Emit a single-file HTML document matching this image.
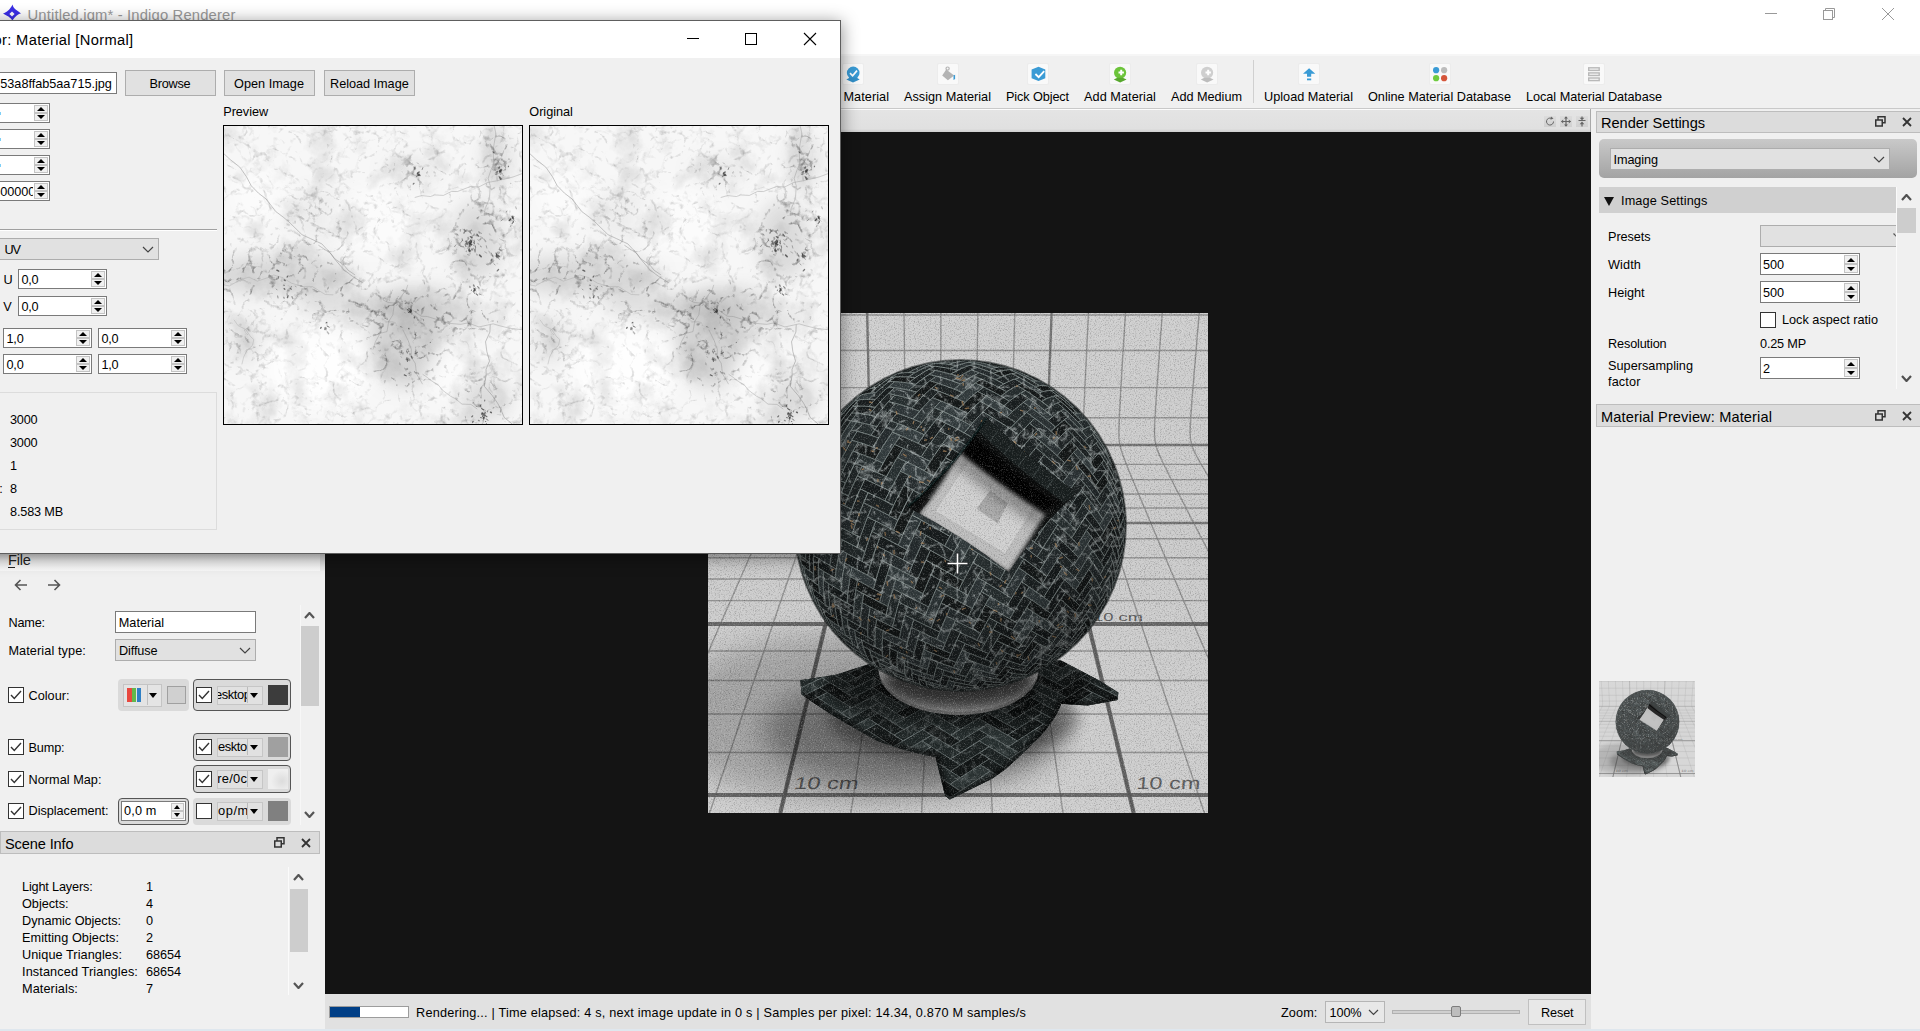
<!DOCTYPE html>
<html lang="en"><head><meta charset="utf-8"><title>Untitled.igm* - Indigo Renderer</title>
<style>
html,body{margin:0;padding:0}
body{width:1920px;height:1031px;overflow:hidden;position:relative;background:#f0f0f0;font-family:"Liberation Sans",sans-serif;font-size:12.7px;color:#000}
div,span.t,svg{position:absolute;box-sizing:border-box}
span.t{white-space:pre}
.clip{overflow:hidden}
.spin{background:#fff;border:1px solid #7a7a7a}
.sbtn{background:#f0f0f0;border:1px solid #c4c4c4}
.combo{background:#e1e1e1;border:1px solid #adadad}
.btn{background:#e1e1e1;border:1px solid #adadad}
.cb{background:#fff;border:1px solid #333}
.grp{background:#dadada;border-radius:4px}
.grpb{background:#dadada;border-radius:4px;border:1px solid #555}
.dock{background:#dcdcdc;border:1px solid #bdbdbd}

</style></head>
<body>
<div style="left:0px;top:0px;width:1920px;height:55px;background:#fff"></div>
<div style="left:0px;top:54px;width:1920px;height:2px;background:#f6f6f6"></div>
<svg style="left:2px;top:4px" width="20" height="17" viewBox="2 4 20 17"><path d="M12.6,4.6 C13,7.4 14.6,9.2 21,13.4 C17.4,14.2 15.6,16 12.2,20.8 C11.4,18.4 9.2,16.8 3,13.6 C7,12.4 9.6,10 12.6,4.6 Z" fill="#3a2ee6"/><path d="M12,11.4 L14.6,14 L12,16.6 L9.4,14 Z" fill="#fff"/></svg>
<span class="t" style="left:27.5px;top:8.17px;font-size:14.8px;line-height:14.8px;color:#9a9a9a;letter-spacing:0.156px;">Untitled.igm* - Indigo Renderer</span>
<div style="left:1765px;top:13px;width:12px;height:1px;background:#999"></div>
<svg style="left:1822px;top:7px" width="14" height="14" viewBox="0 0 14 14"><path d="M3.5,3.5 V1.5 H12.5 V10.5 H10.5" fill="none" stroke="#999" stroke-width="1"/><rect x="1.5" y="3.5" width="9" height="9" fill="none" stroke="#999" stroke-width="1"/></svg>
<svg style="left:1881px;top:7px" width="14" height="14" viewBox="0 0 14 14"><path d="M1,1 L13,13 M13,1 L1,13" stroke="#999" stroke-width="1" fill="none"/></svg>
<div style="left:0px;top:108px;width:1920px;height:1px;background:#c9c9c9"></div>
<div style="left:842px;top:63px;width:22px;height:22px;background:#f9f9f9;border:1px solid #ececec;border-radius:2px"></div><svg style="left:842px;top:63px" width="22" height="22" viewBox="0 0 22 22"><circle cx="11.2" cy="9.9" r="6.3" fill="#3a9bd5"/><path d="M4.3,16.4 L8,14.6 L14.4,14.6 L17.7,16.4 L11,19.4 Z" fill="#3390c8"/><polyline points="8,10.2 10.6,12.8 15,7.6" fill="none" stroke="#fff" stroke-width="1.7"/></svg><span class="t" style="left:843.5px;top:91.15px;font-size:12.7px;line-height:12.7px;color:#000;letter-spacing:0.047px;">Material</span>
<div style="left:937px;top:63px;width:22px;height:22px;background:#f9f9f9;border:1px solid #ececec;border-radius:2px"></div><svg style="left:937px;top:63px" width="22" height="22" viewBox="0 0 22 22"><path d="M9.2,6.4 L17.2,12.4 L10.9,17.2 L5.2,12.4 Z" fill="#b4b4b4"/><circle cx="10.6" cy="5.6" r="1.6" fill="none" stroke="#b4b4b4" stroke-width="1.2"/><path d="M16.5,12.6 L18.1,11.8 V16 L16.5,16.9 Z" fill="#3a9bd5"/></svg><span class="t" style="left:904px;top:91.15px;font-size:12.7px;line-height:12.7px;color:#000;letter-spacing:0.018px;">Assign Material</span>
<div style="left:1027px;top:63px;width:22px;height:22px;background:#f9f9f9;border:1px solid #ececec;border-radius:2px"></div><svg style="left:1027px;top:63px" width="22" height="22" viewBox="0 0 22 22"><path d="M11.5,3.8 L18.3,6.6 V15.2 L11.5,18.1 L4.6,15.2 V6.6 Z" fill="#3a9bd5"/><polyline points="8.4,11 11.7,14.2 17.2,8.2" fill="none" stroke="#fff" stroke-width="1.8"/></svg><span class="t" style="left:1006px;top:91.15px;font-size:12.7px;line-height:12.7px;color:#000;letter-spacing:-0.107px;">Pick Object</span>
<div style="left:1109px;top:63px;width:22px;height:22px;background:#f9f9f9;border:1px solid #ececec;border-radius:2px"></div><svg style="left:1109px;top:63px" width="22" height="22" viewBox="0 0 22 22"><circle cx="11.1" cy="9.8" r="6.1" fill="#6cc43a"/><path d="M4.8,16.6 L8.4,14.8 L13.8,14.8 L17.6,16.6 L11.1,19.4 Z" fill="#58a82e"/><path d="M12.2,6.8 V12.2 M9.5,9.5 H14.9" stroke="#fff" stroke-width="2" fill="none"/></svg><span class="t" style="left:1084px;top:91.15px;font-size:12.7px;line-height:12.7px;color:#000;letter-spacing:0.064px;">Add Material</span>
<div style="left:1196px;top:63px;width:22px;height:22px;background:#f9f9f9;border:1px solid #ececec;border-radius:2px"></div><svg style="left:1196px;top:63px" width="22" height="22" viewBox="0 0 22 22"><circle cx="11.1" cy="9.8" r="6.1" fill="#cfcfcf"/><path d="M4.8,16.6 L8.4,14.8 L13.8,14.8 L17.6,16.6 L11.1,19.4 Z" fill="#bdbdbd"/><path d="M12.2,6.8 V12.2 M9.5,9.5 H14.9" stroke="#fff" stroke-width="2" fill="none"/></svg><span class="t" style="left:1171px;top:91.15px;font-size:12.7px;line-height:12.7px;color:#000;letter-spacing:-0.023px;">Add Medium</span>
<div style="left:1253px;top:60px;width:1px;height:43px;background:#d0d0d0"></div>
<div style="left:1298px;top:63px;width:22px;height:22px;background:#f9f9f9;border:1px solid #ececec;border-radius:2px"></div><svg style="left:1298px;top:63px" width="22" height="22" viewBox="0 0 22 22"><path d="M11.1,5.2 L17.3,10.8 H13.2 V13.7 H9 V10.8 H5 Z" fill="#3a9bd5"/><rect x="9" y="15.5" width="4.2" height="1.8" fill="#3a9bd5"/></svg><span class="t" style="left:1264px;top:91.15px;font-size:12.7px;line-height:12.7px;color:#000;letter-spacing:0.009px;">Upload Material</span>
<div style="left:1429px;top:63px;width:22px;height:22px;background:#f9f9f9;border:1px solid #ececec;border-radius:2px"></div><svg style="left:1429px;top:63px" width="22" height="22" viewBox="0 0 22 22"><circle cx="7.1" cy="7.2" r="3.1" fill="#3a9bd5"/><circle cx="15.1" cy="7.2" r="3.1" fill="#bcbcbc"/><circle cx="7.1" cy="15.2" r="3.1" fill="#6fcb3f"/><circle cx="15.1" cy="15.2" r="3.1" fill="#d5553a"/></svg><span class="t" style="left:1368px;top:91.15px;font-size:12.7px;line-height:12.7px;color:#000;letter-spacing:-0.007px;">Online Material Database</span>
<div style="left:1583px;top:63px;width:22px;height:22px;background:#f9f9f9;border:1px solid #ececec;border-radius:2px"></div><svg style="left:1583px;top:63px" width="22" height="22" viewBox="0 0 22 22"><rect x="5.7" y="4.8" width="10.5" height="2.6" fill="#f4f4f4" stroke="#b9b9b9" stroke-width="1.4"/><rect x="5.7" y="9.9" width="10.5" height="2.6" fill="#f4f4f4" stroke="#b9b9b9" stroke-width="1.4"/><rect x="5.7" y="15" width="10.5" height="2.6" fill="#f4f4f4" stroke="#b9b9b9" stroke-width="1.4"/></svg><span class="t" style="left:1526px;top:91.15px;font-size:12.7px;line-height:12.7px;color:#000;letter-spacing:-0.036px;">Local Material Database</span>
<div style="left:325px;top:109px;width:1266px;height:1px;background:#fcfcfc"></div>
<div style="left:325px;top:110px;width:1266px;height:22px;background:linear-gradient(#e4e4e4,#e0e0e0 85%,#cfcfcf)"></div>
<div style="left:1590px;top:109px;width:1px;height:23px;background:#a9a9a9"></div>
<div style="left:1544px;top:116px;width:12px;height:11px;background:linear-gradient(#dcdcdc,#d0d0d0)"></div>
<div style="left:1560px;top:116px;width:12px;height:11px;background:linear-gradient(#dcdcdc,#d0d0d0)"></div>
<div style="left:1576px;top:116px;width:12px;height:11px;background:linear-gradient(#dcdcdc,#d0d0d0)"></div>
<svg style="left:1544px;top:116px" width="44" height="11" viewBox="0 0 44 11"><path d="M9.5,5.5 A3.5,3.5 0 1 1 7.3,2.3" fill="none" stroke="#666" stroke-width="1"/><path d="M7,0.5 L9.5,2.5 L6.5,3.8 Z" fill="#666"/><path d="M22,1 V10 M17.5,5.5 H26.5" stroke="#666" stroke-width="1.2"/><path d="M22,0.2 L24,2.6 H20 Z M22,10.8 L24,8.4 H20 Z M17,5.5 L19.2,3.5 V7.5 Z M27,5.5 L24.8,3.5 V7.5 Z" fill="#666"/><path d="M34.5,4.5 H41.5 M38,0.5 V3 M38,10.5 V7" stroke="#666" stroke-width="1.2"/><path d="M38,4.2 L40.3,1.8 H35.7 Z M38,5.6 L40.3,8.2 H35.7 Z" fill="#666"/></svg>
<div style="left:325px;top:132px;width:1266px;height:862px;background:#141414"></div>
<div style="left:325px;top:994px;width:1266px;height:35px;background:#e1e1e1"></div>
<div style="left:329px;top:1006px;width:80px;height:12px;background:#fff;border:1px solid #9c9c9c"></div>
<div style="left:330px;top:1007px;width:30px;height:10px;background:#003f87"></div>
<span class="t" style="left:416px;top:1006.75px;font-size:12.7px;line-height:12.7px;color:#000;letter-spacing:0.214px;">Rendering... | Time elapsed: 4 s, next image update in 0 s | Samples per pixel: 14.34, 0.870 M samples/s</span>
<span class="t" style="left:1281px;top:1006.75px;font-size:12.7px;line-height:12.7px;color:#000;letter-spacing:0.106px;">Zoom:</span>
<div style="left:1325px;top:1001px;width:60px;height:22px;background:#e8e8e8;border:1px solid #b5b5b5"></div>
<span class="t" style="left:1329.5px;top:1006.75px;font-size:12.7px;line-height:12.7px;color:#000;letter-spacing:-0.113px;">100%</span>
<svg style="left:1367.5px;top:1009.25px" width="11" height="6.5" viewBox="-1 -1 11 6.5"><polyline points="0,0 4.5,4.5 9,0" fill="none" stroke="#444" stroke-width="1.2"/></svg>
<div style="left:1392px;top:1009.5px;width:128px;height:4px;background:#cfcfcf;border:1px solid #b0b0b0"></div>
<div style="left:1451px;top:1005.5px;width:10px;height:11px;background:#bdbdbd;border:1px solid #7d7d7d;border-radius:2px"></div>
<div style="left:1528px;top:999px;width:58px;height:26px;background:#e8e8e8;border:1px solid #c0c0c0"></div>
<span class="t" style="left:1541px;top:1006.75px;font-size:12.7px;line-height:12.7px;color:#000;letter-spacing:-0.131px;">Reset</span>
<div style="left:0px;top:1029px;width:1920px;height:2px;background:#dfe7ee"></div>
<div class="dock" style="left:1596px;top:111px;width:1324px;height:22px"></div><span class="t" style="left:1601px;top:115.84px;font-size:14.6px;line-height:14.6px;color:#000;letter-spacing:-0.044px;">Render Settings</span><svg style="left:1875px;top:116px" width="11" height="11" viewBox="0 0 11 11"><rect x="3" y="0.75" width="7" height="6" fill="none" stroke="#333" stroke-width="1.5"/><rect x="0.75" y="4" width="6.5" height="6" fill="#dcdcdc" stroke="#333" stroke-width="1.5"/></svg><svg style="left:1901.5px;top:117px" width="10" height="10" viewBox="0 0 10 10"><path d="M1,1 L9,9 M9,1 L1,9" stroke="#333" stroke-width="1.8" fill="none"/></svg>
<div style="left:1599px;top:139px;width:318px;height:39px;background:linear-gradient(#c9c9c9,#a3a3a3);border-radius:5px"></div>
<div class="combo" style="left:1610px;top:148px;width:280px;height:22px"></div><span class="t" style="left:1613.5px;top:154.15px;font-size:12.7px;line-height:12.7px;color:#000;letter-spacing:-0.092px;">Imaging</span><svg style="left:1872.5px;top:156.0px" width="12" height="7" viewBox="-1 -1 12 7"><polyline points="0,0 5.0,5 10,0" fill="none" stroke="#444" stroke-width="1.2"/></svg>
<div style="left:1599px;top:187px;width:297px;height:26px;background:#d0d0d0"></div>
<div style="left:1603.5px;top:196.5px;width:0;height:0;border-left:5.5px solid transparent;border-right:5.5px solid transparent;border-top:9px solid #111"></div>
<span class="t" style="left:1621px;top:195.15px;font-size:12.7px;line-height:12.7px;color:#000;letter-spacing:0.133px;">Image Settings</span>
<svg style="left:1900.5px;top:194.0px" width="11" height="7" viewBox="-1 -1 11 7"><polyline points="0,5 4.5,0 9,5" fill="none" stroke="#505050" stroke-width="2.2"/></svg>
<div style="left:1897px;top:208px;width:19px;height:25px;background:#cdcdcd"></div>
<svg style="left:1900.5px;top:375.0px" width="11" height="7" viewBox="-1 -1 11 7"><polyline points="0,0 4.5,5 9,0" fill="none" stroke="#505050" stroke-width="2.2"/></svg>
<span class="t" style="left:1608px;top:231.15px;font-size:12.7px;line-height:12.7px;color:#000;letter-spacing:-0.074px;">Presets</span>
<div class="clip" style="left:1760px;top:225.4px;width:136px;height:21.6px"><div class="combo" style="left:0;top:0;width:160px;height:21.6px"></div></div>
<div style="left:1896px;top:187px;width:1px;height:202px;background:#fafafa"></div>
<svg style="left:1892px;top:233px" width="4" height="5" viewBox="0 0 4 5"><path d="M1.5,0.5 L4.5,3.5" stroke="#555" stroke-width="1.2"/></svg>
<span class="t" style="left:1608px;top:259.15px;font-size:12.7px;line-height:12.7px;color:#000;letter-spacing:0.113px;">Width</span>
<div class="spin" style="left:1760px;top:253px;width:100px;height:22px"></div><div class="sbtn" style="left:1844px;top:255px;width:14px;height:9.0px"></div><div class="sbtn" style="left:1844px;top:264.0px;width:14px;height:9.0px"></div><div style="left:1847.0px;top:258.0px;width:0;height:0;border-left:4.0px solid transparent;border-right:4.0px solid transparent;border-bottom:4.5px solid #000"></div><div style="left:1847.0px;top:266.8px;width:0;height:0;border-left:4.0px solid transparent;border-right:4.0px solid transparent;border-top:4.5px solid #000"></div><span class="t" style="left:1763px;top:259.15px;font-size:12.7px;line-height:12.7px;color:#000;letter-spacing:-0.057px;">500</span>
<span class="t" style="left:1608px;top:287.15px;font-size:12.7px;line-height:12.7px;color:#000;letter-spacing:-0.031px;">Height</span>
<div class="spin" style="left:1760px;top:281px;width:100px;height:22px"></div><div class="sbtn" style="left:1844px;top:283px;width:14px;height:9.0px"></div><div class="sbtn" style="left:1844px;top:292.0px;width:14px;height:9.0px"></div><div style="left:1847.0px;top:286.0px;width:0;height:0;border-left:4.0px solid transparent;border-right:4.0px solid transparent;border-bottom:4.5px solid #000"></div><div style="left:1847.0px;top:294.8px;width:0;height:0;border-left:4.0px solid transparent;border-right:4.0px solid transparent;border-top:4.5px solid #000"></div><span class="t" style="left:1763px;top:287.15px;font-size:12.7px;line-height:12.7px;color:#000;letter-spacing:-0.057px;">500</span>
<div class="cb" style="left:1760px;top:311.5px;width:16px;height:16px"></div>
<span class="t" style="left:1782px;top:314.15px;font-size:12.7px;line-height:12.7px;color:#000;letter-spacing:0.005px;">Lock aspect ratio</span>
<span class="t" style="left:1608px;top:338.15px;font-size:12.7px;line-height:12.7px;color:#000;letter-spacing:-0.145px;">Resolution</span>
<span class="t" style="left:1760px;top:338.15px;font-size:12.7px;line-height:12.7px;color:#000;letter-spacing:-0.179px;">0.25 MP</span>
<span class="t" style="left:1608px;top:360.45px;font-size:12.7px;line-height:12.7px;color:#000;letter-spacing:0.028px;">Supersampling</span>
<span class="t" style="left:1608px;top:376.15px;font-size:12.7px;line-height:12.7px;color:#000;letter-spacing:0.128px;">factor</span>
<div class="spin" style="left:1760px;top:357px;width:100px;height:22px"></div><div class="sbtn" style="left:1844px;top:359px;width:14px;height:9.0px"></div><div class="sbtn" style="left:1844px;top:368.0px;width:14px;height:9.0px"></div><div style="left:1847.0px;top:362.0px;width:0;height:0;border-left:4.0px solid transparent;border-right:4.0px solid transparent;border-bottom:4.5px solid #000"></div><div style="left:1847.0px;top:370.8px;width:0;height:0;border-left:4.0px solid transparent;border-right:4.0px solid transparent;border-top:4.5px solid #000"></div><span class="t" style="left:1763px;top:363.15px;font-size:12.7px;line-height:12.7px;color:#000;">2</span>
<div class="dock" style="left:1596px;top:404px;width:1324px;height:23px"></div><span class="t" style="left:1601px;top:410.04px;font-size:14.6px;line-height:14.6px;color:#000;letter-spacing:0.120px;">Material Preview: Material</span><svg style="left:1875px;top:410px" width="11" height="11" viewBox="0 0 11 11"><rect x="3" y="0.75" width="7" height="6" fill="none" stroke="#333" stroke-width="1.5"/><rect x="0.75" y="4" width="6.5" height="6" fill="#dcdcdc" stroke="#333" stroke-width="1.5"/></svg><svg style="left:1901.5px;top:411px" width="10" height="10" viewBox="0 0 10 10"><path d="M1,1 L9,9 M9,1 L1,9" stroke="#333" stroke-width="1.8" fill="none"/></svg>
<div style="left:0px;top:553px;width:320px;height:18px;background:linear-gradient(#d9d9d9,#f3f3f3 45%,#fafafa)"></div>
<div style="left:320px;top:553px;width:5px;height:18px;background:linear-gradient(#cfcfcf,#eeeeee)"></div>
<span class="t" style="left:8px;top:553.24px;font-size:14.6px;line-height:14.6px;color:#222;letter-spacing:-0.254px;">File</span>
<div style="left:8px;top:567px;width:7px;height:1px;background:#222"></div>
<svg style="left:13px;top:578px" width="50" height="14" viewBox="13 578 50 14"><path d="M27,585 H16 M20.5,580 L15.5,585 L20.5,590" fill="none" stroke="#555" stroke-width="1.6"/><path d="M48,585 H59 M54.5,580 L59.5,585 L54.5,590" fill="none" stroke="#555" stroke-width="1.6"/></svg>
<span class="t" style="left:8.4px;top:617.15px;font-size:12.7px;line-height:12.7px;color:#000;letter-spacing:-0.175px;">Name:</span>
<div style="left:115px;top:611px;width:141px;height:22px;background:#fff;border:1px solid #7a7a7a"></div>
<span class="t" style="left:118.7px;top:617.15px;font-size:12.7px;line-height:12.7px;color:#000;letter-spacing:0.047px;">Material</span>
<span class="t" style="left:8.4px;top:644.65px;font-size:12.7px;line-height:12.7px;color:#000;letter-spacing:0.103px;">Material type:</span>
<div class="combo" style="left:115px;top:639px;width:141px;height:22px"></div><span class="t" style="left:119px;top:644.65px;font-size:12.7px;line-height:12.7px;color:#000;letter-spacing:-0.109px;">Diffuse</span><svg style="left:238.5px;top:647.0px" width="12" height="7" viewBox="-1 -1 12 7"><polyline points="0,0 5.0,5 10,0" fill="none" stroke="#444" stroke-width="1.2"/></svg>
<div style="left:300px;top:605px;width:1px;height:220px;background:#f7f7f7"></div>
<svg style="left:304.0px;top:612.0px" width="11" height="7" viewBox="-1 -1 11 7"><polyline points="0,5 4.5,0 9,5" fill="none" stroke="#555" stroke-width="2.2"/></svg>
<div style="left:300.5px;top:626px;width:18.5px;height:80px;background:#cdcdcd"></div>
<svg style="left:304.0px;top:810.5px" width="11" height="7" viewBox="-1 -1 11 7"><polyline points="0,0 4.5,5 9,0" fill="none" stroke="#555" stroke-width="2.2"/></svg>
<div class="cb" style="left:8px;top:687px;width:16px;height:16px"></div><svg style="left:8px;top:687px" width="16" height="16" viewBox="0 0 16 16"><polyline points="3,8 6.3,11.5 13,4" fill="none" stroke="#333" stroke-width="1.4"/></svg>
<span class="t" style="left:28.5px;top:689.65px;font-size:12.7px;line-height:12.7px;color:#000;letter-spacing:0.013px;">Colour:</span>
<div class="grp" style="left:118px;top:679px;width:71px;height:31.5px"></div>
<div style="left:122.5px;top:683.5px;width:39px;height:23px;background:#e4e4e4;border:1px solid #c4c4c4"></div>
<div style="left:127px;top:688px;width:4.6px;height:13.6px;background:#e8483f"></div>
<div style="left:131.9px;top:688px;width:4.6px;height:13.6px;background:#63b84b"></div>
<div style="left:136.8px;top:688px;width:4.6px;height:13.6px;background:#2f7fc4"></div>
<div style="left:146.5px;top:685px;width:1px;height:20px;background:#c0c0c0"></div>
<div style="left:149.0px;top:692.5px;width:0;height:0;border-left:4.5px solid transparent;border-right:4.5px solid transparent;border-top:5px solid #000"></div>
<div style="left:167px;top:686px;width:19px;height:18px;background:#d0d0d0;border:1px solid #a0a0a0"></div>
<div class="grpb" style="left:193px;top:679px;width:98px;height:31.5px"></div><div class="cb" style="left:196px;top:687px;width:16px;height:16px"></div><svg style="left:196px;top:687px" width="16" height="16" viewBox="0 0 16 16"><polyline points="3,8 6.3,11.5 13,4" fill="none" stroke="#333" stroke-width="1.4"/></svg><div style="left:217px;top:685.5px;width:45.5px;height:19px;background:#e1e1e1;border:1px solid #c6c6c6"></div><div class="clip" style="left:218px;top:686px;width:28.5px;height:18px"><span class="t" style="left:-3px;top:3.08px;font-size:12.9px;line-height:12.9px;color:#000;letter-spacing:-0.414px;">esktop</span></div><div style="left:247px;top:687px;width:1px;height:16px;background:#bbb"></div><div style="left:250.0px;top:692.5px;width:0;height:0;border-left:4.5px solid transparent;border-right:4.5px solid transparent;border-top:5px solid #000"></div><div style="left:268px;top:685px;width:20px;height:20px;background:#3c3c3c"></div>
<div class="cb" style="left:8px;top:739px;width:16px;height:16px"></div><svg style="left:8px;top:739px" width="16" height="16" viewBox="0 0 16 16"><polyline points="3,8 6.3,11.5 13,4" fill="none" stroke="#333" stroke-width="1.4"/></svg>
<span class="t" style="left:28.5px;top:741.65px;font-size:12.7px;line-height:12.7px;color:#000;letter-spacing:-0.134px;">Bump:</span>
<div class="grpb" style="left:193px;top:733px;width:98px;height:28px"></div><div class="cb" style="left:196px;top:739px;width:16px;height:16px"></div><svg style="left:196px;top:739px" width="16" height="16" viewBox="0 0 16 16"><polyline points="3,8 6.3,11.5 13,4" fill="none" stroke="#333" stroke-width="1.4"/></svg><div style="left:217px;top:737.5px;width:45.5px;height:19px;background:#e1e1e1;border:1px solid #c6c6c6"></div><div class="clip" style="left:218px;top:738px;width:28.5px;height:18px"><span class="t" style="left:0px;top:3.08px;font-size:12.9px;line-height:12.9px;color:#000;letter-spacing:-0.414px;">esktop</span></div><div style="left:247px;top:739px;width:1px;height:16px;background:#bbb"></div><div style="left:250.0px;top:744.5px;width:0;height:0;border-left:4.5px solid transparent;border-right:4.5px solid transparent;border-top:5px solid #000"></div><div style="left:268px;top:737px;width:20px;height:20px;background:#a0a0a0"></div>
<div class="cb" style="left:8px;top:771px;width:16px;height:16px"></div><svg style="left:8px;top:771px" width="16" height="16" viewBox="0 0 16 16"><polyline points="3,8 6.3,11.5 13,4" fill="none" stroke="#333" stroke-width="1.4"/></svg>
<span class="t" style="left:28.5px;top:773.65px;font-size:12.7px;line-height:12.7px;color:#000;letter-spacing:0.034px;">Normal Map:</span>
<div class="grpb" style="left:193px;top:765px;width:98px;height:28px"></div><div class="cb" style="left:196px;top:771px;width:16px;height:16px"></div><svg style="left:196px;top:771px" width="16" height="16" viewBox="0 0 16 16"><polyline points="3,8 6.3,11.5 13,4" fill="none" stroke="#333" stroke-width="1.4"/></svg><div style="left:217px;top:769.5px;width:45.5px;height:19px;background:#e1e1e1;border:1px solid #c6c6c6"></div><div class="clip" style="left:218px;top:770px;width:28.5px;height:18px"><span class="t" style="left:-0.8px;top:3.08px;font-size:12.9px;line-height:12.9px;color:#000;letter-spacing:0.279px;">re/0c5</span></div><div style="left:247px;top:771px;width:1px;height:16px;background:#bbb"></div><div style="left:250.0px;top:776.5px;width:0;height:0;border-left:4.5px solid transparent;border-right:4.5px solid transparent;border-top:5px solid #000"></div><div style="left:268px;top:769px;width:20px;height:20px;background:#ebebeb"></div>
<div class="cb" style="left:8px;top:803px;width:16px;height:16px"></div><svg style="left:8px;top:803px" width="16" height="16" viewBox="0 0 16 16"><polyline points="3,8 6.3,11.5 13,4" fill="none" stroke="#333" stroke-width="1.4"/></svg>
<span class="t" style="left:28.5px;top:805.45px;font-size:12.7px;line-height:12.7px;color:#000;letter-spacing:-0.030px;">Displacement:</span>
<div class="grpb" style="left:118px;top:797.5px;width:71px;height:27.5px"></div>
<div style="left:121px;top:801px;width:64.5px;height:20px;background:#fff;border:1px solid #7a7a7a"></div>
<span class="t" style="left:124px;top:805.45px;font-size:12.7px;line-height:12.7px;color:#000;letter-spacing:0.153px;">0,0 m</span>
<div style="left:170.5px;top:803px;width:13px;height:8px;background:#f0f0f0;border:1px solid #c4c4c4"></div>
<div style="left:170.5px;top:811px;width:13px;height:8px;background:#f0f0f0;border:1px solid #c4c4c4"></div>
<div style="left:173.5px;top:805px;width:0;height:0;border-left:3.5px solid transparent;border-right:3.5px solid transparent;border-bottom:4px solid #000"></div>
<div style="left:173.5px;top:813px;width:0;height:0;border-left:3.5px solid transparent;border-right:3.5px solid transparent;border-top:4px solid #000"></div>
<div class="grp" style="left:193px;top:797.5px;width:98px;height:27.5px"></div><div class="cb" style="left:196px;top:803px;width:16px;height:16px"></div><div style="left:217px;top:801.5px;width:45.5px;height:19px;background:#e1e1e1;border:1px solid #c6c6c6"></div><div class="clip" style="left:218px;top:802px;width:28.5px;height:18px"><span class="t" style="left:0px;top:3.08px;font-size:12.9px;line-height:12.9px;color:#000;letter-spacing:0.534px;">op/ma</span></div><div style="left:247px;top:803px;width:1px;height:16px;background:#bbb"></div><div style="left:250.0px;top:808.5px;width:0;height:0;border-left:4.5px solid transparent;border-right:4.5px solid transparent;border-top:5px solid #000"></div><div style="left:268px;top:801px;width:20px;height:20px;background:#808080"></div>
<div class="dock" style="left:0px;top:831px;width:320px;height:23px"></div><span class="t" style="left:5px;top:837.04px;font-size:14.6px;line-height:14.6px;color:#000;letter-spacing:-0.128px;">Scene Info</span><svg style="left:274px;top:837px" width="11" height="11" viewBox="0 0 11 11"><rect x="3" y="0.75" width="7" height="6" fill="none" stroke="#333" stroke-width="1.5"/><rect x="0.75" y="4" width="6.5" height="6" fill="#dcdcdc" stroke="#333" stroke-width="1.5"/></svg><svg style="left:300.5px;top:838px" width="10" height="10" viewBox="0 0 10 10"><path d="M1,1 L9,9 M9,1 L1,9" stroke="#333" stroke-width="1.8" fill="none"/></svg>
<span class="t" style="left:22px;top:881.15px;font-size:12.7px;line-height:12.7px;color:#000;letter-spacing:-0.166px;">Light Layers:</span>
<span class="t" style="left:146px;top:881.15px;font-size:12.7px;line-height:12.7px;color:#000;">1</span>
<span class="t" style="left:22px;top:898.15px;font-size:12.7px;line-height:12.7px;color:#000;letter-spacing:-0.006px;">Objects:</span>
<span class="t" style="left:146px;top:898.15px;font-size:12.7px;line-height:12.7px;color:#000;">4</span>
<span class="t" style="left:22px;top:915.15px;font-size:12.7px;line-height:12.7px;color:#000;letter-spacing:-0.026px;">Dynamic Objects:</span>
<span class="t" style="left:146px;top:915.15px;font-size:12.7px;line-height:12.7px;color:#000;">0</span>
<span class="t" style="left:22px;top:932.15px;font-size:12.7px;line-height:12.7px;color:#000;letter-spacing:0.064px;">Emitting Objects:</span>
<span class="t" style="left:146px;top:932.15px;font-size:12.7px;line-height:12.7px;color:#000;">2</span>
<span class="t" style="left:22px;top:949.15px;font-size:12.7px;line-height:12.7px;color:#000;letter-spacing:0.074px;">Unique Triangles:</span>
<span class="t" style="left:146px;top:949.15px;font-size:12.7px;line-height:12.7px;color:#000;letter-spacing:-0.056px;">68654</span>
<span class="t" style="left:22px;top:966.15px;font-size:12.7px;line-height:12.7px;color:#000;letter-spacing:0.122px;">Instanced Triangles:</span>
<span class="t" style="left:146px;top:966.15px;font-size:12.7px;line-height:12.7px;color:#000;letter-spacing:-0.056px;">68654</span>
<span class="t" style="left:22px;top:983.15px;font-size:12.7px;line-height:12.7px;color:#000;letter-spacing:0.100px;">Materials:</span>
<span class="t" style="left:146px;top:983.15px;font-size:12.7px;line-height:12.7px;color:#000;">7</span>
<div style="left:288px;top:867px;width:1px;height:128px;background:#fbfbfb"></div>
<svg style="left:293.0px;top:874.0px" width="11" height="7" viewBox="-1 -1 11 7"><polyline points="0,5 4.5,0 9,5" fill="none" stroke="#555" stroke-width="2.2"/></svg>
<div style="left:289.5px;top:888.5px;width:18.5px;height:63px;background:#cdcdcd"></div>
<svg style="left:293.0px;top:981.5px" width="11" height="7" viewBox="-1 -1 11 7"><polyline points="0,0 4.5,5 9,0" fill="none" stroke="#555" stroke-width="2.2"/></svg>
<svg width="0" height="0" style="left:0;top:0"><defs><filter id="rGrain" x="0" y="0" width="100%" height="100%" color-interpolation-filters="sRGB"><feTurbulence type="fractalNoise" baseFrequency="0.9" numOctaves="2" seed="5"/><feColorMatrix type="matrix" values="0 0 0 0 1  0 0 0 0 1  0 0 0 0 1  0 3 0 0 -1.5"/></filter><filter id="rGrainD" x="0" y="0" width="100%" height="100%" color-interpolation-filters="sRGB"><feTurbulence type="fractalNoise" baseFrequency="0.8" numOctaves="2" seed="9"/><feColorMatrix type="matrix" values="0 0 0 0 0  0 0 0 0 0  0 0 0 0 0  3 0 0 0 -1.5"/></filter><filter id="rWisp" x="0" y="0" width="100%" height="100%" color-interpolation-filters="sRGB"><feTurbulence type="turbulence" baseFrequency="0.06" numOctaves="4" seed="21"/><feColorMatrix type="matrix" values="0 0 0 0 0.78  0 0 0 0 0.81  0 0 0 0 0.81  -5.5 0 0 0 1.25"/></filter><filter id="rB2"><feGaussianBlur stdDeviation="2"/></filter><filter id="rB6" x="-30%" y="-30%" width="160%" height="160%"><feGaussianBlur stdDeviation="7"/></filter><filter id="rB12" x="-40%" y="-40%" width="180%" height="180%"><feGaussianBlur stdDeviation="14"/></filter><filter id="rB1"><feGaussianBlur stdDeviation="0.6"/></filter><radialGradient id="rShade" cx="0.46" cy="0.30" r="0.78"><stop offset="0" stop-color="#000" stop-opacity="0"/><stop offset="0.55" stop-color="#000" stop-opacity="0.12"/><stop offset="0.85" stop-color="#000" stop-opacity="0.45"/><stop offset="1" stop-color="#000" stop-opacity="0.7"/></radialGradient><linearGradient id="rFloor" x1="0" y1="0" x2="0" y2="1"><stop offset="0" stop-color="#cfcfcf"/><stop offset="0.35" stop-color="#cbcbcb"/><stop offset="1" stop-color="#cecece"/></linearGradient><linearGradient id="rHoleSh" x1="0.75" y1="0.1" x2="0.3" y2="0.7"><stop offset="0" stop-color="#050505"/><stop offset="0.55" stop-color="#0a0a0a" stop-opacity="0.95"/><stop offset="1" stop-color="#222" stop-opacity="0"/></linearGradient><clipPath id="rSphClip"><circle cx="252.4" cy="212.5" r="165.5"/></clipPath><clipPath id="rImgClip"><rect width="500" height="500"/></clipPath><symbol id="renderImg" viewBox="0 0 500 500"><g clip-path="url(#rImgClip)"><g id="renderCore"><rect width="500" height="500" fill="url(#rFloor)"/><g fill="none" stroke="#868686" stroke-width="1.4" stroke-opacity="0.85"><path d="M11.4,-2 L12.0,6 L12.6,14 L13.1,22 L13.7,30 L14.2,38 L14.7,46 L15.3,54 L15.8,62 L16.3,70 L16.9,78 L17.4,86 L17.8,94 L18.3,102 L18.6,110 L18.8,118 L18.3,126 L16.3,134 L12.6,142 L8.0,150 L3.2,158 L-1.7,166 L-6.7,174 L-11.7,182 L-16.7,190 L-21.7,198 L-26.7,206 L-31.7,214 L-36.8,222 L-41.8,230 L-46.8,238 L-51.9,246 L-56.9,254 L-61.9,262 L-67.0,270 L-72.0,278 L-77.1,286 L-82.1,294 L-87.2,302 L-92.1,310 L-97.1,318 L-102.1,326 L-107.1,334 L-112.1,342 L-117.1,350 L-122.0,358 L-127.0,366 L-132.0,374 L-137.0,382 L-142.0,390 L-147.0,398 L-151.9,406 L-156.9,414 L-161.9,422 L-166.9,430 L-171.9,438 L-176.9,446 L-181.9,454 L-186.8,462 L-191.8,470 L-196.8,478 L-201.8,486 L-206.8,494 L-211.8,502"/><path d="M48.4,-2 L48.8,6 L49.3,14 L49.7,22 L50.2,30 L50.6,38 L51.1,46 L51.5,54 L52.0,62 L52.4,70 L52.8,78 L53.3,86 L53.7,94 L54.0,102 L54.3,110 L54.4,118 L54.0,126 L52.3,134 L49.1,142 L45.3,150 L41.2,158 L37.0,166 L32.8,174 L28.6,182 L24.3,190 L20.1,198 L15.8,206 L11.6,214 L7.3,222 L3.0,230 L-1.2,238 L-5.5,246 L-9.8,254 L-14.1,262 L-18.3,270 L-22.6,278 L-26.9,286 L-31.2,294 L-35.4,302 L-39.7,310 L-43.9,318 L-48.1,326 L-52.3,334 L-56.5,342 L-60.7,350 L-65.0,358 L-69.2,366 L-73.4,374 L-77.6,382 L-81.8,390 L-86.0,398 L-90.3,406 L-94.5,414 L-98.7,422 L-102.9,430 L-107.1,438 L-111.3,446 L-115.6,454 L-119.8,462 L-124.0,470 L-128.2,478 L-132.4,486 L-136.7,494 L-140.9,502"/><path d="M85.3,-2 L85.7,6 L86.0,14 L86.4,22 L86.7,30 L87.1,38 L87.4,46 L87.8,54 L88.1,62 L88.5,70 L88.8,78 L89.2,86 L89.5,94 L89.7,102 L90.0,110 L90.1,118 L89.7,126 L88.3,134 L85.7,142 L82.5,150 L79.2,158 L75.8,166 L72.3,174 L68.8,182 L65.4,190 L61.9,198 L58.4,206 L54.9,214 L51.4,222 L47.9,230 L44.4,238 L40.8,246 L37.3,254 L33.8,262 L30.3,270 L26.8,278 L23.3,286 L19.8,294 L16.3,302 L12.8,310 L9.4,318 L5.9,326 L2.5,334 L-1.0,342 L-4.4,350 L-7.9,358 L-11.3,366 L-14.8,374 L-18.2,382 L-21.7,390 L-25.1,398 L-28.6,406 L-32.0,414 L-35.5,422 L-38.9,430 L-42.4,438 L-45.8,446 L-49.3,454 L-52.7,462 L-56.2,470 L-59.6,478 L-63.1,486 L-66.5,494 L-70.0,502"/><path d="M122.2,-2 L122.5,6 L122.7,14 L123.0,22 L123.3,30 L123.5,38 L123.8,46 L124.1,54 L124.3,62 L124.6,70 L124.8,78 L125.1,86 L125.3,94 L125.5,102 L125.6,110 L125.7,118 L125.4,126 L124.3,134 L122.3,142 L119.8,150 L117.2,158 L114.5,166 L111.8,174 L109.1,182 L106.4,190 L103.6,198 L100.9,206 L98.2,214 L95.4,222 L92.7,230 L89.9,238 L87.2,246 L84.5,254 L81.7,262 L79.0,270 L76.2,278 L73.5,286 L70.7,294 L68.0,302 L65.3,310 L62.6,318 L59.9,326 L57.3,334 L54.6,342 L51.9,350 L49.2,358 L46.5,366 L43.8,374 L41.2,382 L38.5,390 L35.8,398 L33.1,406 L30.4,414 L27.7,422 L25.1,430 L22.4,438 L19.7,446 L17.0,454 L14.3,462 L11.6,470 L8.9,478 L6.3,486 L3.6,494 L0.9,502"/><path d="M196.0,-2 L196.1,6 L196.2,14 L196.3,22 L196.4,30 L196.4,38 L196.5,46 L196.6,54 L196.7,62 L196.7,70 L196.8,78 L196.9,86 L196.9,94 L197.0,102 L197.0,110 L197.0,118 L196.8,126 L196.3,134 L195.4,142 L194.3,150 L193.2,158 L192.0,166 L190.8,174 L189.6,182 L188.4,190 L187.2,198 L186.0,206 L184.7,214 L183.5,222 L182.3,230 L181.1,238 L179.9,246 L178.7,254 L177.5,262 L176.3,270 L175.1,278 L173.8,286 L172.6,294 L171.4,302 L170.3,310 L169.1,318 L168.0,326 L166.8,334 L165.7,342 L164.5,350 L163.4,358 L162.2,366 L161.1,374 L159.9,382 L158.8,390 L157.6,398 L156.5,406 L155.3,414 L154.2,422 L153.0,430 L151.9,438 L150.7,446 L149.6,454 L148.4,462 L147.3,470 L146.1,478 L145.0,486 L143.8,494 L142.7,502"/><path d="M232.9,-2 L232.9,6 L232.9,14 L232.9,22 L232.9,30 L232.9,38 L232.9,46 L232.8,54 L232.8,62 L232.8,70 L232.8,78 L232.8,86 L232.7,94 L232.7,102 L232.7,110 L232.6,118 L232.5,126 L232.3,134 L232.0,142 L231.6,150 L231.1,158 L230.7,166 L230.3,174 L229.8,182 L229.4,190 L228.9,198 L228.5,206 L228.0,214 L227.6,222 L227.1,230 L226.7,238 L226.3,246 L225.8,254 L225.4,262 L224.9,270 L224.5,278 L224.0,286 L223.6,294 L223.1,302 L222.8,310 L222.4,318 L222.0,326 L221.6,334 L221.2,342 L220.8,350 L220.5,358 L220.1,366 L219.7,374 L219.3,382 L218.9,390 L218.5,398 L218.2,406 L217.8,414 L217.4,422 L217.0,430 L216.6,438 L216.2,446 L215.9,454 L215.5,462 L215.1,470 L214.7,478 L214.3,486 L213.9,494 L213.6,502"/><path d="M269.9,-2 L269.8,6 L269.7,14 L269.5,22 L269.4,30 L269.3,38 L269.2,46 L269.1,54 L269.0,62 L268.9,70 L268.8,78 L268.7,86 L268.6,94 L268.5,102 L268.4,110 L268.3,118 L268.2,126 L268.3,134 L268.5,142 L268.8,150 L269.1,158 L269.4,166 L269.8,174 L270.1,182 L270.4,190 L270.7,198 L271.0,206 L271.3,214 L271.7,222 L272.0,230 L272.3,238 L272.6,246 L272.9,254 L273.2,262 L273.6,270 L273.9,278 L274.2,286 L274.5,294 L274.9,302 L275.2,310 L275.6,318 L276.0,326 L276.4,334 L276.8,342 L277.2,350 L277.5,358 L277.9,366 L278.3,374 L278.7,382 L279.1,390 L279.5,398 L279.8,406 L280.2,414 L280.6,422 L281.0,430 L281.4,438 L281.8,446 L282.1,454 L282.5,462 L282.9,470 L283.3,478 L283.7,486 L284.1,494 L284.4,502"/><path d="M306.8,-2 L306.6,6 L306.4,14 L306.2,22 L306.0,30 L305.8,38 L305.6,46 L305.4,54 L305.2,62 L305.0,70 L304.8,78 L304.6,86 L304.4,94 L304.2,102 L304.0,110 L303.9,118 L303.9,126 L304.3,134 L305.1,142 L306.1,150 L307.1,158 L308.2,166 L309.2,174 L310.3,182 L311.4,190 L312.5,198 L313.5,206 L314.6,214 L315.7,222 L316.8,230 L317.9,238 L319.0,246 L320.0,254 L321.1,262 L322.2,270 L323.3,278 L324.4,286 L325.5,294 L326.6,302 L327.7,310 L328.9,318 L330.0,326 L331.2,334 L332.3,342 L333.5,350 L334.6,358 L335.8,366 L336.9,374 L338.1,382 L339.2,390 L340.4,398 L341.5,406 L342.7,414 L343.8,422 L345.0,430 L346.1,438 L347.3,446 L348.4,454 L349.6,462 L350.7,470 L351.9,478 L353.0,486 L354.2,494 L355.3,502"/><path d="M380.6,-2 L380.2,6 L379.8,14 L379.4,22 L379.0,30 L378.7,38 L378.3,46 L377.9,54 L377.5,62 L377.1,70 L376.7,78 L376.4,86 L376.0,94 L375.7,102 L375.4,110 L375.2,118 L375.3,126 L376.3,134 L378.3,142 L380.6,150 L383.1,158 L385.6,166 L388.2,174 L390.8,182 L393.4,190 L396.0,198 L398.6,206 L401.2,214 L403.8,222 L406.4,230 L409.1,238 L411.7,246 L414.3,254 L416.9,262 L419.5,270 L422.1,278 L424.8,286 L427.4,294 L430.0,302 L432.7,310 L435.4,318 L438.1,326 L440.7,334 L443.4,342 L446.1,350 L448.8,358 L451.5,366 L454.2,374 L456.8,382 L459.5,390 L462.2,398 L464.9,406 L467.6,414 L470.3,422 L472.9,430 L475.6,438 L478.3,446 L481.0,454 L483.7,462 L486.4,470 L489.1,478 L491.7,486 L494.4,494 L497.1,502"/><path d="M417.5,-2 L417.1,6 L416.6,14 L416.1,22 L415.6,30 L415.1,38 L414.6,46 L414.1,54 L413.7,62 L413.2,70 L412.7,78 L412.3,86 L411.8,94 L411.4,102 L411.1,110 L410.9,118 L411.0,126 L412.3,134 L414.8,142 L417.9,150 L421.1,158 L424.4,166 L427.7,174 L431.0,182 L434.4,190 L437.8,198 L441.1,206 L444.5,214 L447.9,222 L451.3,230 L454.6,238 L458.0,246 L461.4,254 L464.8,262 L468.2,270 L471.6,278 L474.9,286 L478.3,294 L481.7,302 L485.2,310 L488.6,318 L492.1,326 L495.5,334 L499.0,342 L502.4,350 L505.9,358 L509.3,366 L512.8,374 L516.2,382 L519.7,390 L523.1,398 L526.6,406 L530.0,414 L533.5,422 L536.9,430 L540.4,438 L543.8,446 L547.3,454 L550.7,462 L554.2,470 L557.6,478 L561.1,486 L564.5,494 L568.0,502"/><path d="M454.4,-2 L453.9,6 L453.3,14 L452.7,22 L452.1,30 L451.5,38 L451.0,46 L450.4,54 L449.8,62 L449.3,70 L448.7,78 L448.2,86 L447.6,94 L447.2,102 L446.7,110 L446.5,118 L446.7,126 L448.3,134 L451.4,142 L455.1,150 L459.1,158 L463.1,166 L467.2,174 L471.3,182 L475.4,190 L479.5,198 L483.7,206 L487.8,214 L491.9,222 L496.1,230 L500.2,238 L504.4,246 L508.5,254 L512.7,262 L516.8,270 L521.0,278 L525.1,286 L529.3,294 L533.4,302 L537.7,310 L541.9,318 L546.1,326 L550.3,334 L554.5,342 L558.7,350 L563.0,358 L567.2,366 L571.4,374 L575.6,382 L579.8,390 L584.0,398 L588.3,406 L592.5,414 L596.7,422 L600.9,430 L605.1,438 L609.3,446 L613.6,454 L617.8,462 L622.0,470 L626.2,478 L630.4,486 L634.7,494 L638.9,502"/><path d="M491.4,-2 L490.7,6 L490.0,14 L489.3,22 L488.7,30 L488.0,38 L487.3,46 L486.7,54 L486.0,62 L485.3,70 L484.7,78 L484.1,86 L483.5,94 L482.9,102 L482.4,110 L482.1,118 L482.4,126 L484.3,134 L488.0,142 L492.4,150 L497.1,158 L501.8,166 L506.7,174 L511.5,182 L516.4,190 L521.3,198 L526.2,206 L531.1,214 L536.0,222 L540.9,230 L545.8,238 L550.7,246 L555.6,254 L560.6,262 L565.5,270 L570.4,278 L575.3,286 L580.2,294 L585.2,302 L590.1,310 L595.1,318 L600.1,326 L605.1,334 L610.1,342 L615.1,350 L620.0,358 L625.0,366 L630.0,374 L635.0,382 L640.0,390 L645.0,398 L649.9,406 L654.9,414 L659.9,422 L664.9,430 L669.9,438 L674.9,446 L679.9,454 L684.8,462 L689.8,470 L694.8,478 L699.8,486 L704.8,494 L709.8,502"/><path d="M0,2.0 H500"/><path d="M0,37.5 H500"/><path d="M0,74.6 H500"/><path d="M0,104.8 H500"/><path d="M0,151.4 H500"/><path d="M0,166.6 H500"/><path d="M0,181.0 H500"/><path d="M0,195.0 H500"/><path d="M0,225.8 H500"/><path d="M0,244.7 H500"/><path d="M0,266.0 H500"/><path d="M0,287.6 H500"/><path d="M0,338.0 H500"/><path d="M0,367.5 H500"/><path d="M0,401.0 H500"/><path d="M0,439.5 H500"/></g><g fill="none" stroke="#6a6a6a" stroke-width="2.4" stroke-opacity="0.9"><path d="M159.1,-2 L159.3,6 L159.5,14 L159.6,22 L159.8,30 L160.0,38 L160.2,46 L160.3,54 L160.5,62 L160.6,70 L160.8,78 L161.0,86 L161.1,94 L161.2,102 L161.3,110 L161.3,118 L161.1,126 L160.3,134 L158.8,142 L157.1,150 L155.2,158 L153.2,166 L151.3,174 L149.3,182 L147.4,190 L145.4,198 L143.4,206 L141.5,214 L139.5,222 L137.5,230 L135.5,238 L133.5,246 L131.6,254 L129.6,262 L127.6,270 L125.6,278 L123.7,286 L121.7,294 L119.7,302 L117.8,310 L115.9,318 L114.0,326 L112.0,334 L110.1,342 L108.2,350 L106.3,358 L104.4,366 L102.5,374 L100.5,382 L98.6,390 L96.7,398 L94.8,406 L92.9,414 L91.0,422 L89.0,430 L87.1,438 L85.2,446 L83.3,454 L81.4,462 L79.5,470 L77.5,478 L75.6,486 L73.7,494 L71.8,502"/><path d="M343.7,-2 L343.4,6 L343.1,14 L342.8,22 L342.5,30 L342.2,38 L341.9,46 L341.6,54 L341.3,62 L341.0,70 L340.7,78 L340.5,86 L340.2,94 L339.9,102 L339.7,110 L339.6,118 L339.6,126 L340.3,134 L341.7,142 L343.3,150 L345.1,158 L346.9,166 L348.7,174 L350.6,182 L352.4,190 L354.2,198 L356.1,206 L357.9,214 L359.8,222 L361.6,230 L363.5,238 L365.3,246 L367.2,254 L369.0,262 L370.9,270 L372.7,278 L374.6,286 L376.4,294 L378.3,302 L380.2,310 L382.1,318 L384.0,326 L386.0,334 L387.9,342 L389.8,350 L391.7,358 L393.6,366 L395.5,374 L397.5,382 L399.4,390 L401.3,398 L403.2,406 L405.1,414 L407.0,422 L409.0,430 L410.9,438 L412.8,446 L414.7,454 L416.6,462 L418.5,470 L420.5,478 L422.4,486 L424.3,494 L426.2,502"/><path d="M0,132.0 H500"/><path d="M0,210.0 H500"/></g><g fill="none" stroke="#5a5a5a" stroke-width="4.2" stroke-opacity="0.88"><path d="M0,311.0 H500"/><path d="M0,482.0 H500"/><path d="M120.2,300 L115.4,320 L110.6,340 L105.8,360 L101.0,380 L96.2,400 L91.4,420 L86.6,440 L81.8,460 L77.1,480 L72.3,500"/><path d="M377.8,300 L382.6,320 L387.4,340 L392.2,360 L397.0,380 L401.8,400 L406.6,420 L411.4,440 L416.2,460 L420.9,480 L425.7,500"/></g><g font-family="Liberation Sans, sans-serif" fill="#5c5c5c"><text transform="translate(85.5,475.5) skewX(-10) scale(1.07,0.78)" font-size="22">10 cm</text><text transform="translate(428,475.5) skewX(-4) scale(1.07,0.78)" font-size="22">10 cm</text><text transform="translate(385,308) scale(1.08,0.6)" font-size="17">10 cm</text></g><ellipse cx="150" cy="405" rx="200" ry="85" fill="#000" opacity="0.2" filter="url(#rB12)"/><ellipse cx="205" cy="418" rx="150" ry="55" fill="#000" opacity="0.33" filter="url(#rB12)"/><ellipse cx="245" cy="405" rx="125" ry="42" fill="#000" opacity="0.36" filter="url(#rB6)"/><path d="M92.3,367.3 L128,361.7 L160,351.4 L353,347.6 L390.8,367.3 L410.4,379.5 L409.5,387 L379.5,392.6 L353,390.8 Q350,402 334.5,420.8 Q316,440 297,456.4 L284,465.8 L241.7,486.4 L237,482.6 L227.6,444 Q203,440 169.5,428 Q135.8,410 109.5,392.6 L93.6,381.4 Z" fill="#181d1d"/><clipPath id="rBaseClip"><path d="M92.3,367.3 L128,361.7 L160,351.4 L353,347.6 L390.8,367.3 L410.4,379.5 L409.5,387 L379.5,392.6 L353,390.8 Q350,402 334.5,420.8 Q316,440 297,456.4 L284,465.8 L241.7,486.4 L237,482.6 L227.6,444 Q203,440 169.5,428 Q135.8,410 109.5,392.6 L93.6,381.4 Z"/></clipPath><g clip-path="url(#rBaseClip)"><g stroke="#7a8585" stroke-width="0.9" stroke-opacity="0.6" stroke-linejoin="round"><path fill="#111515" d="M127.4,491.5 161.2,471.2 151.9,464.6 118.2,484.6ZM74.7,451.9 108.1,433.7 99.8,427.9 66.5,445.8ZM78.7,400.1 89.1,394.8 66.5,379.4 56.1,384.5ZM192.1,464.6 223.0,445.8 213.5,439.7 182.7,458.2ZM89.1,394.8 119.5,379.4 111.8,374.5 81.5,389.6ZM242.1,484.6 252.4,477.8 222.5,458.2 212.2,464.6ZM305.2,498.5 315.1,491.5 282.8,471.2 272.9,477.8ZM252.4,464.6 281.6,445.8 271.6,439.7 242.4,458.2ZM196.9,405.4 225.1,389.6 216.4,384.5 188.2,400.1ZM189.2,389.6 198.6,384.5 173.7,369.6 164.3,374.5ZM198.6,384.5 225.8,369.6 217.4,364.8 190.1,379.4ZM190.1,379.4 199.4,374.5 174.9,360.1 165.7,364.8ZM363.9,471.2 372.9,464.6 340.3,445.8 331.2,451.9ZM252.1,405.4 279.0,389.6 269.8,384.5 242.9,400.1ZM191.1,369.6 200.2,364.8 176.0,350.8 166.9,355.4ZM309.3,427.9 335.7,410.9 325.7,405.4 299.4,422.1ZM299.4,422.1 308.3,416.5 279.5,400.1 270.5,405.4ZM192.0,360.1 200.9,355.4 177.1,341.9 168.2,346.3ZM192.9,350.8 201.6,346.3 178.2,333.2 169.4,337.5ZM368.6,439.7 393.8,422.1 383.2,416.5 357.9,433.7ZM357.9,433.7 366.5,427.9 335.7,410.9 327.0,416.5ZM307.3,405.4 332.8,389.6 323.2,384.5 297.7,400.1ZM243.2,369.6 251.9,364.8 226.6,350.8 217.9,355.4ZM251.9,364.8 277.1,350.8 268.5,346.3 243.3,360.1ZM360.7,394.8 384.5,379.4 374.6,374.5 350.8,389.6ZM404.6,389.6 412.3,384.5 382.3,369.6 374.6,374.5ZM353.8,355.4 376.3,341.9 367.1,337.5 344.5,350.8ZM407.1,364.8 428.8,350.8 419.0,346.3 397.4,360.1Z"/><path fill="#161b1b" d="M57.5,520.4 94.6,498.5 85.7,491.5 48.7,513.0ZM122.6,520.4 157.8,498.5 148.2,491.5 113.1,513.0ZM77.8,439.7 110.6,422.1 102.4,416.5 69.7,433.7ZM188.8,505.7 221.5,484.6 211.5,477.8 178.8,498.5ZM75.8,410.9 86.4,405.4 63.5,389.6 52.9,394.8ZM252.7,520.4 284.1,498.5 273.4,491.5 241.9,513.0ZM191.0,477.8 222.5,458.2 212.9,451.9 181.4,471.2ZM182.7,458.2 193.1,451.9 165.8,433.7 155.4,439.7ZM86.8,369.6 96.7,364.8 74.9,350.8 65.1,355.4ZM242.4,458.2 252.3,451.9 223.4,433.7 213.5,439.7ZM186.1,422.1 196.0,416.5 169.9,400.1 160.1,405.4ZM303.1,471.2 312.7,464.6 281.6,445.8 272.1,451.9ZM380.1,505.7 407.4,484.6 395.7,477.8 368.4,498.5ZM377.6,491.5 404.5,471.2 393.0,464.6 366.1,484.6ZM199.4,374.5 226.2,360.1 217.9,355.4 191.1,369.6ZM200.9,355.4 226.9,341.9 218.8,337.5 192.9,350.8ZM201.6,346.3 227.2,333.2 219.3,328.9 193.7,341.9ZM306.4,394.8 331.5,379.4 322.0,374.5 296.9,389.6ZM305.4,384.5 330.2,369.6 320.9,364.8 296.1,379.4ZM294.0,350.8 302.0,346.3 276.3,333.2 268.2,337.5ZM343.1,341.9 350.6,337.5 324.2,324.8 316.6,328.9Z"/><path fill="#1b2121" d="M113.1,513.0 125.0,505.7 97.5,484.6 85.7,491.5ZM129.6,477.8 162.8,458.2 153.7,451.9 120.6,471.2ZM81.5,389.6 91.7,384.5 69.4,369.6 59.2,374.5ZM139.8,416.5 169.9,400.1 161.5,394.8 131.5,410.9ZM316.4,505.7 345.4,484.6 334.3,477.8 305.2,498.5ZM143.4,394.8 172.5,379.4 164.3,374.5 135.3,389.6ZM252.3,451.9 281.1,433.7 271.3,427.9 242.5,445.8ZM99.0,355.4 127.3,341.9 120.0,337.5 91.7,350.8ZM252.3,439.7 280.5,422.1 270.9,416.5 242.6,433.7ZM146.8,374.5 174.9,360.1 166.9,355.4 138.9,369.6ZM302.1,458.2 311.5,451.9 281.1,433.7 271.6,439.7ZM252.2,416.5 279.5,400.1 270.2,394.8 242.8,410.9ZM242.8,410.9 252.1,405.4 225.1,389.6 215.8,394.8ZM310.4,439.7 337.1,422.1 327.0,416.5 300.3,433.7ZM151.5,346.3 178.2,333.2 170.6,328.9 143.9,341.9ZM308.3,416.5 334.2,400.1 324.5,394.8 298.5,410.9ZM252.0,384.5 278.0,369.6 269.2,364.8 243.1,379.4ZM424.8,471.2 433.2,464.6 399.0,445.8 390.4,451.9ZM421.6,458.2 429.9,451.9 396.3,433.7 387.9,439.7ZM356.0,422.1 364.5,416.5 334.2,400.1 325.7,405.4ZM418.5,445.8 426.7,439.7 393.8,422.1 385.5,427.9ZM364.5,416.5 389.0,400.1 378.8,394.8 354.2,410.9ZM354.2,410.9 362.5,405.4 332.8,389.6 324.5,394.8ZM420.6,416.5 443.7,400.1 433.1,394.8 409.9,410.9ZM417.8,405.4 440.5,389.6 430.1,384.5 407.2,400.1ZM357.1,374.5 380.2,360.1 370.7,355.4 347.5,369.6ZM302.0,346.3 325.3,333.2 316.6,328.9 293.3,341.9ZM415.0,394.8 437.5,379.4 427.2,374.5 404.6,389.6ZM402.1,379.4 409.7,374.5 380.2,360.1 372.6,364.8ZM395.1,350.8 402.3,346.3 374.4,333.2 367.1,337.5ZM392.9,341.9 400.0,337.5 372.5,324.8 365.3,328.9Z"/><path fill="#212828" d="M125.0,505.7 159.5,484.6 150.1,477.8 115.7,498.5ZM177.5,513.0 188.8,505.7 159.5,484.6 148.2,491.5ZM131.8,464.6 164.3,445.8 155.4,439.7 122.9,458.2ZM180.2,484.6 191.0,477.8 162.8,458.2 151.9,464.6ZM133.9,451.9 165.8,433.7 157.0,427.9 125.2,445.8ZM127.4,433.7 137.9,427.9 112.9,410.9 102.4,416.5ZM131.5,410.9 141.7,405.4 117.4,389.6 107.2,394.8ZM317.7,520.4 347.3,498.5 335.9,491.5 306.3,513.0ZM242.3,471.2 252.4,464.6 223.0,445.8 212.9,451.9ZM194.1,439.7 223.9,422.1 214.7,416.5 185.0,433.7ZM94.2,374.5 123.5,360.1 116.0,355.4 86.8,369.6ZM195.1,427.9 224.3,410.9 215.3,405.4 186.1,422.1ZM96.7,364.8 125.4,350.8 118.0,346.3 89.3,360.1ZM242.5,445.8 252.3,439.7 223.9,422.1 214.1,427.9ZM145.1,384.5 173.7,369.6 165.7,364.8 137.1,379.4ZM370.7,513.0 380.1,505.7 345.4,484.6 335.9,491.5ZM150.0,355.4 177.1,341.9 169.4,337.5 142.3,350.8ZM375.2,477.8 401.7,458.2 390.4,451.9 363.9,471.2ZM242.9,400.1 252.0,394.8 225.5,379.4 216.4,384.5ZM143.9,341.9 152.9,337.5 130.9,324.8 121.9,328.9ZM372.9,464.6 399.0,445.8 387.9,439.7 361.9,458.2ZM428.1,484.6 436.7,477.8 401.7,458.2 393.0,464.6ZM193.7,341.9 202.4,337.5 179.2,324.8 170.6,328.9ZM251.9,355.4 276.7,341.9 268.2,337.5 243.4,350.8ZM243.4,350.8 251.8,346.3 227.2,333.2 218.8,337.5ZM415.5,433.7 423.6,427.9 391.3,410.9 383.2,416.5ZM304.5,374.5 328.9,360.1 319.8,355.4 295.4,369.6ZM409.9,410.9 417.8,405.4 386.7,389.6 378.8,394.8ZM407.2,400.1 415.0,394.8 384.5,379.4 376.7,384.5ZM346.0,360.1 353.8,355.4 326.5,341.9 318.7,346.3ZM344.5,350.8 352.2,346.3 325.3,333.2 317.7,337.5ZM402.3,346.3 423.4,333.2 414.0,328.9 392.9,341.9Z"/><path fill="#272f2f" d="M61.2,505.7 97.5,484.6 88.7,477.8 52.5,498.5ZM64.8,491.5 100.3,471.2 91.6,464.6 56.2,484.6ZM68.2,477.8 103.0,458.2 94.5,451.9 59.8,471.2ZM71.6,464.6 105.6,445.8 97.2,439.7 63.2,458.2ZM118.2,484.6 129.6,477.8 103.0,458.2 91.6,464.6ZM120.6,471.2 131.8,464.6 105.6,445.8 94.5,451.9ZM122.9,458.2 133.9,451.9 108.1,433.7 97.2,439.7ZM189.9,491.5 222.0,471.2 212.2,464.6 180.2,484.6ZM136.0,439.7 167.2,422.1 158.5,416.5 127.4,433.7ZM129.4,422.1 139.8,416.5 115.2,400.1 104.8,405.4ZM91.7,384.5 121.5,369.6 113.9,364.8 84.1,379.4ZM133.4,400.1 143.4,394.8 119.5,379.4 109.5,384.5ZM196.0,416.5 224.7,400.1 215.8,394.8 187.2,410.9ZM137.1,379.4 146.8,374.5 123.5,360.1 113.9,364.8ZM91.7,350.8 101.3,346.3 80.1,333.2 70.6,337.5ZM382.7,520.4 410.5,498.5 398.5,491.5 370.7,513.0ZM313.8,477.8 341.9,458.2 331.2,451.9 303.1,471.2ZM138.9,369.6 148.4,364.8 125.4,350.8 116.0,355.4ZM252.2,427.9 280.0,410.9 270.5,405.4 242.7,422.1ZM242.7,422.1 252.2,416.5 224.7,400.1 215.3,405.4ZM197.7,394.8 225.5,379.4 216.9,374.5 189.2,389.6ZM301.2,445.8 310.4,439.7 280.5,422.1 271.3,427.9ZM252.0,394.8 278.5,379.4 269.5,374.5 243.0,389.6ZM243.0,389.6 252.0,384.5 225.8,369.6 216.9,374.5ZM359.8,445.8 368.6,439.7 337.1,422.1 328.4,427.9ZM298.5,410.9 307.3,405.4 279.0,389.6 270.2,394.8ZM243.1,379.4 252.0,374.5 226.2,360.1 217.4,364.8ZM297.7,400.1 306.4,394.8 278.5,379.4 269.8,384.5ZM252.0,374.5 277.6,360.1 268.8,355.4 243.2,369.6ZM366.5,427.9 391.3,410.9 380.9,405.4 356.0,422.1ZM352.5,400.1 360.7,394.8 331.5,379.4 323.2,384.5ZM243.5,341.9 251.8,337.5 227.5,324.8 219.3,328.9ZM412.7,422.1 420.6,416.5 389.0,400.1 380.9,405.4ZM350.8,389.6 358.9,384.5 330.2,369.6 322.0,374.5ZM294.7,360.1 302.8,355.4 276.7,341.9 268.5,346.3ZM347.5,369.6 355.4,364.8 327.7,350.8 319.8,355.4ZM293.3,341.9 301.2,337.5 275.9,324.8 268.0,328.9ZM412.3,384.5 434.5,369.6 424.4,364.8 402.1,379.4ZM409.7,374.5 431.6,360.1 421.7,355.4 399.7,369.6ZM399.7,369.6 407.1,364.8 378.2,350.8 370.7,355.4Z"/><path fill="#141818" d="M115.7,498.5 127.4,491.5 100.3,471.2 88.7,477.8ZM178.8,498.5 189.9,491.5 161.2,471.2 150.1,477.8ZM125.2,445.8 136.0,439.7 110.6,422.1 99.8,427.9ZM241.9,513.0 252.6,505.7 221.5,484.6 210.8,491.5ZM86.4,405.4 117.4,389.6 109.5,384.5 78.7,400.1ZM252.6,505.7 283.5,484.6 272.9,477.8 242.0,498.5ZM84.1,379.4 94.2,374.5 72.2,360.1 62.2,364.8ZM306.3,513.0 316.4,505.7 283.5,484.6 273.4,491.5ZM185.0,433.7 195.1,427.9 168.6,410.9 158.5,416.5ZM135.3,389.6 145.1,384.5 121.5,369.6 111.8,374.5ZM315.1,491.5 343.7,471.2 332.8,464.6 304.1,484.6ZM242.6,433.7 252.2,427.9 224.3,410.9 214.7,416.5ZM101.3,346.3 129.1,333.2 121.9,328.9 94.1,341.9ZM94.1,341.9 103.5,337.5 82.6,324.8 73.2,328.9ZM368.4,498.5 377.6,491.5 343.7,471.2 334.3,477.8ZM148.4,364.8 176.0,350.8 168.2,346.3 140.6,360.1ZM140.6,360.1 150.0,355.4 127.3,341.9 118.0,346.3ZM366.1,484.6 375.2,477.8 341.9,458.2 332.8,464.6ZM435.1,513.0 443.9,505.7 407.4,484.6 398.5,491.5ZM370.7,451.9 396.3,433.7 385.5,427.9 359.8,445.8ZM296.9,389.6 305.4,384.5 278.0,369.6 269.5,374.5ZM295.4,369.6 303.7,364.8 277.1,350.8 268.8,355.4ZM423.6,427.9 447.0,410.9 436.2,405.4 412.7,422.1ZM358.9,384.5 382.3,369.6 372.6,364.8 349.1,379.4ZM349.1,379.4 357.1,374.5 328.9,360.1 320.9,364.8ZM302.8,355.4 326.5,341.9 317.7,337.5 294.0,350.8ZM352.2,346.3 374.4,333.2 365.3,328.9 343.1,341.9ZM397.4,360.1 404.7,355.4 376.3,341.9 368.9,346.3ZM404.7,355.4 426.1,341.9 416.5,337.5 395.1,350.8ZM442.7,341.9 449.4,337.5 420.9,324.8 414.0,328.9Z"/><path fill="#2c3434" d="M187.6,520.4 221.0,498.5 210.8,491.5 177.5,513.0ZM80.8,427.9 112.9,410.9 104.8,405.4 72.8,422.1ZM83.7,416.5 115.2,400.1 107.2,394.8 75.8,410.9ZM181.4,471.2 192.1,464.6 164.3,445.8 153.7,451.9ZM242.0,498.5 252.5,491.5 222.0,471.2 211.5,477.8ZM137.9,427.9 168.6,410.9 160.1,405.4 129.4,422.1ZM252.5,491.5 282.8,471.2 272.5,464.6 242.1,484.6ZM193.1,451.9 223.4,433.7 214.1,427.9 183.8,445.8ZM183.8,445.8 194.1,439.7 167.2,422.1 157.0,427.9ZM252.4,477.8 282.2,458.2 272.1,451.9 242.3,471.2ZM141.7,405.4 171.2,389.6 163.0,384.5 133.4,400.1ZM89.3,360.1 99.0,355.4 77.5,341.9 67.9,346.3ZM304.1,484.6 313.8,477.8 282.2,458.2 272.5,464.6ZM187.2,410.9 196.9,405.4 171.2,389.6 161.5,394.8ZM188.2,400.1 197.7,394.8 172.5,379.4 163.0,384.5ZM312.7,464.6 340.3,445.8 329.8,439.7 302.1,458.2ZM311.5,451.9 338.7,433.7 328.4,427.9 301.2,445.8ZM142.3,350.8 151.5,346.3 129.1,333.2 120.0,337.5ZM300.3,433.7 309.3,427.9 280.0,410.9 270.9,416.5ZM431.5,498.5 440.2,491.5 404.5,471.2 395.7,477.8ZM361.9,458.2 370.7,451.9 338.7,433.7 329.8,439.7ZM200.2,364.8 226.6,350.8 218.4,346.3 192.0,360.1ZM243.3,360.1 251.9,355.4 226.9,341.9 218.4,346.3ZM296.1,379.4 304.5,374.5 277.6,360.1 269.2,364.8ZM362.5,405.4 386.7,389.6 376.7,384.5 352.5,400.1ZM251.8,346.3 276.3,333.2 268.0,328.9 243.5,341.9ZM303.7,364.8 327.7,350.8 318.7,346.3 294.7,360.1ZM355.4,364.8 378.2,350.8 368.9,346.3 346.0,360.1Z"/></g><rect x="80" y="340" width="340" height="150" filter="url(#rWisp)" opacity="0.25"/><ellipse cx="250" cy="372" rx="135" ry="42" fill="#000" opacity="0.5" filter="url(#rB6)"/><path d="M93.6,381.4 L109.5,392.6 Q135.8,410 169.5,428 Q203,440 227.6,444 L237,482.6 L241.7,486.4 L284,465.8 L297,456.4 Q316,440 334.5,420.8 Q350,402 353,390.8 L379.5,392.6 L409.5,387" fill="none" stroke="#000" stroke-opacity="0.6" stroke-width="8" filter="url(#rB2)"/></g><ellipse cx="250.6" cy="357" rx="80" ry="45" fill="#6e6e6e"/><ellipse cx="250.6" cy="354" rx="80" ry="45" fill="#8c8c8c"/><ellipse cx="251" cy="368" rx="76" ry="26" fill="#000" opacity="0.68" filter="url(#rB6)"/><circle cx="252.4" cy="212.5" r="165.5" fill="#252b2b"/><g clip-path="url(#rSphClip)"><g stroke="#84908f" stroke-width="1.0" stroke-opacity="0.8" stroke-linejoin="round"><path fill="#181d1e" d="M250.0,377.8 251.0,376.3 252.8,373.5 246.1,372.3 244.7,375.5 244.0,377.3ZM212.2,371.2 211.2,367.6 210.9,362.6 203.7,360.1 204.4,365.4 205.8,369.3ZM205.8,369.3 204.7,366.8 194.8,363.3 185.1,359.4 186.9,362.4 196.2,366.0ZM271.3,375.3 274.5,372.3 278.2,368.1 271.9,366.9 268.3,371.6 265.4,375.0ZM135.7,316.5 133.7,306.1 132.7,294.6 126.7,291.0 128.1,302.5 130.5,313.0ZM117.4,291.9 116.1,284.1 109.5,279.2 103.9,274.8 105.8,282.5 111.0,287.1ZM290.4,362.0 295.6,355.6 301.2,348.2 294.7,345.9 289.2,353.7 284.1,360.6ZM145.7,302.1 146.0,294.0 135.8,288.3 126.4,282.7 126.7,291.0 135.8,296.4ZM146.0,294.0 147.3,281.2 149.6,267.5 142.1,263.5 140.1,277.2 139.1,290.2ZM139.1,290.2 139.6,281.6 129.7,275.9 120.6,270.6 120.7,279.2 129.4,284.5ZM284.2,348.9 289.8,340.3 295.8,330.9 288.5,327.5 282.5,337.3 277.0,346.4ZM277.0,346.4 280.6,340.4 269.2,335.7 257.1,330.5 253.9,337.2 265.7,342.0ZM105.7,260.9 105.6,247.5 106.6,233.4 102.0,230.8 101.3,244.7 101.7,258.1ZM313.0,351.9 317.1,347.0 308.4,343.9 298.7,340.1 294.7,345.9 304.3,349.2ZM127.2,265.1 128.2,255.9 118.9,250.6 110.7,245.8 110.2,255.0 118.1,259.9ZM173.7,280.3 177.7,266.4 182.5,251.9 173.8,247.3 169.2,261.9 165.4,276.0ZM97.7,237.7 98.5,223.7 100.4,209.4 96.6,207.5 95.0,221.7 94.5,235.5ZM220.6,294.0 226.1,280.7 232.3,267.0 223.0,261.9 217.0,275.9 211.6,289.4ZM159.6,262.3 162.2,252.7 150.2,246.3 138.8,240.3 136.7,250.1 147.8,256.0ZM123.3,242.8 126.1,228.1 130.0,213.1 123.4,209.9 119.8,224.8 117.2,239.4ZM94.7,226.3 96.0,212.3 98.3,198.0 95.0,196.6 92.9,210.6 91.9,224.5ZM343.4,343.4 349.9,336.3 356.5,328.8 353.0,326.6 346.4,334.6 339.8,342.1ZM307.1,327.6 311.6,320.9 300.9,315.2 289.3,309.0 284.9,316.6 296.4,322.3ZM109.6,214.1 111.7,204.2 104.4,200.8 98.3,198.0 96.6,207.5 102.5,210.5ZM339.8,327.2 344.4,321.1 336.5,316.2 327.5,310.7 322.8,317.6 331.9,322.7ZM195.2,246.9 199.3,237.0 185.7,229.7 172.4,222.8 168.6,232.9 181.7,239.7ZM111.7,204.2 115.8,189.3 120.9,174.5 115.4,172.4 110.6,187.1 106.7,201.8ZM306.4,298.0 313.8,286.1 321.3,273.9 313.5,268.6 306.0,281.1 298.6,293.3ZM365.9,327.3 372.1,319.9 378.2,312.2 376.4,309.5 370.1,317.7 363.7,325.6ZM343.2,300.7 350.4,290.0 357.6,279.2 351.8,274.1 344.5,285.3 337.1,296.3ZM236.8,233.0 241.9,223.3 227.6,215.1 213.3,207.1 208.4,217.1 222.6,224.9ZM376.2,322.1 379.8,317.8 379.7,315.4 378.2,312.2 374.2,317.3 375.9,320.2ZM342.0,289.0 349.3,277.8 356.6,266.7 350.5,261.1 343.0,272.7 335.5,284.2ZM176.8,187.8 181.8,177.8 168.9,171.6 156.8,166.0 152.1,176.0 164.1,181.6ZM340.5,276.5 348.0,265.0 355.4,253.5 348.8,247.6 341.3,259.4 333.7,271.2ZM366.2,251.9 370.8,244.8 361.9,235.5 351.9,225.8 346.9,233.6 357.1,242.9ZM219.1,134.8 228.4,122.0 237.9,110.1 228.9,105.8 219.4,117.6 210.0,130.4ZM133.2,107.8 141.8,96.8 150.9,86.8 146.5,87.9 137.5,97.6 129.1,108.3ZM161.0,102.0 167.2,94.4 157.8,93.1 149.6,92.9 143.6,100.1 151.7,100.5ZM395.9,255.1 401.0,246.3 405.5,238.1 402.9,231.9 398.1,240.4 392.7,249.4ZM167.2,94.4 176.8,83.9 186.7,74.5 180.2,74.0 170.4,83.1 160.8,93.4ZM392.7,237.2 396.3,231.1 390.1,221.3 382.7,211.1 378.5,217.6 386.2,227.6ZM366.4,203.9 373.1,193.9 379.4,184.7 373.2,177.4 366.6,186.8 359.6,196.9ZM409.9,239.1 412.1,234.3 409.5,224.8 405.6,214.8 402.8,219.9 407.0,229.8ZM412.6,212.5 414.9,206.7 416.4,201.8 414.9,194.7 413.0,199.6 410.3,205.6ZM390.3,169.0 394.7,162.7 398.5,157.5 393.6,149.9 389.5,155.1 384.7,161.5ZM290.8,58.4 298.8,56.9 306.2,56.9 299.0,54.2 291.3,54.0 283.1,55.4ZM396.4,134.7 397.5,134.1 390.8,123.5 383.1,113.2 381.3,113.4 389.3,123.9ZM359.3,88.2 361.9,88.9 352.3,81.0 342.4,73.8 339.1,72.7 349.4,80.1Z"/><path fill="#1e2425" d="M130.5,323.8 125.3,315.7 121.2,306.2 117.3,303.0 121.8,312.4 127.2,320.6ZM260.9,372.0 262.9,369.0 252.6,366.8 241.9,363.9 240.4,367.6 250.9,370.1ZM226.0,363.5 227.7,356.9 230.2,349.1 222.2,346.0 220.0,354.2 218.6,361.1ZM297.1,371.2 301.8,368.4 306.8,364.4 301.8,363.9 296.8,368.4 292.3,371.7ZM167.2,334.2 166.9,327.9 156.3,322.4 146.4,316.9 147.4,323.6 157.0,328.9ZM205.0,345.4 206.1,339.4 194.1,334.1 182.3,328.6 181.7,335.1 193.3,340.4ZM280.7,354.1 284.2,348.9 273.3,345.0 261.8,340.5 258.7,346.5 270.0,350.6ZM192.8,318.1 195.8,306.3 199.7,293.6 190.9,289.2 187.3,302.0 184.6,314.1ZM228.9,326.4 231.8,319.0 218.8,312.8 205.7,306.4 203.3,314.4 216.1,320.5ZM273.0,337.3 276.8,330.8 264.8,325.3 252.3,319.5 248.9,326.8 261.2,332.3ZM338.0,351.8 342.2,348.2 337.3,347.2 331.2,345.4 327.0,350.0 333.1,351.3ZM311.4,345.0 315.6,339.5 306.2,335.5 295.8,330.9 291.7,337.2 302.0,341.5ZM91.9,224.5 92.5,215.3 89.2,213.3 87.3,211.9 87.3,220.6 88.9,222.2ZM339.8,342.1 344.1,337.2 337.7,334.2 330.1,330.4 325.6,336.3 333.3,339.6ZM268.6,308.2 275.1,296.1 282.0,283.5 273.3,278.5 266.4,291.4 260.0,303.8ZM113.1,226.7 115.0,216.8 107.1,212.8 100.4,209.4 99.0,219.0 105.4,222.5ZM157.0,238.5 162.0,223.4 167.9,208.2 159.5,204.0 153.8,219.2 149.0,234.4ZM360.3,337.6 366.3,331.7 372.3,325.4 371.5,324.1 365.4,330.9 359.1,337.3ZM147.7,210.2 153.5,194.9 160.0,179.7 152.1,176.0 145.8,191.2 140.2,206.5ZM295.3,280.1 300.3,271.6 287.6,263.5 274.2,255.2 269.2,264.3 282.6,272.3ZM241.4,248.1 246.3,238.5 232.1,230.3 217.8,222.3 213.1,232.2 227.2,240.1ZM143.8,196.3 149.9,181.1 156.8,166.0 149.2,162.7 142.5,177.7 136.5,192.9ZM368.0,320.3 374.3,312.2 380.4,303.9 378.1,300.6 371.8,309.4 365.3,317.9ZM180.9,202.5 185.7,192.3 172.5,185.7 160.0,179.7 155.6,189.8 167.9,195.9ZM133.4,179.7 137.5,169.7 127.8,165.8 119.1,162.7 115.4,172.4 123.8,175.7ZM366.5,309.1 370.9,303.1 365.2,297.4 358.1,291.0 353.4,297.9 360.6,303.9ZM335.5,284.2 340.5,276.5 330.1,268.5 318.7,260.2 313.5,268.6 325.0,276.6ZM185.7,192.3 193.3,177.3 201.4,162.6 192.4,158.1 184.4,172.8 176.8,187.8ZM379.8,317.8 385.0,311.2 389.8,304.4 390.4,302.1 385.3,309.3 379.9,316.3ZM370.9,303.1 377.3,293.8 383.6,284.6 380.3,280.1 373.9,289.7 367.2,299.4ZM228.0,202.5 233.5,192.7 219.2,184.7 205.1,177.1 199.8,187.0 213.8,194.5ZM233.5,192.7 241.9,178.3 250.7,164.4 241.1,158.9 232.4,172.9 223.9,187.3ZM229.5,177.6 238.2,163.5 247.1,149.9 237.7,144.6 228.7,158.2 220.0,172.4ZM168.9,113.8 178.1,101.6 187.7,90.3 180.4,88.6 170.9,99.6 161.7,111.7ZM369.6,231.4 376.3,221.0 382.7,211.1 377.0,204.2 370.4,214.2 363.5,224.9ZM323.3,176.7 331.4,165.4 339.2,155.0 331.0,148.1 322.9,158.6 314.6,170.0ZM314.6,170.0 320.2,162.3 307.0,152.3 293.4,142.7 287.4,150.6 301.2,160.1ZM268.8,138.6 277.9,126.9 286.9,116.3 277.8,110.7 268.6,121.3 259.4,133.0ZM259.4,133.0 265.5,125.1 251.6,117.2 237.9,110.1 231.5,117.9 245.4,125.1ZM211.6,98.3 221.4,87.8 231.2,78.4 223.0,75.5 213.1,84.8 203.3,95.2ZM364.3,190.1 371.0,180.4 377.3,171.7 370.8,164.3 364.3,173.2 357.3,183.0ZM317.0,148.2 325.3,138.0 333.2,128.8 324.8,122.2 316.6,131.4 308.2,141.7ZM262.5,112.3 271.8,102.1 281.0,93.0 272.2,88.2 262.8,97.2 253.3,107.3ZM167.7,79.7 177.6,71.2 187.7,63.9 182.1,64.7 172.0,71.7 162.2,80.0ZM354.8,169.2 359.5,162.9 348.2,152.1 336.2,141.6 331.0,148.1 343.2,158.5ZM208.5,79.1 218.5,70.4 228.5,63.1 221.0,61.4 210.9,68.6 200.8,77.1ZM248.3,85.4 254.7,79.6 241.9,74.4 229.7,70.1 223.0,75.5 235.4,80.0ZM207.5,71.3 217.6,63.7 227.6,57.4 220.5,56.4 210.4,62.4 200.3,69.9ZM200.2,64.0 206.9,59.6 197.4,59.6 188.9,60.7 182.1,64.7 190.6,63.8ZM412.6,223.5 415.1,217.3 416.8,211.9 415.5,205.0 413.5,210.5 410.7,216.8ZM295.8,92.9 301.5,88.1 288.6,80.5 275.8,73.9 269.6,78.5 282.6,85.2ZM382.2,149.7 385.5,145.8 376.4,134.7 366.4,123.9 362.5,127.8 372.8,138.6ZM298.6,78.8 306.8,73.8 314.5,70.3 306.6,65.9 298.6,69.3 290.2,74.2ZM411.3,190.6 413.3,185.9 414.4,182.3 412.1,174.9 410.6,178.5 408.3,183.3ZM408.3,183.3 409.9,180.0 404.8,168.8 398.5,157.5 396.1,160.8 402.8,172.1ZM379.5,138.4 382.7,135.1 373.4,124.2 363.3,113.7 359.4,117.0 369.8,127.5Z"/><path fill="#242b2c" d="M161.1,347.7 158.7,343.5 150.4,338.6 142.9,333.7 146.1,338.2 153.2,343.0ZM269.6,376.6 271.3,375.3 262.3,374.7 252.8,373.5 251.5,375.5 260.8,376.4ZM232.3,369.1 233.8,363.8 236.1,357.1 228.4,354.5 226.4,361.4 225.2,367.1ZM294.3,372.5 297.1,371.2 289.8,371.8 281.6,371.6 279.1,373.7 287.2,373.5ZM117.0,306.2 112.5,296.4 109.1,285.5 105.8,282.5 109.5,293.4 114.3,303.2ZM258.2,363.8 261.9,357.1 266.3,349.3 258.7,346.5 254.5,354.7 251.0,361.8ZM123.7,302.7 122.2,295.3 115.1,290.3 109.1,285.5 111.3,292.9 116.9,297.7ZM319.2,363.5 324.8,359.8 330.8,355.2 327.1,354.9 321.2,360.0 315.5,364.2ZM186.3,306.1 189.6,293.5 193.8,280.2 185.0,275.6 181.0,289.2 178.0,302.0ZM223.1,314.9 226.2,306.9 212.9,300.3 199.7,293.6 197.0,302.2 210.1,308.6ZM276.8,330.8 282.8,320.2 289.3,309.0 281.2,304.7 274.8,316.3 268.9,327.2ZM217.4,302.5 220.6,294.0 207.2,287.1 193.8,280.2 190.9,289.2 204.1,295.9ZM117.2,239.4 118.8,229.7 110.4,225.2 103.1,221.3 102.0,230.8 109.0,234.8ZM154.1,248.4 157.0,238.5 145.2,232.4 134.1,226.7 131.7,236.6 142.5,242.3ZM149.0,234.4 152.1,224.3 140.6,218.4 130.0,213.1 127.3,223.1 137.7,228.5ZM344.5,329.8 351.3,321.1 358.1,312.0 353.7,308.5 346.7,318.0 339.8,327.2ZM90.3,185.3 93.4,171.9 97.5,158.8 96.0,159.4 92.2,172.3 89.4,185.3ZM300.3,271.6 308.0,258.8 315.9,246.0 307.6,240.0 299.6,253.1 291.9,266.2ZM102.3,168.3 105.6,159.0 100.8,158.5 97.5,158.8 94.6,167.5 97.7,167.5ZM237.6,208.0 245.8,193.5 254.4,179.4 244.8,173.7 236.2,187.9 228.0,202.5ZM173.1,173.6 178.3,163.6 165.8,157.9 154.1,153.0 149.2,162.7 160.8,167.8ZM127.7,143.7 132.5,134.5 124.5,132.9 117.8,132.2 113.4,140.9 119.9,141.9ZM336.7,249.5 344.3,237.5 351.9,225.8 344.7,219.3 337.0,231.3 329.1,243.6ZM286.4,212.7 294.8,199.3 303.3,186.3 294.2,179.9 285.6,193.0 277.2,206.6ZM277.2,206.6 282.8,197.5 268.7,188.3 254.4,179.4 248.6,188.8 263.0,197.5ZM108.4,133.6 115.2,121.8 122.7,110.8 120.4,112.7 113.1,123.4 106.6,134.9ZM389.6,296.2 394.8,288.1 399.5,280.2 398.7,275.9 393.7,284.2 388.2,292.6ZM367.0,264.8 371.6,257.7 363.3,249.0 353.8,239.9 348.8,247.6 358.5,256.4ZM222.3,148.5 231.4,135.2 240.7,122.6 231.5,117.9 222.2,130.4 213.1,143.8ZM393.7,277.1 398.9,268.5 403.5,260.2 401.7,254.9 396.8,263.4 391.4,272.4ZM216.2,121.8 225.7,109.6 235.3,98.5 226.6,94.6 216.9,105.6 207.4,117.7ZM207.4,117.7 213.7,109.6 201.0,104.3 188.9,100.0 182.6,107.9 194.6,112.4ZM402.4,279.2 404.9,274.3 404.9,267.7 403.5,260.2 400.5,265.7 402.2,272.8ZM368.2,217.7 374.9,207.5 381.2,197.9 375.2,190.7 368.7,200.5 361.7,211.0ZM407.2,260.2 409.5,255.3 408.2,247.0 405.5,238.1 402.6,243.5 405.6,252.2ZM359.5,162.9 366.1,154.2 372.3,146.7 365.5,139.4 359.0,147.0 352.1,155.7ZM352.1,155.7 356.7,149.8 345.3,139.1 333.2,128.8 327.9,134.8 340.3,145.1ZM310.7,121.8 319.0,113.0 326.9,105.4 318.5,99.3 310.4,106.9 301.8,115.6ZM412.1,234.3 414.7,227.8 416.6,222.0 415.7,215.4 413.5,221.3 410.5,228.0ZM307.6,109.6 315.8,101.7 323.7,95.0 315.4,89.3 307.3,95.9 298.8,103.8ZM207.0,64.8 217.1,58.2 227.2,53.2 220.5,52.8 210.3,57.7 200.2,64.0ZM410.7,216.8 412.6,212.5 408.9,202.0 403.9,191.2 401.3,195.8 406.6,206.5ZM410.3,205.6 412.2,201.5 408.0,190.7 402.5,179.6 399.9,183.8 405.7,194.8ZM290.2,74.2 295.9,70.8 283.5,64.7 271.3,59.6 265.2,62.7 277.6,68.0ZM344.5,103.6 350.9,99.1 356.6,95.9 349.4,89.8 343.4,92.9 336.7,97.3ZM240.8,51.4 247.2,49.4 237.0,48.6 227.4,49.0 220.8,50.6 230.4,50.4ZM382.7,135.1 386.8,131.1 390.1,128.5 384.7,121.3 381.0,123.9 376.5,127.8ZM285.2,60.3 290.8,58.4 279.2,54.0 267.9,50.7 261.8,52.3 273.4,55.7ZM404.6,162.2 406.0,159.9 400.1,148.6 393.1,137.4 390.9,139.7 398.3,150.9Z"/><path fill="#2a3233" d="M182.6,351.5 181.9,346.6 171.4,341.7 161.3,336.6 162.7,341.9 172.4,346.8ZM145.2,331.9 143.1,326.2 135.1,321.1 128.0,316.0 130.9,321.8 137.6,326.8ZM143.1,326.2 140.7,316.7 139.3,306.0 133.2,302.4 134.9,313.1 137.7,322.8ZM262.9,369.0 266.4,363.5 270.6,356.9 263.3,354.6 259.4,361.7 256.1,367.6ZM174.3,337.7 174.3,328.3 175.3,317.7 167.5,313.8 166.9,324.6 167.2,334.2ZM111.0,296.8 106.9,286.3 103.9,274.8 101.0,272.0 104.2,283.4 108.6,293.9ZM315.5,364.2 319.3,361.5 312.8,361.3 305.3,360.3 301.8,363.9 309.2,364.4ZM152.7,306.0 153.6,293.8 155.6,280.8 147.9,276.7 146.3,289.8 145.7,302.1ZM287.4,356.1 292.8,348.6 298.7,340.1 291.7,337.2 286.0,346.2 280.7,354.1ZM184.6,314.1 186.3,306.1 173.9,299.9 161.9,293.7 160.7,302.0 172.4,308.0ZM106.3,269.5 105.7,260.9 99.9,256.7 95.5,253.0 96.8,261.4 100.9,265.2ZM132.9,277.8 133.7,268.9 124.0,263.3 115.4,258.2 115.1,267.2 123.5,272.3ZM97.7,246.7 97.7,237.7 93.1,234.4 89.9,231.8 90.5,240.5 93.5,243.3ZM340.6,351.7 346.8,346.6 353.2,340.8 350.7,339.9 344.3,346.3 338.0,351.8ZM268.9,327.2 272.8,320.0 260.3,313.9 247.4,307.5 243.7,315.4 256.5,321.5ZM342.2,348.2 348.6,342.1 355.0,335.4 352.1,333.9 345.5,341.1 339.1,347.6ZM255.4,290.8 259.8,282.2 246.2,274.6 232.3,267.0 228.1,276.2 241.9,283.6ZM298.6,293.3 303.5,285.2 291.1,277.5 278.2,269.7 273.3,278.5 286.3,286.0ZM255.3,268.1 262.5,254.3 270.2,240.4 260.9,234.6 253.2,248.8 246.1,262.8ZM109.2,192.0 113.7,177.3 119.1,162.7 114.0,161.1 108.8,175.5 104.5,190.1ZM291.9,266.2 297.0,257.5 283.9,249.0 270.2,240.4 265.1,249.7 278.7,258.0ZM102.2,158.6 105.8,149.6 101.8,149.9 99.2,151.0 96.0,159.4 98.4,158.6ZM181.8,177.8 189.7,162.9 198.1,148.6 189.3,144.4 181.0,158.8 173.1,173.6ZM135.3,157.2 142.4,142.9 150.3,129.0 143.7,127.1 136.0,140.8 129.0,155.0ZM169.9,159.8 175.2,150.1 163.1,144.9 151.9,140.6 146.8,150.1 157.9,154.5ZM372.0,270.2 378.6,259.9 384.9,249.9 380.4,243.9 373.8,254.2 367.0,264.8ZM273.4,191.3 279.2,182.3 265.0,173.2 250.7,164.4 244.8,173.7 259.2,182.3ZM390.0,282.9 393.7,277.1 390.0,269.9 384.9,262.1 380.8,268.6 386.1,276.1ZM269.7,176.2 275.6,167.3 261.4,158.4 247.1,149.9 241.1,158.9 255.5,167.3ZM163.0,122.4 168.9,113.8 158.3,110.8 148.8,108.8 143.1,117.0 152.5,119.2ZM329.1,206.1 337.1,194.2 344.9,183.0 336.9,176.0 328.9,187.4 320.8,199.5ZM395.1,266.4 400.2,257.7 404.7,249.4 402.6,243.5 397.7,252.1 392.3,261.1ZM392.3,261.1 395.9,255.1 390.9,246.4 384.6,237.3 380.4,243.9 387.0,252.8ZM363.5,224.9 368.2,217.7 358.3,207.6 347.4,197.3 342.3,204.9 353.4,215.0ZM317.7,184.6 323.3,176.7 310.2,166.6 296.7,156.9 290.8,165.0 304.5,174.7ZM272.1,152.7 281.1,140.5 290.1,129.2 280.9,123.3 271.8,134.6 262.7,146.9ZM203.3,95.2 209.8,88.1 198.0,84.4 186.9,81.8 180.4,88.6 191.4,91.4ZM301.5,88.1 309.7,82.0 317.5,77.4 309.5,72.5 301.4,77.0 292.9,83.0ZM336.7,97.3 341.2,94.2 329.5,85.4 317.5,77.4 312.4,80.3 324.7,88.4ZM341.2,94.2 347.5,90.7 353.1,88.6 346.0,82.9 340.1,84.9 333.5,88.3ZM379.6,125.0 383.6,122.0 386.7,120.3 381.3,113.4 377.7,115.0 373.4,117.9ZM393.1,127.0 394.0,127.1 387.1,116.8 379.4,107.0 377.6,106.5 385.8,116.5Z"/><path fill="#30383a" d="M183.3,362.3 179.8,358.3 177.1,352.8 170.7,349.8 173.8,355.5 177.8,359.7ZM169.4,354.2 166.8,350.8 158.4,346.1 150.8,341.4 154.2,345.2 161.4,349.8ZM238.0,375.3 238.5,373.4 228.3,371.1 217.9,368.2 218.1,370.9 228.2,373.4ZM190.3,358.6 189.5,354.5 179.1,349.9 169.1,345.2 170.7,349.8 180.3,354.3ZM158.7,343.5 155.7,336.0 153.7,327.1 147.4,323.6 149.7,332.5 153.1,340.2ZM225.2,367.1 226.0,363.5 214.9,359.8 203.8,355.7 203.7,360.1 214.5,363.8ZM150.7,335.3 148.1,326.7 146.4,316.9 140.1,313.3 142.2,323.2 145.2,331.9ZM211.8,353.8 212.8,348.6 201.1,343.7 189.4,338.7 189.0,344.5 200.4,349.3ZM251.0,361.8 253.3,357.2 241.9,353.4 230.2,349.1 228.4,354.5 239.9,358.4ZM315.6,365.4 319.2,363.5 313.5,364.3 306.8,364.4 303.4,367.2 310.0,366.7ZM287.2,365.7 290.4,362.0 280.9,359.8 270.6,356.9 267.7,361.5 277.8,363.9ZM198.1,335.9 199.5,329.2 187.2,323.5 175.3,317.7 174.6,324.9 186.2,330.5ZM96.7,267.1 94.0,255.0 92.3,242.3 90.5,240.5 92.4,253.0 95.5,264.9ZM234.6,336.9 237.4,330.2 224.7,324.5 211.8,318.5 209.6,325.9 222.2,331.6ZM139.6,281.6 141.3,268.1 144.0,254.0 136.7,250.1 134.3,264.3 132.9,277.8ZM179.9,293.5 183.6,280.2 188.0,266.3 179.2,261.6 175.0,275.7 171.6,289.2ZM226.2,306.9 231.4,294.3 237.3,281.1 228.1,276.2 222.4,289.7 217.4,302.5ZM94.5,235.5 94.7,226.3 90.8,223.7 88.2,221.6 88.5,230.4 90.8,232.6ZM339.1,347.6 343.4,343.4 337.7,341.3 330.9,338.5 326.5,343.8 333.4,346.1ZM311.6,320.9 318.5,310.3 325.7,299.3 318.7,294.8 311.5,306.2 304.5,317.1ZM264.2,295.6 271.0,282.8 278.2,269.7 269.2,264.3 262.1,277.7 255.4,290.8ZM199.3,237.0 206.0,222.1 213.3,207.1 204.0,202.0 196.7,217.0 190.2,232.1ZM303.5,285.2 311.0,272.8 318.7,260.2 310.6,254.5 302.9,267.4 295.3,280.1ZM288.3,251.8 293.6,242.9 280.1,234.0 266.2,225.2 260.9,234.6 274.8,243.2ZM232.4,217.8 237.6,208.0 223.3,199.8 209.1,192.0 204.0,202.0 218.1,209.7ZM383.2,309.5 386.8,304.4 385.2,300.0 382.2,294.7 378.1,300.6 381.4,305.4ZM388.2,292.6 391.9,287.0 388.9,280.7 384.5,273.7 380.3,280.1 385.0,286.7ZM216.4,157.8 222.3,148.5 208.5,141.5 195.2,135.2 189.3,144.4 202.6,150.8ZM391.9,287.0 397.1,278.7 401.8,270.5 400.5,265.7 395.5,274.2 390.0,282.9ZM371.6,257.7 378.2,247.3 384.6,237.3 379.6,230.9 373.0,241.2 366.2,251.9ZM331.8,220.8 339.7,208.8 347.4,197.3 339.7,190.4 331.8,202.1 323.7,214.3ZM326.2,191.4 334.3,179.7 342.1,168.8 334.0,161.9 326.0,172.9 317.7,184.6ZM262.7,146.9 268.8,138.6 254.7,130.3 240.7,122.6 234.5,130.9 248.5,138.6ZM134.7,101.1 143.5,91.1 152.8,82.1 148.9,83.8 139.7,92.5 131.0,102.3ZM213.7,109.6 223.4,98.2 233.1,87.9 224.6,84.5 214.8,94.7 205.1,106.0ZM205.1,106.0 211.6,98.3 199.2,93.8 187.7,90.3 181.2,97.7 192.8,101.4ZM357.3,183.0 362.0,176.3 351.0,165.6 339.2,155.0 334.0,161.9 346.0,172.3ZM201.8,85.6 208.5,79.1 197.2,76.3 186.7,74.5 180.1,80.6 190.5,82.6ZM391.5,211.9 395.0,206.2 387.8,195.5 379.4,184.7 375.2,190.7 384.0,201.4ZM362.0,176.3 368.7,167.2 374.9,159.0 368.3,151.6 361.8,159.9 354.8,169.2ZM395.0,206.2 399.8,198.2 403.9,191.2 399.9,183.8 395.4,191.0 390.3,199.1ZM349.2,142.6 353.9,137.2 342.2,126.7 330.0,116.7 324.8,122.2 337.3,132.2ZM246.1,76.0 252.6,71.0 240.3,66.5 228.5,63.1 221.8,67.8 233.7,71.4ZM252.6,71.0 262.1,64.6 271.3,59.6 263.4,56.8 254.0,61.6 244.3,67.9ZM244.3,67.9 250.8,63.5 238.9,59.9 227.6,57.4 221.0,61.4 232.3,64.1ZM343.1,118.4 347.7,114.0 335.9,104.2 323.7,95.0 318.5,99.3 331.0,108.5ZM249.3,57.4 258.8,53.3 267.9,50.7 260.6,49.1 251.3,51.5 241.6,55.5ZM373.4,117.9 376.4,115.8 366.8,105.6 356.6,95.9 352.8,97.9 363.4,107.6ZM330.2,80.3 334.6,78.6 323.2,71.1 311.6,64.5 306.6,65.9 318.5,72.7ZM399.5,143.1 400.7,142.0 394.2,131.0 386.7,120.3 384.7,121.3 392.6,132.1ZM331.4,72.6 337.3,72.4 342.4,73.8 335.6,69.6 330.1,68.0 323.9,68.0Z"/><path fill="#1b2021" d="M219.6,374.3 218.4,372.0 217.9,368.2 211.0,366.1 211.8,370.2 213.4,372.8ZM175.0,357.1 171.6,351.8 169.1,345.2 162.7,341.9 165.6,348.8 169.4,354.2ZM166.8,350.8 163.6,344.4 161.3,336.6 154.9,333.2 157.6,341.1 161.1,347.7ZM275.0,376.3 278.0,374.6 281.6,371.6 275.7,371.0 272.3,374.4 269.6,376.6ZM238.5,373.4 239.8,369.3 241.9,363.9 234.5,361.7 232.7,367.5 231.7,371.9ZM231.7,371.9 232.3,369.1 221.7,366.1 210.9,362.6 211.0,366.1 221.4,369.2ZM123.5,315.3 118.7,306.3 114.9,296.0 111.3,292.9 115.4,303.1 120.5,312.1ZM181.9,346.6 181.6,338.2 182.3,328.6 174.6,324.9 174.2,334.7 174.8,343.3ZM174.8,343.3 174.3,337.7 163.8,332.5 153.7,327.1 154.9,333.2 164.6,338.3ZM292.3,371.7 295.3,369.6 287.2,369.2 278.2,368.1 275.7,371.0 284.4,371.8ZM295.3,369.6 300.1,365.5 305.3,360.3 299.8,359.3 294.6,364.9 290.0,369.4ZM212.8,348.6 215.0,339.7 218.0,329.7 209.6,325.9 206.9,336.2 205.0,345.4ZM159.8,324.3 159.7,317.3 149.2,311.6 139.3,306.0 140.1,313.3 149.6,318.7ZM245.7,354.7 248.1,349.4 236.3,344.9 224.1,340.0 222.2,346.0 234.1,350.6ZM315.1,361.5 318.9,358.1 311.7,356.9 303.4,354.9 299.8,359.3 307.9,360.8ZM231.8,319.0 236.7,307.2 242.3,294.7 233.3,290.0 227.9,302.8 223.1,314.9ZM101.3,249.2 101.7,235.5 103.1,221.3 99.0,219.0 97.8,233.1 97.7,246.7ZM167.8,266.7 172.2,252.2 177.3,237.4 168.6,232.9 163.7,247.8 159.6,262.3ZM162.2,252.7 166.9,237.9 172.4,222.8 163.9,218.4 158.6,233.5 154.1,248.4ZM118.8,229.7 122.1,214.9 126.3,199.8 120.1,196.9 116.1,211.9 113.1,226.7ZM92.5,215.3 94.2,201.3 97.0,187.1 94.1,186.2 91.6,200.1 90.1,213.9ZM304.5,317.1 309.1,309.9 297.8,303.5 285.8,296.7 281.2,304.7 293.3,311.1ZM209.7,266.4 215.8,252.0 222.5,237.4 213.1,232.2 206.5,247.0 200.5,261.5ZM309.1,309.9 316.3,298.6 323.6,287.0 316.2,282.0 308.8,294.0 301.7,305.7ZM106.7,201.8 109.2,192.0 102.4,189.2 97.0,187.1 95.0,196.6 100.2,198.8ZM363.3,333.1 369.4,326.4 375.5,319.3 374.2,317.3 368.0,324.9 361.6,332.0ZM363.7,325.6 368.0,320.3 363.7,316.5 358.1,312.0 353.6,318.1 359.3,322.2ZM344.0,311.4 351.1,301.3 358.1,291.0 352.8,286.4 345.6,297.1 338.4,307.6ZM136.5,192.9 140.4,182.7 130.1,178.2 120.9,174.5 117.4,184.4 126.4,188.3ZM369.6,312.2 376.0,303.5 382.2,294.7 379.4,290.8 373.0,300.0 366.5,309.1ZM293.6,242.9 301.6,229.5 309.8,216.4 301.0,210.0 292.8,223.4 284.6,237.0ZM371.7,292.9 378.2,283.3 384.5,273.7 380.8,268.6 374.3,278.6 367.5,288.6ZM331.5,257.7 336.7,249.5 325.2,240.5 312.9,231.3 307.6,240.0 319.9,248.9ZM282.8,197.5 291.4,184.2 300.0,171.5 290.8,165.0 282.1,177.9 273.4,191.3ZM170.5,125.0 179.5,112.1 188.9,100.0 181.2,97.7 171.9,109.6 163.0,122.4ZM132.3,115.6 140.7,103.8 149.6,92.9 144.8,93.4 136.0,104.0 127.7,115.6ZM392.7,249.4 396.4,243.3 390.7,234.0 383.8,224.3 379.6,230.9 386.8,240.4ZM160.8,93.4 167.2,86.4 158.5,86.1 150.9,86.8 144.8,93.4 152.2,92.9ZM396.4,243.3 401.3,234.6 405.8,226.5 402.8,219.9 398.0,228.2 392.7,237.2ZM359.6,196.9 364.3,190.1 353.6,179.4 342.1,168.8 336.9,176.0 348.7,186.5ZM320.2,162.3 328.3,151.5 336.2,141.6 327.9,134.8 319.8,144.7 311.4,155.6ZM392.3,224.6 395.9,218.7 389.1,208.4 381.2,197.9 377.0,204.2 385.3,214.5ZM409.5,255.3 412.4,248.3 414.7,242.0 414.6,236.1 412.1,242.6 408.8,249.8ZM408.8,249.8 411.1,245.0 409.1,236.0 405.8,226.5 402.9,231.9 406.6,241.1ZM313.9,134.7 322.1,125.1 330.0,116.7 321.7,110.3 313.5,118.7 305.0,128.3ZM411.1,245.0 413.8,238.2 415.9,232.1 415.4,225.8 413.0,232.1 409.9,239.1ZM301.8,115.6 307.6,109.6 294.3,101.0 281.0,93.0 274.9,98.9 288.4,106.9ZM410.5,228.0 412.6,223.5 409.5,213.4 405.0,203.0 402.2,207.9 407.1,218.2ZM304.5,98.4 312.8,91.3 320.6,85.6 312.4,80.3 304.3,85.9 295.8,92.9ZM250.8,63.5 260.3,58.2 269.5,54.5 261.8,52.3 252.5,55.9 242.8,61.0ZM242.8,61.0 249.3,57.4 237.9,54.7 227.2,53.2 220.5,56.4 231.3,58.1ZM347.7,114.0 354.2,108.5 360.0,104.3 352.8,97.9 346.7,101.9 339.9,107.4ZM337.9,85.8 344.1,83.4 349.5,82.5 342.5,77.2 336.7,78.0 330.2,80.3ZM370.1,109.0 372.9,107.5 363.3,97.8 353.1,88.6 349.4,89.8 360.0,99.1Z"/><path fill="#272e30" d="M153.1,340.2 150.7,335.3 142.6,330.2 135.3,325.1 138.3,330.4 145.3,335.3ZM267.3,372.9 270.6,368.6 274.5,363.2 267.7,361.5 264.0,367.3 260.9,372.0ZM105.6,287.0 101.9,275.9 99.4,263.9 96.8,261.4 99.6,273.3 103.5,284.3ZM206.1,339.4 208.6,329.5 211.8,318.5 203.3,314.4 200.3,325.7 198.1,335.9ZM159.7,317.3 160.3,306.0 161.9,293.7 154.2,289.6 152.9,302.0 152.6,313.5ZM122.2,295.3 120.9,283.4 120.6,270.6 115.1,267.2 115.7,280.0 117.4,291.9ZM100.8,277.1 97.6,265.5 95.5,253.0 93.3,250.9 95.7,263.1 99.2,274.6ZM199.5,329.2 202.2,318.3 205.7,306.4 197.0,302.2 193.7,314.2 191.3,325.4ZM318.9,358.1 324.9,352.2 331.2,345.4 326.5,343.8 320.2,351.0 314.2,357.4ZM318.2,353.2 324.4,346.3 330.9,338.5 325.6,336.3 319.2,344.5 313.0,351.9ZM121.9,252.3 123.3,242.8 114.4,237.8 106.6,233.4 105.8,242.8 113.3,247.3ZM264.5,316.0 268.6,308.2 255.7,301.6 242.3,294.7 238.5,303.1 251.7,309.7ZM356.2,341.2 360.3,337.6 358.3,336.9 355.0,335.4 350.7,339.9 354.1,341.0ZM344.1,337.2 350.8,329.3 357.5,320.9 353.6,318.1 346.7,326.9 340.0,335.3ZM200.5,261.5 204.4,251.8 190.7,244.5 177.3,237.4 173.8,247.3 187.0,254.3ZM91.0,204.7 93.1,190.8 96.4,176.9 94.0,176.4 91.0,190.1 89.1,203.7ZM204.4,251.8 210.8,237.1 217.8,222.3 208.4,217.1 201.5,232.1 195.2,246.9ZM144.4,220.3 147.7,210.2 136.6,204.7 126.3,199.8 123.4,209.9 133.4,214.8ZM361.6,332.0 365.9,327.3 362.4,324.5 357.5,320.9 353.0,326.6 358.0,329.7ZM344.4,321.1 351.4,311.7 358.3,302.0 353.4,297.9 346.3,308.1 339.3,318.0ZM140.2,206.5 143.8,196.3 133.0,191.3 123.3,186.9 120.1,196.9 129.6,201.4ZM104.5,190.1 107.3,180.3 101.1,178.2 96.4,176.9 94.1,186.2 98.6,187.7ZM185.4,217.3 189.9,207.1 176.5,200.2 163.7,193.8 159.5,204.0 172.2,210.4ZM246.3,238.5 254.1,224.2 262.2,209.9 252.6,204.0 244.5,218.5 236.8,233.0ZM106.1,169.3 111.4,155.2 117.6,141.5 113.4,140.9 107.4,154.4 102.3,168.3ZM383.6,311.7 388.8,304.5 393.6,297.2 393.7,294.2 388.6,301.9 383.2,309.5ZM338.7,263.3 346.3,251.5 353.8,239.9 346.9,233.6 339.2,245.5 331.5,257.7ZM280.9,221.9 286.4,212.7 272.5,203.5 258.2,194.6 252.6,204.0 266.9,212.9ZM223.9,187.3 229.5,177.6 215.3,169.8 201.4,162.6 195.9,172.3 209.8,179.6ZM133.6,145.5 141.1,131.6 149.2,118.4 143.1,117.0 135.0,130.1 127.7,143.7ZM106.8,141.1 113.2,128.6 120.4,116.8 117.6,118.1 110.6,129.6 104.4,141.8ZM329.1,243.6 334.4,235.3 322.5,225.9 309.8,216.4 304.4,225.1 317.1,234.4ZM172.6,137.1 181.4,123.6 190.5,110.8 182.6,107.9 173.4,120.6 164.8,134.0ZM279.2,182.3 287.9,169.2 296.7,156.9 287.4,150.6 278.6,163.0 269.7,176.2ZM391.4,272.4 395.1,266.4 390.7,258.4 384.9,249.9 380.8,256.5 386.8,264.7ZM161.7,111.7 167.8,103.5 157.8,101.4 148.9,100.2 143.0,108.0 151.8,109.3ZM361.7,211.0 366.4,203.9 356.1,193.5 344.9,183.0 339.7,190.4 351.1,200.7ZM311.4,155.6 317.0,148.2 303.7,138.5 290.1,129.2 284.1,136.6 297.9,145.9ZM265.5,125.1 274.8,114.1 283.9,104.2 274.9,98.9 265.6,108.8 256.2,119.8ZM407.5,265.1 410.5,258.1 412.9,251.6 413.3,246.1 410.6,252.9 407.2,260.2ZM308.2,141.7 313.9,134.7 300.5,125.2 286.9,116.3 280.9,123.3 294.7,132.2ZM388.8,186.3 392.2,181.2 384.1,170.1 374.9,159.0 370.8,164.3 380.3,175.3ZM346.2,130.2 350.8,125.2 339.1,115.0 326.9,105.4 321.7,110.3 334.2,120.0ZM206.9,59.6 217.1,54.2 227.1,50.3 220.8,50.6 210.7,54.3 200.5,59.5ZM412.2,201.5 414.3,196.2 415.6,191.9 413.7,184.6 412.0,189.0 409.5,194.3ZM287.6,66.6 293.3,63.9 281.3,58.7 269.5,54.5 263.4,56.8 275.4,61.2ZM248.1,52.7 257.5,49.8 266.6,48.4 259.6,47.4 250.4,48.6 240.8,51.4ZM376.5,127.8 379.6,125.0 370.1,114.5 360.0,104.3 356.2,106.9 366.7,117.1ZM402.2,152.3 403.5,150.6 397.3,139.4 390.1,128.5 387.9,130.1 395.6,141.1ZM376.4,115.8 380.2,113.8 383.1,113.2 377.6,106.5 374.3,107.0 370.1,109.0Z"/><path fill="#363f41" d="M177.8,359.7 175.0,357.1 166.7,352.8 158.9,348.3 162.5,351.4 169.8,355.7ZM244.4,376.3 245.6,373.5 247.4,369.4 240.4,367.6 238.8,372.2 238.0,375.3ZM137.7,322.8 135.7,316.5 128.0,311.3 121.2,306.2 123.9,312.6 130.3,317.7ZM219.4,356.6 221.4,348.9 224.1,340.0 215.9,336.5 213.4,345.7 211.8,353.8ZM253.3,357.2 257.2,349.4 261.8,340.5 253.9,337.2 249.5,346.5 245.7,354.7ZM284.1,360.6 287.4,356.1 277.2,353.0 266.3,349.3 263.3,354.6 274.1,357.9ZM116.1,284.1 115.2,271.5 115.4,258.2 110.2,255.0 110.3,268.3 111.6,280.8ZM237.4,330.2 242.0,319.2 247.4,307.5 238.5,303.1 233.4,315.1 228.9,326.4ZM133.7,268.9 135.8,254.9 138.8,240.3 131.7,236.6 128.9,251.1 127.2,265.1ZM165.4,276.0 167.8,266.7 155.6,260.2 144.0,254.0 142.1,263.5 153.4,269.6ZM211.6,289.4 215.1,280.5 201.5,273.3 188.0,266.3 185.0,275.6 198.2,282.5ZM313.7,330.8 320.5,321.0 327.5,310.7 320.9,306.7 313.9,317.4 307.1,327.6ZM206.0,275.7 209.7,266.4 196.0,259.1 182.5,251.9 179.2,261.6 192.5,268.6ZM301.7,305.7 306.4,298.0 294.6,290.9 282.0,283.5 277.3,292.0 289.9,299.0ZM90.2,194.7 92.9,181.0 96.5,167.4 94.6,167.5 91.2,180.8 88.8,194.2ZM339.3,318.0 344.0,311.4 335.4,305.7 325.7,299.3 320.9,306.7 330.6,312.6ZM250.8,253.5 258.3,239.4 266.2,225.2 256.7,219.4 248.9,233.7 241.4,248.1ZM337.1,296.3 342.0,289.0 332.1,281.7 321.3,273.9 316.2,282.0 327.2,289.4ZM297.0,257.5 304.9,244.4 312.9,231.3 304.4,225.1 296.2,238.4 288.3,251.8ZM129.0,155.0 133.6,145.5 125.0,143.0 117.6,141.5 113.3,150.6 120.5,152.3ZM367.5,277.1 372.0,270.2 364.3,262.1 355.4,253.5 350.5,261.1 359.5,269.4ZM220.0,172.4 225.8,162.8 211.8,155.4 198.1,148.6 192.4,158.1 206.0,164.9ZM175.2,150.1 183.7,136.0 192.6,122.6 184.4,119.2 175.5,132.5 167.1,146.5ZM132.5,134.5 140.3,121.3 148.8,108.8 143.0,108.0 134.7,120.3 127.1,133.3ZM323.7,214.3 329.1,206.1 316.5,196.2 303.3,186.3 297.7,194.9 311.0,204.6ZM127.7,115.6 133.2,107.8 127.2,108.8 122.7,110.8 117.6,118.1 122.0,116.3ZM370.8,244.8 377.5,234.3 383.8,224.3 378.5,217.6 371.9,227.9 365.0,238.6ZM320.8,199.5 326.2,191.4 313.4,181.3 300.0,171.5 294.2,179.9 307.8,189.6ZM210.0,130.4 216.2,121.8 203.1,115.8 190.5,110.8 184.4,119.2 196.9,124.4ZM399.3,287.6 401.8,282.9 402.5,277.1 401.8,270.5 398.7,275.9 399.7,282.2ZM404.9,274.3 408.1,267.4 410.6,260.8 411.4,255.9 408.6,262.7 405.1,270.0ZM256.2,119.8 262.5,112.3 248.8,105.0 235.3,98.5 228.9,105.8 242.4,112.4ZM161.2,86.1 167.7,79.7 159.6,80.4 152.8,82.1 146.5,87.9 153.3,86.5ZM253.3,107.3 259.6,100.4 246.2,93.7 233.1,87.9 226.6,94.6 239.8,100.5ZM395.9,218.7 400.7,210.4 405.0,203.0 401.3,195.8 396.7,203.4 391.5,211.9ZM200.8,77.1 207.5,71.3 196.8,69.3 186.9,68.5 180.2,74.0 190.1,75.0ZM257.0,89.5 266.5,81.0 275.8,73.9 267.3,70.0 257.9,77.0 248.3,85.4ZM298.8,103.8 304.5,98.4 291.4,90.2 278.3,82.9 272.2,88.2 285.5,95.6ZM254.7,79.6 264.2,72.2 273.4,66.1 265.2,62.7 255.8,68.7 246.1,76.0ZM384.7,161.5 388.0,157.1 379.2,146.0 369.5,135.0 365.5,139.4 375.5,150.4ZM409.5,194.3 411.3,190.6 406.6,179.6 400.7,168.3 398.2,172.1 404.4,183.3ZM339.9,107.4 344.5,103.6 332.7,94.3 320.6,85.6 315.4,89.3 327.8,98.0ZM283.1,55.4 288.6,54.3 277.4,50.8 266.6,48.4 260.6,49.1 271.6,51.7ZM372.9,107.5 376.6,106.5 379.4,107.0 373.8,100.7 370.6,100.1 366.6,101.0ZM323.9,68.0 328.1,67.8 317.2,61.8 306.2,56.9 301.4,56.7 312.6,61.8Z"/><path fill="#151919" d="M189.5,354.5 189.0,347.2 189.4,338.7 181.7,335.1 181.7,344.0 182.6,351.5ZM130.5,313.0 128.8,306.1 121.3,301.0 114.9,296.0 117.3,303.0 123.4,307.9ZM293.0,366.5 298.0,361.3 303.4,354.9 297.4,353.2 292.1,360.0 287.2,365.7ZM240.3,346.4 242.8,340.3 230.5,335.2 218.0,329.7 215.9,336.5 228.2,341.6ZM191.3,325.4 192.8,318.1 180.5,312.1 168.5,306.0 167.5,313.8 179.2,319.6ZM111.6,280.8 110.6,272.6 104.4,268.0 99.4,263.9 101.0,272.0 105.7,276.2ZM319.3,361.5 325.1,356.7 331.2,351.0 327.0,350.0 320.9,356.2 315.1,361.5ZM110.6,272.6 110.1,259.5 110.7,245.8 105.8,242.8 105.5,256.5 106.3,269.5ZM178.0,302.0 179.9,293.5 167.5,287.1 155.6,280.8 154.2,289.6 165.8,295.7ZM101.7,258.1 101.3,249.2 96.2,245.5 92.3,242.3 93.3,250.9 96.8,254.2ZM336.5,354.6 340.6,351.7 336.5,351.8 331.2,351.0 327.1,354.9 332.4,355.2ZM171.6,289.2 173.7,280.3 161.4,273.8 149.6,267.5 147.9,276.7 159.5,282.9ZM317.1,347.0 323.4,339.1 330.1,330.4 324.4,327.5 317.7,336.6 311.4,345.0ZM309.4,336.9 313.7,330.8 303.7,325.9 292.7,320.5 288.5,327.5 299.4,332.5ZM272.8,320.0 279.0,308.6 285.8,296.7 277.3,292.0 270.7,304.3 264.5,316.0ZM260.0,303.8 264.2,295.6 250.9,288.4 237.3,281.1 233.3,290.0 246.8,297.0ZM215.1,280.5 220.9,266.6 227.3,252.4 218.0,247.2 211.6,261.6 206.0,275.7ZM115.0,216.8 118.7,201.9 123.3,186.9 117.4,184.4 113.0,199.3 109.6,214.1ZM250.7,277.1 255.3,268.1 241.4,260.2 227.3,252.4 223.0,261.9 236.9,269.5ZM246.1,262.8 250.8,253.5 236.7,245.4 222.5,237.4 218.0,247.2 232.0,255.0ZM338.4,307.6 343.2,300.7 333.9,294.1 323.6,287.0 318.7,294.8 329.1,301.5ZM194.5,222.1 201.5,207.0 209.1,192.0 199.8,187.0 192.3,202.1 185.4,217.3ZM103.0,178.8 106.1,169.3 100.6,167.9 96.5,167.4 94.0,176.4 97.8,177.2ZM189.9,207.1 197.2,192.0 205.1,177.1 195.9,172.3 188.1,187.3 180.9,202.5ZM130.9,167.0 135.3,157.2 126.0,154.0 118.0,151.7 114.0,161.1 121.9,163.6ZM105.6,159.0 111.3,145.4 117.8,132.2 114.1,132.2 107.7,145.2 102.2,158.6ZM379.9,316.3 383.6,311.7 382.7,308.2 380.4,303.9 376.4,309.5 378.9,313.4ZM367.2,299.4 371.7,292.9 365.3,286.4 357.6,279.2 352.8,286.4 360.6,293.2ZM333.7,271.2 338.7,263.3 327.8,254.8 315.9,246.0 310.6,254.5 322.6,263.0ZM290.0,227.9 298.3,214.5 306.6,201.4 297.7,194.9 289.2,208.2 280.9,221.9ZM178.3,163.6 186.5,149.1 195.2,135.2 186.6,131.4 178.0,145.3 169.9,159.8ZM372.0,281.9 378.6,271.9 384.9,262.1 380.8,256.5 374.2,266.7 367.5,277.1ZM167.1,146.5 172.6,137.1 161.0,132.6 150.3,129.0 145.0,138.2 155.6,141.9ZM326.5,229.1 331.8,220.8 319.6,211.1 306.6,201.4 301.0,210.0 314.1,219.6ZM225.8,162.8 234.7,149.0 243.8,135.9 234.5,130.9 225.3,144.0 216.4,157.8ZM266.1,161.3 272.1,152.7 258.0,144.0 243.8,135.9 237.7,144.6 251.9,152.7ZM396.3,231.1 401.3,222.6 405.6,214.8 402.2,207.9 397.6,215.9 392.3,224.6ZM209.8,88.1 219.7,78.5 229.7,70.1 221.8,67.8 211.8,76.1 201.8,85.6ZM162.2,80.0 168.7,74.3 161.4,75.9 155.3,78.7 148.9,83.8 154.9,81.4ZM259.6,100.4 269.1,91.0 278.3,82.9 269.6,78.5 260.2,86.5 250.7,95.8ZM250.7,95.8 257.0,89.5 243.9,83.5 231.2,78.4 224.6,84.5 237.4,89.7ZM168.7,74.3 178.7,66.9 188.9,60.7 183.8,62.2 173.7,68.1 163.7,75.3ZM200.3,69.9 207.0,64.8 196.9,63.8 187.7,63.9 180.9,68.6 190.1,68.7ZM356.7,149.8 363.4,141.8 369.5,135.0 362.5,127.8 356.1,134.6 349.2,142.6ZM392.2,181.2 396.8,174.2 400.7,168.3 396.1,160.8 391.8,166.7 386.9,173.8ZM386.9,173.8 390.3,169.0 381.8,157.8 372.3,146.7 368.3,151.6 378.1,162.6ZM350.8,125.2 357.4,118.8 363.3,113.7 356.2,106.9 349.9,112.0 343.1,118.4ZM292.9,83.0 298.6,78.8 286.0,72.0 273.4,66.1 267.3,70.0 280.0,76.0ZM388.0,157.1 392.4,151.5 396.0,147.1 390.9,139.7 387.0,144.1 382.2,149.7ZM333.5,88.3 337.9,85.8 326.3,77.6 314.5,70.3 309.5,72.5 321.6,80.0ZM293.3,63.9 301.3,61.2 308.9,60.0 301.4,56.7 293.6,57.7 285.2,60.3ZM334.6,78.6 340.7,77.3 346.0,77.5 339.1,72.7 333.4,72.4 327.0,73.5ZM366.6,101.0 369.4,100.2 359.7,91.0 349.5,82.5 346.0,82.9 356.5,91.6Z"/><path fill="#212728" d="M213.4,372.8 212.2,371.2 202.6,368.2 193.1,364.9 195.0,367.0 204.1,370.1ZM244.0,377.3 244.4,376.3 234.7,374.7 224.8,372.6 225.1,374.4 234.7,376.2ZM204.7,366.8 203.8,362.0 203.8,355.7 196.4,352.8 196.8,359.4 198.1,364.5ZM198.1,364.5 197.1,361.2 187.0,357.2 177.1,352.8 178.8,356.6 188.3,360.7ZM197.1,361.2 196.4,355.2 196.6,347.7 189.0,344.5 189.2,352.2 190.3,358.6ZM265.4,375.0 267.3,372.9 257.6,371.4 247.4,369.4 246.1,372.3 256.0,374.0ZM218.6,361.1 219.4,356.6 208.0,352.4 196.6,347.7 196.4,352.8 207.5,357.1ZM256.1,367.6 258.2,363.8 247.4,360.7 236.1,357.1 234.5,361.7 245.5,364.9ZM290.0,369.4 293.0,366.5 284.2,365.2 274.5,363.2 271.9,366.9 281.3,368.6ZM166.9,327.9 167.2,317.5 168.5,306.0 160.7,302.0 159.8,313.6 159.8,324.3ZM128.8,306.1 127.1,294.9 126.4,282.7 120.7,279.2 121.6,291.4 123.7,302.7ZM152.6,313.5 152.7,306.0 142.3,300.2 132.7,294.6 133.2,302.4 142.5,307.9ZM248.1,349.4 252.3,340.4 257.1,330.5 248.9,326.8 244.2,337.1 240.3,346.4ZM242.8,340.3 247.2,330.4 252.3,319.5 243.7,315.4 238.8,326.6 234.6,336.9ZM314.2,357.4 318.2,353.2 310.2,351.1 301.2,348.2 297.4,353.2 306.3,355.7ZM280.6,340.4 286.4,330.8 292.7,320.5 284.9,316.6 278.7,327.3 273.0,337.3ZM128.2,255.9 130.7,241.5 134.1,226.7 127.3,223.1 124.1,237.9 121.9,252.3ZM315.6,339.5 322.1,330.6 329.0,321.1 322.8,317.6 316.0,327.6 309.4,336.9ZM340.0,335.3 344.5,329.8 337.3,325.8 329.0,321.1 324.4,327.5 332.8,331.7ZM359.1,337.3 363.3,333.1 360.6,331.4 356.5,328.8 352.1,333.9 356.3,336.0ZM259.8,282.2 266.8,268.8 274.2,255.2 265.1,249.7 257.7,263.5 250.7,277.1ZM152.1,224.3 157.5,209.1 163.7,193.8 155.6,189.8 149.6,205.1 144.4,220.3ZM190.2,232.1 194.5,222.1 180.9,214.9 167.9,208.2 163.9,218.4 176.8,225.0ZM107.3,180.3 112.2,165.9 118.0,151.7 113.3,150.6 107.7,164.6 103.0,178.8ZM365.3,317.9 369.6,312.2 364.7,307.5 358.3,302.0 353.7,308.5 360.1,313.6ZM140.4,182.7 146.9,167.7 154.1,153.0 146.8,150.1 139.7,164.7 133.4,179.7ZM241.9,223.3 249.9,208.8 258.2,194.6 248.6,188.8 240.3,203.1 232.4,217.8ZM137.5,169.7 144.4,154.9 151.9,140.6 145.0,138.2 137.6,152.4 130.9,167.0ZM284.6,237.0 290.0,227.9 276.3,218.8 262.2,209.9 256.7,219.4 270.8,228.1ZM105.8,149.6 111.9,136.5 118.8,123.9 115.5,124.6 108.8,136.9 102.9,149.7ZM367.5,288.6 372.0,281.9 365.0,274.6 356.6,266.7 351.8,274.1 360.3,281.7ZM386.8,304.4 392.0,296.8 396.8,289.1 396.4,285.5 391.4,293.5 385.9,301.5ZM385.9,301.5 389.6,296.2 387.3,290.8 383.6,284.6 379.4,290.8 383.4,296.5ZM127.1,133.3 132.1,124.6 124.8,123.8 118.8,123.9 114.1,132.2 119.9,132.3ZM334.4,235.3 342.1,223.3 349.8,211.6 342.3,204.9 334.5,216.7 326.5,229.1ZM164.8,134.0 170.5,125.0 159.4,121.2 149.2,118.4 143.7,127.1 153.8,130.1ZM132.1,124.6 140.2,112.0 148.9,100.2 143.6,100.1 135.0,111.6 127.1,123.9ZM127.1,123.9 132.3,115.6 125.7,115.7 120.4,116.8 115.5,124.6 120.6,123.8ZM213.1,143.8 219.1,134.8 205.6,128.3 192.6,122.6 186.6,131.4 199.6,137.2ZM365.0,238.6 369.6,231.4 360.2,221.6 349.8,211.6 344.7,219.3 355.4,229.1ZM275.6,167.3 284.5,154.6 293.4,142.7 284.1,136.6 275.1,148.6 266.1,161.3ZM167.8,103.5 177.2,92.1 186.9,81.8 180.1,80.6 170.4,90.8 161.0,102.0ZM405.1,270.0 407.5,265.1 406.8,257.6 404.7,249.4 401.7,254.9 404.1,262.8ZM167.2,86.4 176.9,76.9 186.9,68.5 180.9,68.6 170.9,76.8 161.2,86.1ZM305.0,128.3 310.7,121.8 297.4,112.7 283.9,104.2 277.8,110.7 291.5,119.2ZM390.3,199.1 393.8,193.6 386.1,182.7 377.3,171.7 373.2,177.4 382.3,188.3ZM393.8,193.6 398.5,186.1 402.5,179.6 398.2,172.1 393.8,178.7 388.8,186.3ZM353.9,137.2 360.4,129.9 366.4,123.9 359.4,117.0 353.1,122.9 346.2,130.2ZM241.6,55.5 248.1,52.7 237.3,50.9 227.1,50.3 220.5,52.8 230.7,53.6ZM385.5,145.8 389.7,141.0 393.1,137.4 387.9,130.1 384.1,133.6 379.5,138.4ZM295.9,70.8 304.0,66.9 311.6,64.5 303.9,60.6 296.0,62.8 287.6,66.6ZM409.9,180.0 411.7,176.0 412.7,173.0 410.1,165.6 408.8,168.5 406.6,172.5ZM406.6,172.5 408.2,169.7 402.6,158.4 396.0,147.1 393.6,149.9 400.7,161.2ZM408.2,169.7 409.8,166.4 410.5,164.3 407.7,156.8 406.6,158.9 404.6,162.2ZM327.0,73.5 331.4,72.6 320.1,65.8 308.9,60.0 303.9,60.6 315.5,66.6ZM363.0,94.0 365.7,94.0 356.0,85.4 346.0,77.5 342.5,77.2 353.0,85.2Z"/></g><rect x="86.9" y="47.0" width="331.0" height="331.0" filter="url(#rWisp)" opacity="0.6"/><path d="M359,298 l1.9,1.7 M203,163 l-2.0,1.7 M310,73 l-2.3,0.4 M226,337 l3.0,1.6 M380,292 l3.8,0.3 M142,208 l3.0,0.2 M209,294 l-1.3,1.8 M326,95 l2.2,0.2 M409,207 l1.8,1.3 M293,337 l2.3,1.9 M275,115 l-3.6,1.9 M169,281 l4.5,1.0 M281,319 l3.4,0.2 M215,116 l0.3,2.1 M246,357 l0.5,3.0 M126,302 l-2.3,1.6 M153,319 l-0.3,2.5 M371,229 l-0.0,3.9 M331,307 l0.5,2.5 M307,129 l1.1,1.8 M235,138 l3.5,0.4 M376,133 l2.3,2.2 M285,297 l4.4,1.7 M135,134 l3.0,3.9 M383,163 l-3.4,0.4 M227,202 l2.4,4.3 M237,247 l0.5,2.2 M215,178 l-1.1,1.7 M143,210 l2.9,2.0 M180,342 l-2.2,2.1 M160,225 l-1.5,2.8 M254,88 l1.6,4.6 M293,305 l-0.1,3.6 M118,181 l1.4,4.3 M317,139 l-3.0,0.6 M309,341 l0.6,3.3 M225,124 l-3.0,1.9 M255,62 l-2.8,4.0 M315,230 l-3.2,3.1 M362,284 l-1.4,2.6 M139,129 l3.8,0.7 M355,244 l-3.6,1.6 M259,212 l3.6,2.5 M331,166 l1.9,2.8 M284,148 l-2.7,4.1 M307,189 l-2.3,0.1 M236,282 l-3.2,1.6 M103,208 l2.5,3.9 M274,107 l-0.8,2.0 M294,99 l-2.1,1.0 M327,185 l3.0,1.1 M312,97 l3.3,1.2 M188,98 l1.2,3.8 M267,129 l-3.3,0.6 M213,249 l2.9,0.1 M195,141 l3.5,2.4 M368,153 l1.8,4.0 M356,259 l3.2,3.2 M323,242 l0.5,2.7 M192,334 l2.1,1.6 M348,118 l0.5,4.1 M310,136 l3.2,2.2 M127,293 l-3.4,0.2 M227,197 l-2.0,0.3 M273,196 l3.1,1.6 M352,253 l2.1,1.5 M222,214 l0.3,2.6 M264,154 l0.8,4.7 M186,237 l0.2,4.4 M232,306 l-3.2,2.2 M349,176 l-3.4,0.6 M326,212 l-2.8,0.4 M347,230 l1.9,4.1 M250,61 l-0.1,2.0 M211,169 l4.8,0.3 M408,214 l-2.4,1.9 M345,192 l-0.6,3.4 M258,295 l-4.3,1.3 M140,127 l0.4,2.8 M200,115 l-1.9,2.3 M282,218 l-2.5,0.0 M261,95 l-4.2,0.6 M307,128 l-2.1,2.1 M266,228 l3.4,0.5 M384,265 l0.4,3.5 M257,67 l-3.5,0.3 M166,303 l1.3,1.8 M344,323 l4.1,1.4 M175,241 l2.0,2.0 M135,190 l1.9,0.9 M177,219 l0.5,3.7 M239,300 l-0.7,2.2 M351,311 l-2.0,2.0 M213,230 l3.4,0.4 M255,70 l0.5,2.9 M181,317 l-3.1,0.6 M322,235 l2.9,0.4 M163,138 l3.2,0.4 M125,290 l0.1,4.9 M242,82 l3.6,1.4 M355,313 l-4.5,1.8 M381,192 l1.1,4.8 M170,233 l-0.5,2.5 M188,218 l3.7,1.9 M213,113 l0.6,1.9 M201,254 l-1.1,2.7 M219,167 l3.2,1.6 M294,272 l-2.5,2.1 M263,236 l2.2,0.8 M225,306 l-3.7,0.7 M265,207 l1.0,2.2 M213,218 l-0.7,4.6 M367,300 l0.4,4.2 M110,185 l0.6,3.2 M168,192 l3.0,1.5 M151,304 l2.5,3.4 M251,126 l-4.4,2.1 M194,344 l3.5,1.5 M368,256 l3.2,2.0 M282,259 l1.1,3.5 M160,306 l2.2,2.6 M174,169 l-0.7,2.5 M139,245 l-1.6,3.4 M212,81 l-2.0,2.3 M219,127 l-2.9,0.2 M303,323 l3.8,3.2 M242,135 l0.6,2.7 M315,279 l-2.0,1.6 M170,135 l-2.2,0.0 M151,270 l-1.0,2.7 M261,309 l1.8,1.4 M216,209 l0.0,2.4 M241,115 l-0.4,2.0 M186,281 l0.9,4.6 M232,166 l0.0,3.0 M292,213 l4.7,0.0 M279,313 l1.7,1.2 M243,125 l0.5,3.0 M227,74 l2.4,1.9 M156,156 l-2.6,0.6 M308,279 l-0.4,2.3 M320,343 l1.0,4.3 M171,286 l-3.4,0.2 M298,267 l-1.6,3.4 M334,186 l2.4,3.1 M248,65 l4.5,0.9 M250,124 l-2.6,1.4 M359,147 l3.8,1.2 M161,96 l2.3,1.9 M161,89 l3.5,0.6 M344,148 l3.3,3.1 M313,341 l-4.0,2.5 M179,268 l0.7,4.8 M270,330 l1.8,3.3 M170,166 l-0.2,2.9 M329,120 l-2.3,2.7 M126,256 l-3.5,1.7 M107,218 l1.9,1.3 M107,253 l-0.0,4.5 M198,338 l1.4,2.3 M347,124 l-1.8,2.0 M203,268 l1.9,2.4 M398,263 l-1.7,2.0 M231,274 l3.0,1.7 M288,349 l1.1,2.5 M206,108 l-1.0,3.1 M290,290 l0.9,2.1 M149,188 l2.5,0.1 M151,200 l0.1,3.2 M143,212 l1.1,3.7" stroke="#b98d5e" stroke-width="1.3" stroke-opacity="0.7" fill="none" filter="url(#rB1)"/><circle cx="252.4" cy="212.5" r="165.5" fill="url(#rShade)"/><path d="M278.6,104.5 Q322,146 369,180 Q330,214 300.8,259.3 Q254,222 199.4,194 Q246,154 278.6,104.5 Z" fill="#0c0e0e"/><clipPath id="rHoleClip"><path d="M278.6,104.5 Q322,146 369,180 Q330,214 300.8,259.3 Q254,222 199.4,194 Q246,154 278.6,104.5 Z"/></clipPath><g clip-path="url(#rHoleClip)"><path d="M278.6,104.5 Q322,146 369,180 L356,190 Q312,158 270,118 Z" fill="#1c2222" opacity="0.85"/><path d="M290,118 L282,128 M304,131 L296,141 M318,143 L310,153 M332,154 L325,164 M346,165 L339,175" stroke="#7f8989" stroke-width="0.7" stroke-opacity="0.5"/><path d="M258.4,126.6 Q300,160 345,188.4 L300.8,259.3 L210.4,201.3 Q238,168 258.4,126.6 Z" fill="#bdbdbd" filter="url(#rB2)"/><path d="M261,148 L327,192 L297,240 L228,198 Z" fill="#d0d0d0" filter="url(#rB1)"/><path d="M282.3,177.3 L299.8,190.2 L289.7,210.5 L268.5,195.8 Z" fill="#a9a9a9"/><path d="M262,120 Q305,158 352,189 L338,202 Q296,176 252,140 Z" fill="#050505" filter="url(#rB2)"/><path d="M252,140 Q296,176 338,202 L330,210 Q290,186 248,150 Z" fill="#000" opacity="0.5" filter="url(#rB6)"/><path d="M199.4,194 L210.4,201.3 L222,186 L214,182 Z" fill="#0a0c0c" opacity="0.7" filter="url(#rB1)"/></g><path d="M278.6,104.5 Q246,154 199.4,194" fill="none" stroke="#0b0d0d" stroke-width="4" stroke-opacity="0.5" filter="url(#rB1)"/></g><circle cx="252.4" cy="212.5" r="165.5" fill="none" stroke="#101414" stroke-opacity="0.5" stroke-width="2"/></g><rect width="500" height="500" filter="url(#rGrain)" opacity="0.22"/><rect width="500" height="500" filter="url(#rGrainD)" opacity="0.2"/></g></symbol><symbol id="renderThumb" viewBox="0 0 500 500"><g clip-path="url(#rImgClip)"><use href="#renderCore"/><rect width="500" height="500" fill="#fff" opacity="0.2"/><circle cx="252.4" cy="212.5" r="165" fill="#2a3030" opacity="0.3"/><path d="M258.4,126.6 Q300,160 345,188.4 L300.8,259.3 L210.4,201.3 Q238,168 258.4,126.6 Z" fill="#c9c9c9" opacity="0.8"/><path d="M262,120 Q305,158 352,189 L338,202 Q296,176 252,140 Z" fill="#050505" opacity="0.8"/></g></symbol></defs></svg>
<svg style="left:708px;top:313px" width="500" height="500"><use href="#renderImg" width="500" height="500"/></svg>
<svg style="left:1599px;top:681px" width="96" height="96"><use href="#renderThumb" width="96" height="96"/></svg>
<svg style="left:945px;top:551px" width="25" height="25" viewBox="0 0 25 25"><path d="M12.5,1.5 V23.5 M1.5,12.5 H23.5" stroke="#222" stroke-width="3.2" stroke-opacity="0.55"/><path d="M12.5,2.5 V22.5 M2.5,12.5 H22.5" stroke="#fff" stroke-width="1.6"/></svg>
<svg width="0" height="0" style="left:0;top:0"><defs><filter id="mbTurb" x="0" y="0" width="100%" height="100%" color-interpolation-filters="sRGB"><feTurbulence type="turbulence" baseFrequency="0.016" numOctaves="6" seed="11" result="t"/><feColorMatrix in="t" type="matrix" values="0 0 0 0 0  0 0 0 0 0  0 0 0 0 0  -10 0 0 0 1.15"/></filter><filter id="mbTurb2" x="0" y="0" width="100%" height="100%" color-interpolation-filters="sRGB"><feTurbulence type="fractalNoise" baseFrequency="0.035" numOctaves="5" seed="4" result="t"/><feColorMatrix in="t" type="matrix" values="0 0 0 0 0  0 0 0 0 0  0 0 0 0 0  1.6 0 0 0 -0.78"/></filter><filter id="mbTurb3" x="0" y="0" width="100%" height="100%" color-interpolation-filters="sRGB"><feTurbulence type="turbulence" baseFrequency="0.04" numOctaves="5" seed="31" result="t"/><feColorMatrix in="t" type="matrix" values="0 0 0 0 0  0 0 0 0 0  0 0 0 0 0  -5 0 0 0 0.8"/></filter><filter id="mbTurb4" x="0" y="0" width="100%" height="100%" color-interpolation-filters="sRGB"><feTurbulence type="turbulence" baseFrequency="0.06" numOctaves="4" seed="77" result="t"/><feColorMatrix in="t" type="matrix" values="0 0 0 0 0  0 0 0 0 0  0 0 0 0 0  -5 0 0 0 0.95"/></filter><filter id="mbBlur" x="-30%" y="-30%" width="160%" height="160%"><feGaussianBlur stdDeviation="9"/></filter><filter id="mbBlur2" x="-30%" y="-30%" width="160%" height="160%"><feGaussianBlur stdDeviation="3.5"/></filter><filter id="mbBlur3" x="-10%" y="-10%" width="120%" height="120%"><feGaussianBlur stdDeviation="0.45"/></filter><filter id="mbBlur4" x="-10%" y="-10%" width="120%" height="120%"><feGaussianBlur stdDeviation="0.9"/></filter><symbol id="marble" viewBox="0 0 300 300" preserveAspectRatio="none"><rect width="300" height="300" fill="#f7f7f7"/><g filter="url(#mbBlur)" fill="#9a9a9a"><ellipse cx="55" cy="150" rx="75" ry="20" opacity="0.34"/><ellipse cx="120" cy="178" rx="45" ry="14" opacity="0.26"/><ellipse cx="182" cy="215" rx="36" ry="48" opacity="0.40"/><ellipse cx="200" cy="180" rx="42" ry="18" opacity="0.32"/><ellipse cx="255" cy="115" rx="26" ry="40" opacity="0.30"/><ellipse cx="275" cy="35" rx="16" ry="28" opacity="0.24"/><ellipse cx="262" cy="275" rx="26" ry="22" opacity="0.29"/><ellipse cx="245" cy="195" rx="36" ry="12" opacity="0.22"/><ellipse cx="20" cy="215" rx="18" ry="24" opacity="0.20"/><ellipse cx="190" cy="45" rx="28" ry="12" opacity="0.18"/><ellipse cx="100" cy="90" rx="40" ry="26" opacity="0.10"/></g><g filter="url(#mbBlur)" fill="#ffffff"><ellipse cx="95" cy="245" rx="55" ry="40" opacity="0.8"/><ellipse cx="150" cy="95" rx="45" ry="35" opacity="0.55"/><ellipse cx="35" cy="70" rx="30" ry="30" opacity="0.5"/><ellipse cx="225" cy="250" rx="22" ry="26" opacity="0.55"/></g><mask id="mbMask" maskUnits="userSpaceOnUse" x="0" y="0" width="300" height="300"><rect width="300" height="300" fill="#2e2e2e"/><g filter="url(#mbBlur)" fill="#fff"><ellipse cx="55" cy="150" rx="80" ry="26"/><ellipse cx="120" cy="178" rx="45" ry="16"/><ellipse cx="182" cy="215" rx="40" ry="52"/><ellipse cx="205" cy="180" rx="48" ry="20"/><ellipse cx="255" cy="115" rx="30" ry="44"/><ellipse cx="275" cy="35" rx="18" ry="30"/><ellipse cx="262" cy="275" rx="28" ry="24"/><ellipse cx="250" cy="195" rx="40" ry="14"/><ellipse cx="20" cy="215" rx="18" ry="24" opacity="0.7"/><ellipse cx="190" cy="45" rx="30" ry="14" opacity="0.7"/><ellipse cx="100" cy="100" rx="40" ry="30" opacity="0.5"/></g></mask><g mask="url(#mbMask)"><rect width="300" height="300" fill="#5e5e5e" filter="url(#mbTurb)" opacity="0.36"/><rect x="-80" y="-80" width="460" height="460" transform="rotate(28 150 150)" fill="#6a6a6a" filter="url(#mbTurb4)" opacity="0.55"/></g><rect width="300" height="300" fill="#666" filter="url(#mbTurb2)" opacity="0.16"/><rect x="-80" y="-80" width="460" height="460" transform="rotate(-19 150 150)" fill="#808080" filter="url(#mbTurb3)" opacity="0.26"/><g filter="url(#mbBlur3)" opacity="0.9"><path d="M0.0,28.0 L6.4,33.9 L15.9,41.4 L22.7,51.2 L27.3,60.0 L34.7,67.6 L42.4,73.5 L52.0,86.0 L60.0,92.0 L66.6,97.7 L78.5,109.4 L87.1,113.4 L98.4,118.6 L106.6,127.4 L111.2,133.7 L121.1,145.2 L129.2,151.2 L140.0,158.0" fill="none" stroke="#8a8a8a" stroke-width="0.9" stroke-opacity="0.6" stroke-linejoin="round"/><path d="M95.0,120.0 L101.7,124.5 L107.5,128.3 L111.7,133.8 L120.4,139.7 L125.1,145.3 L132.0,150.0" fill="none" stroke="#7d7d7d" stroke-width="0.8" stroke-opacity="0.55" stroke-linejoin="round"/><path d="M192.0,72.0 L198.9,70.0 L207.8,71.0 L212.2,69.4 L220.8,69.9 L229.0,65.9 L235.0,66.0 L248.7,60.7 L256.2,61.5 L265.4,56.9 L275.6,55.0 L290.8,51.4 L300.0,48.0" fill="none" stroke="#909090" stroke-width="0.8" stroke-opacity="0.55" stroke-linejoin="round"/><path d="M272.0,0.0 L273.7,7.5 L272.0,17.7 L270.8,25.5 L271.8,37.0 L269.0,43.8 L265.9,52.6 L268.0,60.0 L267.4,70.5 L266.9,73.7 L262.8,83.5 L262.0,90.0" fill="none" stroke="#888" stroke-width="0.8" stroke-opacity="0.5" stroke-linejoin="round"/><path d="M160.0,175.0 L165.0,177.6 L173.7,178.4 L180.9,185.2 L189.2,184.9 L198.6,191.5 L204.6,191.8 L215.0,195.0 L225.9,198.6 L238.2,199.7 L245.5,198.2 L256.7,202.3 L270.9,199.2 L276.8,200.9 L287.8,203.7 L300.0,205.0" fill="none" stroke="#858585" stroke-width="0.8" stroke-opacity="0.5" stroke-linejoin="round"/><path d="M268.0,200.0 L267.7,207.4 L263.3,217.2 L264.6,227.0 L267.3,236.6 L263.8,245.0 L263.9,250.5 L262.0,262.0 L270.0,271.3 L275.4,279.0 L278.2,284.2 L282.0,293.2 L290.0,300.0" fill="none" stroke="#808080" stroke-width="0.9" stroke-opacity="0.55" stroke-linejoin="round"/><path d="M200.0,250.0 L203.4,252.2 L209.7,257.1 L216.0,261.0 L219.9,265.9 L228.0,272.0 L233.2,274.7 L239.6,280.0 L248.7,280.3 L255.0,285.0" fill="none" stroke="#888" stroke-width="0.8" stroke-opacity="0.5" stroke-linejoin="round"/><path d="M150.0,225.0 L152.5,217.1 L157.2,208.7 L164.1,207.0 L165.8,196.9 L170.0,190.0 L171.3,180.1 L176.6,173.6 L183.2,165.5 L185.0,160.0" fill="none" stroke="#808080" stroke-width="0.7" stroke-opacity="0.5" stroke-linejoin="round"/><path d="M0.0,160.0 L5.5,161.0 L16.8,154.5 L25.3,152.2 L33.5,156.2 L43.8,152.8 L50.0,150.0 L58.6,152.5 L68.0,158.3 L80.2,161.7 L89.0,161.7 L101.9,169.6 L110.0,170.0" fill="none" stroke="#8c8c8c" stroke-width="0.7" stroke-opacity="0.45" stroke-linejoin="round"/><path d="M180.0,205.0 L185.4,216.0 L188.6,224.8 L188.4,232.6 L192.5,238.8 L193.8,249.5 L200.0,260.0" fill="none" stroke="#7c7c7c" stroke-width="0.7" stroke-opacity="0.5" stroke-linejoin="round"/><path d="M10.0,195.0 L14.0,200.8 L21.8,204.8 L26.7,212.0 L30.0,215.0 L28.8,220.7 L22.9,226.4 L19.8,232.6 L18.0,240.0" fill="none" stroke="#8c8c8c" stroke-width="0.7" stroke-opacity="0.45" stroke-linejoin="round"/></g><g filter="url(#mbBlur3)"><path d="M238.1,104.3 l-0.3,1.4" stroke="#3a3a3a" stroke-width="1.3" stroke-opacity="0.34" stroke-linecap="round"/><path d="M242.6,106.0 l-1.1,1.9" stroke="#3a3a3a" stroke-width="1.3" stroke-opacity="0.54" stroke-linecap="round"/><path d="M248.9,120.5 l-1.7,1.2" stroke="#3a3a3a" stroke-width="1.0" stroke-opacity="0.50" stroke-linecap="round"/><path d="M255.4,114.4 l1.5,1.2" stroke="#3a3a3a" stroke-width="0.8" stroke-opacity="0.38" stroke-linecap="round"/><path d="M249.5,116.6 l-1.7,1.2" stroke="#3a3a3a" stroke-width="1.2" stroke-opacity="0.48" stroke-linecap="round"/><path d="M243.5,116.0 l0.8,0.3" stroke="#3a3a3a" stroke-width="1.5" stroke-opacity="0.62" stroke-linecap="round"/><path d="M239.3,116.0 l-1.3,1.8" stroke="#3a3a3a" stroke-width="0.9" stroke-opacity="0.43" stroke-linecap="round"/><path d="M247.0,123.2 l-0.1,1.0" stroke="#3a3a3a" stroke-width="0.9" stroke-opacity="0.51" stroke-linecap="round"/><path d="M252.8,125.3 l-0.1,1.4" stroke="#3a3a3a" stroke-width="1.4" stroke-opacity="0.51" stroke-linecap="round"/><path d="M251.9,114.9 l0.1,1.5" stroke="#3a3a3a" stroke-width="1.1" stroke-opacity="0.31" stroke-linecap="round"/><path d="M247.7,118.2 l1.6,1.3" stroke="#3a3a3a" stroke-width="1.1" stroke-opacity="0.66" stroke-linecap="round"/><path d="M247.3,117.6 l0.1,1.2" stroke="#3a3a3a" stroke-width="1.1" stroke-opacity="0.69" stroke-linecap="round"/><path d="M253.0,123.5 l-0.5,1.0" stroke="#3a3a3a" stroke-width="1.1" stroke-opacity="0.58" stroke-linecap="round"/><path d="M248.2,114.5 l0.6,2.2" stroke="#3a3a3a" stroke-width="1.2" stroke-opacity="0.55" stroke-linecap="round"/><path d="M244.5,117.6 l0.3,1.5" stroke="#3a3a3a" stroke-width="1.5" stroke-opacity="0.65" stroke-linecap="round"/><path d="M254.6,108.9 l1.4,1.8" stroke="#3a3a3a" stroke-width="1.1" stroke-opacity="0.77" stroke-linecap="round"/><path d="M249.6,114.5 l1.2,0.6" stroke="#3a3a3a" stroke-width="0.9" stroke-opacity="0.34" stroke-linecap="round"/><path d="M246.3,113.7 l-1.4,1.4" stroke="#3a3a3a" stroke-width="0.8" stroke-opacity="0.66" stroke-linecap="round"/><path d="M241.8,104.3 l1.6,1.7" stroke="#3a3a3a" stroke-width="1.5" stroke-opacity="0.50" stroke-linecap="round"/><path d="M233.5,119.6 l-1.4,1.9" stroke="#3a3a3a" stroke-width="0.8" stroke-opacity="0.52" stroke-linecap="round"/><path d="M244.9,117.6 l-0.4,1.1" stroke="#3a3a3a" stroke-width="0.7" stroke-opacity="0.58" stroke-linecap="round"/><path d="M243.3,120.6 l0.3,0.6" stroke="#3a3a3a" stroke-width="1.2" stroke-opacity="0.56" stroke-linecap="round"/><path d="M262.5,126.7 l2.0,1.2" stroke="#3a3a3a" stroke-width="0.9" stroke-opacity="0.32" stroke-linecap="round"/><path d="M248.3,116.0 l0.9,0.6" stroke="#3a3a3a" stroke-width="1.0" stroke-opacity="0.76" stroke-linecap="round"/><path d="M248.1,117.6 l-0.1,2.3" stroke="#3a3a3a" stroke-width="1.3" stroke-opacity="0.34" stroke-linecap="round"/><path d="M252.8,120.5 l0.5,1.8" stroke="#3a3a3a" stroke-width="0.8" stroke-opacity="0.77" stroke-linecap="round"/><path d="M247.2,116.7 l1.9,0.9" stroke="#3a3a3a" stroke-width="1.4" stroke-opacity="0.53" stroke-linecap="round"/><path d="M246.1,122.2 l-1.2,1.0" stroke="#3a3a3a" stroke-width="0.9" stroke-opacity="0.36" stroke-linecap="round"/><path d="M247.7,117.9 l0.8,0.4" stroke="#3a3a3a" stroke-width="0.9" stroke-opacity="0.46" stroke-linecap="round"/><path d="M246.5,123.7 l1.1,1.6" stroke="#3a3a3a" stroke-width="1.1" stroke-opacity="0.39" stroke-linecap="round"/><path d="M244.1,125.8 l-0.3,0.6" stroke="#3a3a3a" stroke-width="1.1" stroke-opacity="0.39" stroke-linecap="round"/><path d="M247.2,118.2 l2.0,1.2" stroke="#3a3a3a" stroke-width="1.4" stroke-opacity="0.52" stroke-linecap="round"/><path d="M243.4,118.2 l-0.5,1.4" stroke="#3a3a3a" stroke-width="1.5" stroke-opacity="0.47" stroke-linecap="round"/><path d="M251.8,108.6 l-0.4,1.8" stroke="#3a3a3a" stroke-width="1.0" stroke-opacity="0.47" stroke-linecap="round"/><path d="M250.2,119.1 l1.2,1.5" stroke="#3a3a3a" stroke-width="0.8" stroke-opacity="0.34" stroke-linecap="round"/><path d="M249.4,115.0 l-0.6,2.1" stroke="#3a3a3a" stroke-width="0.9" stroke-opacity="0.42" stroke-linecap="round"/><path d="M246.6,124.9 l0.9,1.1" stroke="#3a3a3a" stroke-width="1.5" stroke-opacity="0.79" stroke-linecap="round"/><path d="M246.7,117.5 l-0.8,0.6" stroke="#3a3a3a" stroke-width="0.9" stroke-opacity="0.48" stroke-linecap="round"/><path d="M255.5,118.1 l1.1,1.0" stroke="#3a3a3a" stroke-width="1.1" stroke-opacity="0.30" stroke-linecap="round"/><path d="M247.4,127.6 l0.3,0.7" stroke="#3a3a3a" stroke-width="0.7" stroke-opacity="0.31" stroke-linecap="round"/><path d="M247.6,119.7 l-0.7,1.4" stroke="#3a3a3a" stroke-width="1.2" stroke-opacity="0.66" stroke-linecap="round"/><path d="M256.6,106.5 l0.6,1.1" stroke="#3a3a3a" stroke-width="1.5" stroke-opacity="0.37" stroke-linecap="round"/><path d="M247.7,115.7 l-1.5,1.5" stroke="#3a3a3a" stroke-width="1.2" stroke-opacity="0.67" stroke-linecap="round"/><path d="M248.8,115.3 l0.1,0.8" stroke="#3a3a3a" stroke-width="1.1" stroke-opacity="0.72" stroke-linecap="round"/><path d="M249.9,110.7 l-0.7,2.1" stroke="#3a3a3a" stroke-width="1.3" stroke-opacity="0.41" stroke-linecap="round"/><path d="M258.4,120.9 l0.4,0.8" stroke="#3a3a3a" stroke-width="0.8" stroke-opacity="0.72" stroke-linecap="round"/><path d="M239.8,113.6 l0.3,1.8" stroke="#3a3a3a" stroke-width="0.7" stroke-opacity="0.70" stroke-linecap="round"/><path d="M247.9,105.3 l0.1,1.5" stroke="#3a3a3a" stroke-width="1.2" stroke-opacity="0.33" stroke-linecap="round"/><path d="M248.0,117.9 l-0.4,1.0" stroke="#3a3a3a" stroke-width="0.9" stroke-opacity="0.67" stroke-linecap="round"/><path d="M251.5,117.2 l0.6,1.4" stroke="#3a3a3a" stroke-width="1.1" stroke-opacity="0.64" stroke-linecap="round"/><path d="M249.0,104.7 l0.6,0.4" stroke="#3a3a3a" stroke-width="0.9" stroke-opacity="0.67" stroke-linecap="round"/><path d="M245.1,129.4 l1.5,0.5" stroke="#3a3a3a" stroke-width="0.7" stroke-opacity="0.43" stroke-linecap="round"/><path d="M245.7,112.1 l0.1,1.1" stroke="#3a3a3a" stroke-width="1.1" stroke-opacity="0.53" stroke-linecap="round"/><path d="M257.3,130.0 l1.6,1.5" stroke="#3a3a3a" stroke-width="1.5" stroke-opacity="0.77" stroke-linecap="round"/><path d="M264.0,120.5 l0.6,2.3" stroke="#3a3a3a" stroke-width="0.9" stroke-opacity="0.40" stroke-linecap="round"/><path d="M252.0,116.0 l-0.1,1.0" stroke="#3a3a3a" stroke-width="0.8" stroke-opacity="0.56" stroke-linecap="round"/><path d="M258.7,113.4 l-1.1,1.1" stroke="#3a3a3a" stroke-width="1.3" stroke-opacity="0.42" stroke-linecap="round"/><path d="M257.9,107.6 l1.4,0.5" stroke="#3a3a3a" stroke-width="0.7" stroke-opacity="0.55" stroke-linecap="round"/><path d="M246.5,118.7 l0.6,1.0" stroke="#3a3a3a" stroke-width="1.4" stroke-opacity="0.30" stroke-linecap="round"/><path d="M248.0,111.4 l1.8,1.1" stroke="#3a3a3a" stroke-width="1.4" stroke-opacity="0.66" stroke-linecap="round"/><path d="M279.2,43.8 l-1.1,0.7" stroke="#3a3a3a" stroke-width="1.2" stroke-opacity="0.48" stroke-linecap="round"/><path d="M273.0,48.4 l1.0,0.4" stroke="#3a3a3a" stroke-width="0.8" stroke-opacity="0.72" stroke-linecap="round"/><path d="M277.1,50.7 l0.1,1.1" stroke="#3a3a3a" stroke-width="0.9" stroke-opacity="0.49" stroke-linecap="round"/><path d="M279.7,44.3 l-1.2,1.8" stroke="#3a3a3a" stroke-width="1.2" stroke-opacity="0.76" stroke-linecap="round"/><path d="M286.5,40.4 l-0.3,0.6" stroke="#3a3a3a" stroke-width="1.1" stroke-opacity="0.68" stroke-linecap="round"/><path d="M276.2,41.8 l1.0,0.4" stroke="#3a3a3a" stroke-width="1.4" stroke-opacity="0.36" stroke-linecap="round"/><path d="M275.2,45.7 l-1.6,1.1" stroke="#3a3a3a" stroke-width="0.9" stroke-opacity="0.63" stroke-linecap="round"/><path d="M276.7,50.6 l0.6,1.5" stroke="#3a3a3a" stroke-width="0.8" stroke-opacity="0.38" stroke-linecap="round"/><path d="M279.5,52.9 l-0.7,0.7" stroke="#3a3a3a" stroke-width="1.5" stroke-opacity="0.52" stroke-linecap="round"/><path d="M280.5,49.2 l0.8,0.5" stroke="#3a3a3a" stroke-width="1.0" stroke-opacity="0.35" stroke-linecap="round"/><path d="M278.0,45.6 l-1.0,2.0" stroke="#3a3a3a" stroke-width="1.0" stroke-opacity="0.51" stroke-linecap="round"/><path d="M270.3,43.4 l0.6,1.1" stroke="#3a3a3a" stroke-width="0.7" stroke-opacity="0.44" stroke-linecap="round"/><path d="M282.9,43.6 l-1.1,1.3" stroke="#3a3a3a" stroke-width="0.9" stroke-opacity="0.44" stroke-linecap="round"/><path d="M278.0,52.1 l0.3,1.3" stroke="#3a3a3a" stroke-width="1.5" stroke-opacity="0.72" stroke-linecap="round"/><path d="M279.1,43.5 l-1.3,1.3" stroke="#3a3a3a" stroke-width="1.1" stroke-opacity="0.59" stroke-linecap="round"/><path d="M278.2,45.0 l-1.0,0.9" stroke="#3a3a3a" stroke-width="1.4" stroke-opacity="0.73" stroke-linecap="round"/><path d="M278.0,45.0 l0.1,0.9" stroke="#3a3a3a" stroke-width="1.2" stroke-opacity="0.77" stroke-linecap="round"/><path d="M277.5,41.0 l-0.8,1.6" stroke="#3a3a3a" stroke-width="1.1" stroke-opacity="0.58" stroke-linecap="round"/><path d="M278.9,45.3 l-0.5,2.2" stroke="#3a3a3a" stroke-width="0.9" stroke-opacity="0.36" stroke-linecap="round"/><path d="M278.0,51.0 l-0.6,1.6" stroke="#3a3a3a" stroke-width="0.8" stroke-opacity="0.34" stroke-linecap="round"/><path d="M272.9,43.9 l-0.1,1.0" stroke="#3a3a3a" stroke-width="0.7" stroke-opacity="0.45" stroke-linecap="round"/><path d="M275.1,46.0 l-0.5,2.3" stroke="#3a3a3a" stroke-width="1.4" stroke-opacity="0.54" stroke-linecap="round"/><path d="M278.0,45.4 l1.0,1.6" stroke="#3a3a3a" stroke-width="0.7" stroke-opacity="0.55" stroke-linecap="round"/><path d="M271.0,26.0 l0.9,1.1" stroke="#3a3a3a" stroke-width="1.2" stroke-opacity="0.76" stroke-linecap="round"/><path d="M290.5,97.2 l-0.4,1.3" stroke="#3a3a3a" stroke-width="0.9" stroke-opacity="0.70" stroke-linecap="round"/><path d="M289.9,90.9 l1.1,1.1" stroke="#3a3a3a" stroke-width="1.5" stroke-opacity="0.46" stroke-linecap="round"/><path d="M290.2,91.5 l1.1,1.6" stroke="#3a3a3a" stroke-width="1.5" stroke-opacity="0.55" stroke-linecap="round"/><path d="M291.1,95.8 l0.3,1.0" stroke="#3a3a3a" stroke-width="1.2" stroke-opacity="0.77" stroke-linecap="round"/><path d="M291.4,94.5 l1.9,1.4" stroke="#3a3a3a" stroke-width="0.7" stroke-opacity="0.33" stroke-linecap="round"/><path d="M288.6,93.6 l-1.5,1.6" stroke="#3a3a3a" stroke-width="1.3" stroke-opacity="0.80" stroke-linecap="round"/><path d="M291.2,91.3 l-1.0,2.1" stroke="#3a3a3a" stroke-width="0.7" stroke-opacity="0.63" stroke-linecap="round"/><path d="M288.3,94.3 l0.6,1.1" stroke="#3a3a3a" stroke-width="0.8" stroke-opacity="0.30" stroke-linecap="round"/><path d="M288.8,100.6 l-0.7,0.5" stroke="#3a3a3a" stroke-width="0.9" stroke-opacity="0.48" stroke-linecap="round"/><path d="M293.7,81.4 l0.6,2.0" stroke="#3a3a3a" stroke-width="0.7" stroke-opacity="0.54" stroke-linecap="round"/><path d="M288.3,94.4 l-0.9,0.9" stroke="#3a3a3a" stroke-width="0.7" stroke-opacity="0.51" stroke-linecap="round"/><path d="M290.5,90.3 l1.8,0.8" stroke="#3a3a3a" stroke-width="0.7" stroke-opacity="0.33" stroke-linecap="round"/><path d="M290.3,91.8 l1.0,2.0" stroke="#3a3a3a" stroke-width="0.9" stroke-opacity="0.78" stroke-linecap="round"/><path d="M284.8,85.5 l-0.4,1.0" stroke="#3a3a3a" stroke-width="1.0" stroke-opacity="0.44" stroke-linecap="round"/><path d="M290.3,92.0 l-1.4,1.1" stroke="#3a3a3a" stroke-width="0.7" stroke-opacity="0.42" stroke-linecap="round"/><path d="M280.8,94.0 l-1.9,1.4" stroke="#3a3a3a" stroke-width="1.0" stroke-opacity="0.43" stroke-linecap="round"/><path d="M250.8,297.4 l-0.5,0.8" stroke="#3a3a3a" stroke-width="1.3" stroke-opacity="0.71" stroke-linecap="round"/><path d="M262.1,289.3 l0.8,1.5" stroke="#3a3a3a" stroke-width="1.0" stroke-opacity="0.48" stroke-linecap="round"/><path d="M262.6,285.7 l1.3,1.5" stroke="#3a3a3a" stroke-width="0.8" stroke-opacity="0.32" stroke-linecap="round"/><path d="M260.4,289.2 l-1.0,0.7" stroke="#3a3a3a" stroke-width="1.4" stroke-opacity="0.79" stroke-linecap="round"/><path d="M261.8,292.9 l-0.5,1.4" stroke="#3a3a3a" stroke-width="1.1" stroke-opacity="0.42" stroke-linecap="round"/><path d="M260.9,290.9 l-0.5,1.6" stroke="#3a3a3a" stroke-width="1.3" stroke-opacity="0.72" stroke-linecap="round"/><path d="M258.2,281.0 l-0.0,1.1" stroke="#3a3a3a" stroke-width="1.0" stroke-opacity="0.67" stroke-linecap="round"/><path d="M264.2,299.5 l0.7,0.8" stroke="#3a3a3a" stroke-width="0.8" stroke-opacity="0.74" stroke-linecap="round"/><path d="M259.8,288.3 l0.2,2.4" stroke="#3a3a3a" stroke-width="0.9" stroke-opacity="0.70" stroke-linecap="round"/><path d="M259.3,284.5 l2.1,1.2" stroke="#3a3a3a" stroke-width="1.1" stroke-opacity="0.71" stroke-linecap="round"/><path d="M262.7,288.4 l0.9,0.6" stroke="#3a3a3a" stroke-width="0.9" stroke-opacity="0.79" stroke-linecap="round"/><path d="M261.3,289.4 l0.9,2.1" stroke="#3a3a3a" stroke-width="1.4" stroke-opacity="0.52" stroke-linecap="round"/><path d="M261.9,293.2 l-0.1,0.8" stroke="#3a3a3a" stroke-width="1.2" stroke-opacity="0.41" stroke-linecap="round"/><path d="M253.3,303.2 l0.6,0.6" stroke="#3a3a3a" stroke-width="0.9" stroke-opacity="0.60" stroke-linecap="round"/><path d="M261.9,289.7 l-0.3,1.1" stroke="#3a3a3a" stroke-width="0.8" stroke-opacity="0.46" stroke-linecap="round"/><path d="M262.2,291.0 l0.0,2.0" stroke="#3a3a3a" stroke-width="0.8" stroke-opacity="0.35" stroke-linecap="round"/><path d="M256.2,296.3 l0.6,0.5" stroke="#3a3a3a" stroke-width="1.3" stroke-opacity="0.50" stroke-linecap="round"/><path d="M261.5,293.3 l-0.9,0.7" stroke="#3a3a3a" stroke-width="0.9" stroke-opacity="0.58" stroke-linecap="round"/><path d="M256.2,300.2 l1.0,2.2" stroke="#3a3a3a" stroke-width="0.9" stroke-opacity="0.66" stroke-linecap="round"/><path d="M263.6,297.3 l-0.4,0.4" stroke="#3a3a3a" stroke-width="1.0" stroke-opacity="0.71" stroke-linecap="round"/><path d="M258.3,293.5 l0.8,0.3" stroke="#3a3a3a" stroke-width="1.1" stroke-opacity="0.62" stroke-linecap="round"/><path d="M265.4,287.0 l-0.1,0.8" stroke="#3a3a3a" stroke-width="1.0" stroke-opacity="0.55" stroke-linecap="round"/><path d="M262.8,291.5 l1.9,1.2" stroke="#3a3a3a" stroke-width="1.1" stroke-opacity="0.70" stroke-linecap="round"/><path d="M268.3,288.1 l0.8,0.5" stroke="#3a3a3a" stroke-width="1.5" stroke-opacity="0.79" stroke-linecap="round"/><path d="M250.4,291.8 l-0.9,0.9" stroke="#3a3a3a" stroke-width="1.2" stroke-opacity="0.71" stroke-linecap="round"/><path d="M264.2,294.8 l1.4,1.5" stroke="#3a3a3a" stroke-width="1.0" stroke-opacity="0.72" stroke-linecap="round"/><path d="M262.7,288.1 l0.1,1.3" stroke="#3a3a3a" stroke-width="1.0" stroke-opacity="0.36" stroke-linecap="round"/><path d="M262.1,294.8 l-1.4,1.3" stroke="#3a3a3a" stroke-width="0.7" stroke-opacity="0.58" stroke-linecap="round"/><path d="M262.5,276.0 l-0.1,0.8" stroke="#3a3a3a" stroke-width="1.1" stroke-opacity="0.61" stroke-linecap="round"/><path d="M261.2,293.2 l-0.1,1.4" stroke="#3a3a3a" stroke-width="1.0" stroke-opacity="0.63" stroke-linecap="round"/><path d="M101.5,203.2 l0.2,1.7" stroke="#3a3a3a" stroke-width="0.9" stroke-opacity="0.68" stroke-linecap="round"/><path d="M102.0,202.7 l1.1,0.9" stroke="#3a3a3a" stroke-width="1.1" stroke-opacity="0.35" stroke-linecap="round"/><path d="M102.7,204.0 l0.1,1.4" stroke="#3a3a3a" stroke-width="0.7" stroke-opacity="0.62" stroke-linecap="round"/><path d="M102.4,203.3 l-1.0,1.7" stroke="#3a3a3a" stroke-width="1.1" stroke-opacity="0.33" stroke-linecap="round"/><path d="M97.8,202.9 l-0.5,0.6" stroke="#3a3a3a" stroke-width="1.5" stroke-opacity="0.67" stroke-linecap="round"/><path d="M103.6,197.7 l-0.8,0.5" stroke="#3a3a3a" stroke-width="1.1" stroke-opacity="0.78" stroke-linecap="round"/><path d="M103.9,201.5 l2.0,1.0" stroke="#3a3a3a" stroke-width="1.0" stroke-opacity="0.68" stroke-linecap="round"/><path d="M104.0,207.3 l1.3,1.8" stroke="#3a3a3a" stroke-width="1.4" stroke-opacity="0.37" stroke-linecap="round"/><path d="M185.1,184.9 l0.1,1.1" stroke="#3a3a3a" stroke-width="1.0" stroke-opacity="0.32" stroke-linecap="round"/><path d="M188.7,187.0 l-0.7,0.6" stroke="#3a3a3a" stroke-width="1.2" stroke-opacity="0.75" stroke-linecap="round"/><path d="M188.3,185.6 l-0.3,1.5" stroke="#3a3a3a" stroke-width="1.0" stroke-opacity="0.74" stroke-linecap="round"/><path d="M185.8,183.9 l-1.1,1.2" stroke="#3a3a3a" stroke-width="0.8" stroke-opacity="0.80" stroke-linecap="round"/><path d="M183.4,178.1 l-0.9,0.6" stroke="#3a3a3a" stroke-width="1.2" stroke-opacity="0.48" stroke-linecap="round"/><path d="M188.5,177.6 l1.1,0.9" stroke="#3a3a3a" stroke-width="1.3" stroke-opacity="0.32" stroke-linecap="round"/><path d="M188.1,184.8 l-0.2,2.4" stroke="#3a3a3a" stroke-width="1.2" stroke-opacity="0.46" stroke-linecap="round"/><path d="M194.9,185.1 l0.5,0.4" stroke="#3a3a3a" stroke-width="1.2" stroke-opacity="0.52" stroke-linecap="round"/><path d="M186.0,184.8 l-0.2,1.0" stroke="#3a3a3a" stroke-width="0.7" stroke-opacity="0.30" stroke-linecap="round"/><path d="M187.0,186.7 l0.3,0.7" stroke="#3a3a3a" stroke-width="0.9" stroke-opacity="0.59" stroke-linecap="round"/><path d="M186.4,183.6 l1.2,0.8" stroke="#3a3a3a" stroke-width="1.4" stroke-opacity="0.42" stroke-linecap="round"/><path d="M191.8,192.3 l-0.2,0.8" stroke="#3a3a3a" stroke-width="1.4" stroke-opacity="0.69" stroke-linecap="round"/><path d="M187.9,185.1 l-0.0,1.8" stroke="#3a3a3a" stroke-width="1.0" stroke-opacity="0.62" stroke-linecap="round"/><path d="M187.3,185.4 l-0.9,2.1" stroke="#3a3a3a" stroke-width="0.9" stroke-opacity="0.75" stroke-linecap="round"/><path d="M192.6,186.8 l0.9,0.4" stroke="#3a3a3a" stroke-width="1.3" stroke-opacity="0.31" stroke-linecap="round"/><path d="M187.1,184.6 l1.9,1.3" stroke="#3a3a3a" stroke-width="0.9" stroke-opacity="0.60" stroke-linecap="round"/><path d="M189.5,47.7 l0.5,0.8" stroke="#3a3a3a" stroke-width="0.9" stroke-opacity="0.32" stroke-linecap="round"/><path d="M200.2,41.9 l-0.7,1.9" stroke="#3a3a3a" stroke-width="0.7" stroke-opacity="0.72" stroke-linecap="round"/><path d="M194.8,37.2 l1.0,1.0" stroke="#3a3a3a" stroke-width="0.8" stroke-opacity="0.42" stroke-linecap="round"/><path d="M196.7,48.6 l-0.5,1.1" stroke="#3a3a3a" stroke-width="1.3" stroke-opacity="0.72" stroke-linecap="round"/><path d="M194.9,47.2 l-0.7,1.2" stroke="#3a3a3a" stroke-width="1.1" stroke-opacity="0.43" stroke-linecap="round"/><path d="M191.2,41.4 l1.6,1.7" stroke="#3a3a3a" stroke-width="1.4" stroke-opacity="0.31" stroke-linecap="round"/><path d="M195.0,49.0 l-1.0,2.1" stroke="#3a3a3a" stroke-width="1.0" stroke-opacity="0.74" stroke-linecap="round"/><path d="M191.3,57.7 l-0.8,0.7" stroke="#3a3a3a" stroke-width="1.2" stroke-opacity="0.65" stroke-linecap="round"/><path d="M192.3,41.5 l-0.7,2.0" stroke="#3a3a3a" stroke-width="1.4" stroke-opacity="0.52" stroke-linecap="round"/><path d="M194.9,47.0 l0.9,1.4" stroke="#3a3a3a" stroke-width="0.9" stroke-opacity="0.61" stroke-linecap="round"/><path d="M197.0,49.5 l0.6,0.3" stroke="#3a3a3a" stroke-width="1.4" stroke-opacity="0.47" stroke-linecap="round"/><path d="M195.9,49.6 l0.6,0.3" stroke="#3a3a3a" stroke-width="1.3" stroke-opacity="0.62" stroke-linecap="round"/><path d="M195.0,47.8 l0.7,1.5" stroke="#3a3a3a" stroke-width="1.4" stroke-opacity="0.71" stroke-linecap="round"/><path d="M196.4,46.4 l-0.5,0.5" stroke="#3a3a3a" stroke-width="1.4" stroke-opacity="0.77" stroke-linecap="round"/><path d="M252.4,165.5 l-0.4,0.5" stroke="#3a3a3a" stroke-width="1.3" stroke-opacity="0.62" stroke-linecap="round"/><path d="M252.9,162.5 l1.0,1.4" stroke="#3a3a3a" stroke-width="0.8" stroke-opacity="0.35" stroke-linecap="round"/><path d="M252.0,163.6 l1.3,0.5" stroke="#3a3a3a" stroke-width="0.9" stroke-opacity="0.44" stroke-linecap="round"/><path d="M251.2,160.2 l0.6,1.1" stroke="#3a3a3a" stroke-width="1.5" stroke-opacity="0.55" stroke-linecap="round"/><path d="M252.5,164.1 l0.4,1.3" stroke="#3a3a3a" stroke-width="1.3" stroke-opacity="0.47" stroke-linecap="round"/><path d="M251.8,164.0 l1.1,1.1" stroke="#3a3a3a" stroke-width="1.4" stroke-opacity="0.35" stroke-linecap="round"/><path d="M252.0,164.9 l-0.4,0.9" stroke="#3a3a3a" stroke-width="1.5" stroke-opacity="0.30" stroke-linecap="round"/><path d="M251.8,165.0 l-0.8,1.3" stroke="#3a3a3a" stroke-width="0.8" stroke-opacity="0.55" stroke-linecap="round"/><path d="M251.1,166.8 l1.3,1.9" stroke="#3a3a3a" stroke-width="0.9" stroke-opacity="0.65" stroke-linecap="round"/><path d="M249.2,165.0 l-0.2,0.8" stroke="#3a3a3a" stroke-width="0.8" stroke-opacity="0.69" stroke-linecap="round"/><path d="M251.6,163.2 l0.4,1.2" stroke="#3a3a3a" stroke-width="1.0" stroke-opacity="0.75" stroke-linecap="round"/><path d="M256.9,169.1 l2.1,0.8" stroke="#3a3a3a" stroke-width="0.9" stroke-opacity="0.43" stroke-linecap="round"/><path d="M255.3,161.7 l1.5,1.6" stroke="#3a3a3a" stroke-width="1.1" stroke-opacity="0.57" stroke-linecap="round"/><path d="M252.0,165.0 l-0.4,1.9" stroke="#3a3a3a" stroke-width="1.0" stroke-opacity="0.46" stroke-linecap="round"/><path d="M253.9,169.0 l1.5,1.2" stroke="#3a3a3a" stroke-width="1.1" stroke-opacity="0.69" stroke-linecap="round"/><path d="M247.5,161.6 l0.2,0.8" stroke="#3a3a3a" stroke-width="1.4" stroke-opacity="0.42" stroke-linecap="round"/><path d="M275.9,133.1 l1.7,1.3" stroke="#3a3a3a" stroke-width="0.8" stroke-opacity="0.42" stroke-linecap="round"/><path d="M271.7,138.8 l1.2,1.0" stroke="#3a3a3a" stroke-width="1.0" stroke-opacity="0.39" stroke-linecap="round"/><path d="M275.3,129.9 l2.0,1.2" stroke="#3a3a3a" stroke-width="1.0" stroke-opacity="0.79" stroke-linecap="round"/><path d="M275.6,127.0 l0.5,1.9" stroke="#3a3a3a" stroke-width="0.9" stroke-opacity="0.62" stroke-linecap="round"/><path d="M276.0,131.1 l0.2,0.6" stroke="#3a3a3a" stroke-width="1.3" stroke-opacity="0.65" stroke-linecap="round"/><path d="M270.4,130.0 l0.4,1.7" stroke="#3a3a3a" stroke-width="0.8" stroke-opacity="0.60" stroke-linecap="round"/><path d="M274.5,130.5 l-0.1,1.4" stroke="#3a3a3a" stroke-width="1.3" stroke-opacity="0.51" stroke-linecap="round"/><path d="M276.4,144.5 l-1.3,1.4" stroke="#3a3a3a" stroke-width="1.3" stroke-opacity="0.65" stroke-linecap="round"/><path d="M276.8,126.7 l0.7,1.2" stroke="#3a3a3a" stroke-width="1.2" stroke-opacity="0.35" stroke-linecap="round"/><path d="M269.6,134.2 l-0.7,1.9" stroke="#3a3a3a" stroke-width="1.2" stroke-opacity="0.43" stroke-linecap="round"/><path d="M269.3,134.2 l-0.4,1.3" stroke="#3a3a3a" stroke-width="1.4" stroke-opacity="0.39" stroke-linecap="round"/><path d="M273.9,127.9 l0.7,1.9" stroke="#3a3a3a" stroke-width="1.1" stroke-opacity="0.79" stroke-linecap="round"/><path d="M277.7,130.9 l-1.6,1.3" stroke="#3a3a3a" stroke-width="1.1" stroke-opacity="0.35" stroke-linecap="round"/><path d="M274.3,129.5 l-0.6,1.5" stroke="#3a3a3a" stroke-width="1.1" stroke-opacity="0.62" stroke-linecap="round"/><path d="M277.3,124.0 l1.6,1.6" stroke="#3a3a3a" stroke-width="1.2" stroke-opacity="0.50" stroke-linecap="round"/><path d="M275.1,129.1 l-0.7,0.4" stroke="#3a3a3a" stroke-width="1.0" stroke-opacity="0.33" stroke-linecap="round"/><path d="M274.9,130.9 l0.4,1.3" stroke="#3a3a3a" stroke-width="1.3" stroke-opacity="0.48" stroke-linecap="round"/><path d="M275.0,130.6 l-0.4,0.9" stroke="#3a3a3a" stroke-width="1.5" stroke-opacity="0.56" stroke-linecap="round"/><path d="M60.5,163.7 l0.8,0.6" stroke="#3a3a3a" stroke-width="1.3" stroke-opacity="0.70" stroke-linecap="round"/><path d="M54.7,151.7 l-0.0,1.4" stroke="#3a3a3a" stroke-width="0.9" stroke-opacity="0.78" stroke-linecap="round"/><path d="M54.0,171.1 l0.4,2.0" stroke="#3a3a3a" stroke-width="0.9" stroke-opacity="0.57" stroke-linecap="round"/><path d="M68.4,171.8 l0.9,1.9" stroke="#3a3a3a" stroke-width="1.4" stroke-opacity="0.43" stroke-linecap="round"/><path d="M59.9,160.2 l0.9,0.3" stroke="#3a3a3a" stroke-width="1.3" stroke-opacity="0.44" stroke-linecap="round"/><path d="M60.3,172.4 l0.2,1.1" stroke="#3a3a3a" stroke-width="1.0" stroke-opacity="0.62" stroke-linecap="round"/><path d="M53.2,145.2 l1.9,0.9" stroke="#3a3a3a" stroke-width="1.4" stroke-opacity="0.75" stroke-linecap="round"/><path d="M63.1,139.9 l-0.5,0.7" stroke="#3a3a3a" stroke-width="1.2" stroke-opacity="0.31" stroke-linecap="round"/><path d="M71.7,161.2 l0.9,0.5" stroke="#3a3a3a" stroke-width="0.8" stroke-opacity="0.42" stroke-linecap="round"/><path d="M60.6,154.9 l1.0,0.7" stroke="#3a3a3a" stroke-width="1.4" stroke-opacity="0.70" stroke-linecap="round"/><path d="M64.4,170.9 l-0.5,1.9" stroke="#3a3a3a" stroke-width="1.4" stroke-opacity="0.69" stroke-linecap="round"/><path d="M63.8,151.4 l-0.3,0.9" stroke="#3a3a3a" stroke-width="1.1" stroke-opacity="0.67" stroke-linecap="round"/><path d="M52.7,164.2 l0.7,0.8" stroke="#3a3a3a" stroke-width="0.8" stroke-opacity="0.55" stroke-linecap="round"/><path d="M66.7,163.6 l1.2,0.9" stroke="#3a3a3a" stroke-width="1.1" stroke-opacity="0.55" stroke-linecap="round"/><path d="M184.3,234.8 l0.4,2.1" stroke="#3a3a3a" stroke-width="1.2" stroke-opacity="0.63" stroke-linecap="round"/><path d="M185.5,234.0 l0.4,1.2" stroke="#3a3a3a" stroke-width="1.5" stroke-opacity="0.34" stroke-linecap="round"/><path d="M184.0,233.4 l-0.5,1.6" stroke="#3a3a3a" stroke-width="1.4" stroke-opacity="0.47" stroke-linecap="round"/><path d="M186.7,234.7 l0.2,1.5" stroke="#3a3a3a" stroke-width="1.4" stroke-opacity="0.32" stroke-linecap="round"/><path d="M183.8,226.5 l0.9,2.0" stroke="#3a3a3a" stroke-width="1.1" stroke-opacity="0.56" stroke-linecap="round"/><path d="M185.8,226.4 l0.3,0.9" stroke="#3a3a3a" stroke-width="1.0" stroke-opacity="0.58" stroke-linecap="round"/><path d="M187.2,229.1 l0.1,1.3" stroke="#3a3a3a" stroke-width="0.9" stroke-opacity="0.55" stroke-linecap="round"/><path d="M202.1,231.2 l-0.9,1.5" stroke="#3a3a3a" stroke-width="1.0" stroke-opacity="0.46" stroke-linecap="round"/><path d="M181.5,250.6 l1.9,0.8" stroke="#3a3a3a" stroke-width="1.3" stroke-opacity="0.74" stroke-linecap="round"/><path d="M178.2,232.2 l0.4,0.6" stroke="#3a3a3a" stroke-width="0.7" stroke-opacity="0.39" stroke-linecap="round"/><path d="M194.6,227.8 l-1.5,1.4" stroke="#3a3a3a" stroke-width="1.2" stroke-opacity="0.61" stroke-linecap="round"/><path d="M178.8,226.1 l-0.2,1.8" stroke="#3a3a3a" stroke-width="1.2" stroke-opacity="0.41" stroke-linecap="round"/><path d="M177.2,215.9 l0.6,0.5" stroke="#3a3a3a" stroke-width="0.7" stroke-opacity="0.69" stroke-linecap="round"/><path d="M188.7,231.9 l0.7,1.6" stroke="#3a3a3a" stroke-width="1.4" stroke-opacity="0.69" stroke-linecap="round"/><path d="M184.6,234.8 l0.7,1.2" stroke="#3a3a3a" stroke-width="1.0" stroke-opacity="0.62" stroke-linecap="round"/><path d="M192.4,230.4 l-0.0,0.7" stroke="#3a3a3a" stroke-width="0.7" stroke-opacity="0.36" stroke-linecap="round"/><path d="M192.1,210.1 l1.3,0.5" stroke="#3a3a3a" stroke-width="1.0" stroke-opacity="0.60" stroke-linecap="round"/><path d="M194.1,229.8 l0.4,2.3" stroke="#3a3a3a" stroke-width="1.0" stroke-opacity="0.35" stroke-linecap="round"/><path d="M184.2,233.6 l0.6,0.2" stroke="#3a3a3a" stroke-width="1.2" stroke-opacity="0.36" stroke-linecap="round"/><path d="M190.2,233.4 l-0.5,0.6" stroke="#3a3a3a" stroke-width="0.8" stroke-opacity="0.31" stroke-linecap="round"/></g></symbol></defs></svg>
<div style="left:268px;top:769px;width:20px;height:20px;background:radial-gradient(circle at 70% 60%,#dcdcdc,#efefef 60%)"></div>
<div style="left:-40px;top:20px;width:881px;height:534px;background:#f0f0f0;border:1px solid #5e5e5e;box-shadow:0 3px 16px 1px rgba(0,0,0,0.42)"></div>
<div style="left:-39px;top:21px;width:879px;height:37px;background:#fff"></div>
<span class="t" style="right:1786.5px;top:33.26px;font-size:14.7px;line-height:14.7px;color:#000;letter-spacing:0.33px;">Texture Editor: Material [Normal]</span>
<div style="left:687px;top:38px;width:12px;height:1px;background:#000"></div>
<div style="left:745px;top:33px;width:12px;height:12px;border:1px solid #000"></div>
<svg style="left:803px;top:32px" width="14" height="14" viewBox="0 0 14 14"><path d="M1,1 L13,13 M13,1 L1,13" stroke="#000" stroke-width="1.1" fill="none"/></svg>
<div style="left:-20px;top:72px;width:137px;height:22px;background:#fff;border:1px solid #7a7a7a"></div>
<span class="t" style="left:0.3px;top:77.75px;font-size:12.7px;line-height:12.7px;color:#000;letter-spacing:-0.025px;">53a8ffab5aa715.jpg</span>
<div class="btn" style="left:125px;top:70px;width:91px;height:26px;"></div>
<span class="t" style="left:149.4px;top:77.75px;font-size:12.7px;line-height:12.7px;color:#000;letter-spacing:-0.219px;">Browse</span>
<div class="btn" style="left:224px;top:70px;width:91px;height:26px;"></div>
<span class="t" style="left:234px;top:77.75px;font-size:12.7px;line-height:12.7px;color:#000;letter-spacing:0.017px;">Open Image</span>
<div class="btn" style="left:324px;top:70px;width:91px;height:26px;"></div>
<span class="t" style="left:330px;top:77.75px;font-size:12.7px;line-height:12.7px;color:#000;letter-spacing:-0.025px;">Reload Image</span>
<div class="spin" style="left:-30px;top:103px;width:80px;height:20px"></div><div class="sbtn" style="left:34px;top:105px;width:14px;height:8.0px"></div><div class="sbtn" style="left:34px;top:113.0px;width:14px;height:8.0px"></div><div style="left:37.0px;top:107.0px;width:0;height:0;border-left:4.0px solid transparent;border-right:4.0px solid transparent;border-bottom:4.5px solid #000"></div><div style="left:37.0px;top:115.0px;width:0;height:0;border-left:4.0px solid transparent;border-right:4.0px solid transparent;border-top:4.5px solid #000"></div>
<div style="left:0px;top:111.5px;width:1px;height:3.5px;background:#7fd0f7"></div>
<div class="spin" style="left:-30px;top:129px;width:80px;height:20px"></div><div class="sbtn" style="left:34px;top:131px;width:14px;height:8.0px"></div><div class="sbtn" style="left:34px;top:139.0px;width:14px;height:8.0px"></div><div style="left:37.0px;top:133.0px;width:0;height:0;border-left:4.0px solid transparent;border-right:4.0px solid transparent;border-bottom:4.5px solid #000"></div><div style="left:37.0px;top:141.0px;width:0;height:0;border-left:4.0px solid transparent;border-right:4.0px solid transparent;border-top:4.5px solid #000"></div>
<div style="left:0px;top:137.5px;width:1px;height:3.5px;background:#7fd0f7"></div>
<div class="spin" style="left:-30px;top:155px;width:80px;height:20px"></div><div class="sbtn" style="left:34px;top:157px;width:14px;height:8.0px"></div><div class="sbtn" style="left:34px;top:165.0px;width:14px;height:8.0px"></div><div style="left:37.0px;top:159.0px;width:0;height:0;border-left:4.0px solid transparent;border-right:4.0px solid transparent;border-bottom:4.5px solid #000"></div><div style="left:37.0px;top:167.0px;width:0;height:0;border-left:4.0px solid transparent;border-right:4.0px solid transparent;border-top:4.5px solid #000"></div>
<div style="left:0px;top:163.5px;width:1px;height:3.5px;background:#7fd0f7"></div>
<div class="spin" style="left:-30px;top:181px;width:80px;height:20px"></div><div class="sbtn" style="left:34px;top:183px;width:14px;height:8.0px"></div><div class="sbtn" style="left:34px;top:191.0px;width:14px;height:8.0px"></div><div style="left:37.0px;top:185.0px;width:0;height:0;border-left:4.0px solid transparent;border-right:4.0px solid transparent;border-bottom:4.5px solid #000"></div><div style="left:37.0px;top:193.0px;width:0;height:0;border-left:4.0px solid transparent;border-right:4.0px solid transparent;border-top:4.5px solid #000"></div>
<div class="clip" style="left:0;top:182px;width:33px;height:18px"><span class="t" style="left:0.2px;top:3.85px;font-size:12.7px;line-height:12.7px;color:#000;letter-spacing:-0.016px;">00000</span></div>
<div style="left:-5px;top:229px;width:222px;height:1px;background:#a0a0a0"></div>
<div style="left:-5px;top:230px;width:222px;height:1px;background:#fff"></div>
<div class="combo" style="left:-5px;top:238px;width:164px;height:22px"></div><span class="t" style="left:4.5px;top:243.65px;font-size:12.7px;line-height:12.7px;color:#000;letter-spacing:-1.200px;">UV</span><svg style="left:141.5px;top:246.0px" width="12" height="7" viewBox="-1 -1 12 7"><polyline points="0,0 5.0,5 10,0" fill="none" stroke="#444" stroke-width="1.2"/></svg>
<span class="t" style="left:3.5px;top:274.15px;font-size:12.7px;line-height:12.7px;color:#000;">U</span>
<div class="spin" style="left:18px;top:269px;width:89px;height:20px"></div><div class="sbtn" style="left:91px;top:271px;width:14px;height:8.0px"></div><div class="sbtn" style="left:91px;top:279.0px;width:14px;height:8.0px"></div><div style="left:94.0px;top:273.0px;width:0;height:0;border-left:4.0px solid transparent;border-right:4.0px solid transparent;border-bottom:4.5px solid #000"></div><div style="left:94.0px;top:281.0px;width:0;height:0;border-left:4.0px solid transparent;border-right:4.0px solid transparent;border-top:4.5px solid #000"></div><span class="t" style="left:21.4px;top:274.15px;font-size:12.7px;line-height:12.7px;color:#000;letter-spacing:-0.214px;">0,0</span>
<span class="t" style="left:3.2px;top:301.15px;font-size:12.7px;line-height:12.7px;color:#000;">V</span>
<div class="spin" style="left:18px;top:296px;width:89px;height:20px"></div><div class="sbtn" style="left:91px;top:298px;width:14px;height:8.0px"></div><div class="sbtn" style="left:91px;top:306.0px;width:14px;height:8.0px"></div><div style="left:94.0px;top:300.0px;width:0;height:0;border-left:4.0px solid transparent;border-right:4.0px solid transparent;border-bottom:4.5px solid #000"></div><div style="left:94.0px;top:308.0px;width:0;height:0;border-left:4.0px solid transparent;border-right:4.0px solid transparent;border-top:4.5px solid #000"></div><span class="t" style="left:21.4px;top:301.15px;font-size:12.7px;line-height:12.7px;color:#000;letter-spacing:-0.214px;">0,0</span>
<div class="spin" style="left:3px;top:328px;width:89px;height:20px"></div><div class="sbtn" style="left:76px;top:330px;width:14px;height:8.0px"></div><div class="sbtn" style="left:76px;top:338.0px;width:14px;height:8.0px"></div><div style="left:79.0px;top:332.0px;width:0;height:0;border-left:4.0px solid transparent;border-right:4.0px solid transparent;border-bottom:4.5px solid #000"></div><div style="left:79.0px;top:340.0px;width:0;height:0;border-left:4.0px solid transparent;border-right:4.0px solid transparent;border-top:4.5px solid #000"></div><span class="t" style="left:6.5px;top:333.15px;font-size:12.7px;line-height:12.7px;color:#000;letter-spacing:-0.214px;">1,0</span>
<div class="spin" style="left:98px;top:328px;width:89px;height:20px"></div><div class="sbtn" style="left:171px;top:330px;width:14px;height:8.0px"></div><div class="sbtn" style="left:171px;top:338.0px;width:14px;height:8.0px"></div><div style="left:174.0px;top:332.0px;width:0;height:0;border-left:4.0px solid transparent;border-right:4.0px solid transparent;border-bottom:4.5px solid #000"></div><div style="left:174.0px;top:340.0px;width:0;height:0;border-left:4.0px solid transparent;border-right:4.0px solid transparent;border-top:4.5px solid #000"></div><span class="t" style="left:101.4px;top:333.15px;font-size:12.7px;line-height:12.7px;color:#000;letter-spacing:-0.214px;">0,0</span>
<div class="spin" style="left:3px;top:354px;width:89px;height:20px"></div><div class="sbtn" style="left:76px;top:356px;width:14px;height:8.0px"></div><div class="sbtn" style="left:76px;top:364.0px;width:14px;height:8.0px"></div><div style="left:79.0px;top:358.0px;width:0;height:0;border-left:4.0px solid transparent;border-right:4.0px solid transparent;border-bottom:4.5px solid #000"></div><div style="left:79.0px;top:366.0px;width:0;height:0;border-left:4.0px solid transparent;border-right:4.0px solid transparent;border-top:4.5px solid #000"></div><span class="t" style="left:6.5px;top:359.15px;font-size:12.7px;line-height:12.7px;color:#000;letter-spacing:-0.214px;">0,0</span>
<div class="spin" style="left:98px;top:354px;width:89px;height:20px"></div><div class="sbtn" style="left:171px;top:356px;width:14px;height:8.0px"></div><div class="sbtn" style="left:171px;top:364.0px;width:14px;height:8.0px"></div><div style="left:174.0px;top:358.0px;width:0;height:0;border-left:4.0px solid transparent;border-right:4.0px solid transparent;border-bottom:4.5px solid #000"></div><div style="left:174.0px;top:366.0px;width:0;height:0;border-left:4.0px solid transparent;border-right:4.0px solid transparent;border-top:4.5px solid #000"></div><span class="t" style="left:101.4px;top:359.15px;font-size:12.7px;line-height:12.7px;color:#000;letter-spacing:-0.214px;">1,0</span>
<div style="left:-5px;top:392px;width:222px;height:138px;border:1px solid #dcdcdc"></div>
<span class="t" style="left:10px;top:414.15px;font-size:12.7px;line-height:12.7px;color:#000;letter-spacing:-0.184px;">3000</span>
<span class="t" style="left:10px;top:437.15px;font-size:12.7px;line-height:12.7px;color:#000;letter-spacing:-0.184px;">3000</span>
<span class="t" style="left:10px;top:460.15px;font-size:12.7px;line-height:12.7px;color:#000;">1</span>
<span class="t" style="left:10px;top:483.15px;font-size:12.7px;line-height:12.7px;color:#000;">8</span>
<span class="t" style="left:10px;top:506.15px;font-size:12.7px;line-height:12.7px;color:#000;letter-spacing:-0.164px;">8.583 MB</span>
<span class="t" style="left:-0.8px;top:483.15px;font-size:12.7px;line-height:12.7px;color:#000;">:</span>
<span class="t" style="left:223.3px;top:105.65px;font-size:12.7px;line-height:12.7px;color:#000;letter-spacing:-0.061px;">Preview</span>
<span class="t" style="left:529.3px;top:105.65px;font-size:12.7px;line-height:12.7px;color:#000;letter-spacing:-0.027px;">Original</span>
<div style="left:223px;top:125px;width:300px;height:300px;background:#000"></div>
<svg style="left:224px;top:126px" width="298" height="298"><use href="#marble" width="298" height="298"/></svg>
<div style="left:529px;top:125px;width:300px;height:300px;background:#000"></div>
<svg style="left:530px;top:126px" width="298" height="298"><use href="#marble" width="298" height="298"/></svg>
</body></html>
